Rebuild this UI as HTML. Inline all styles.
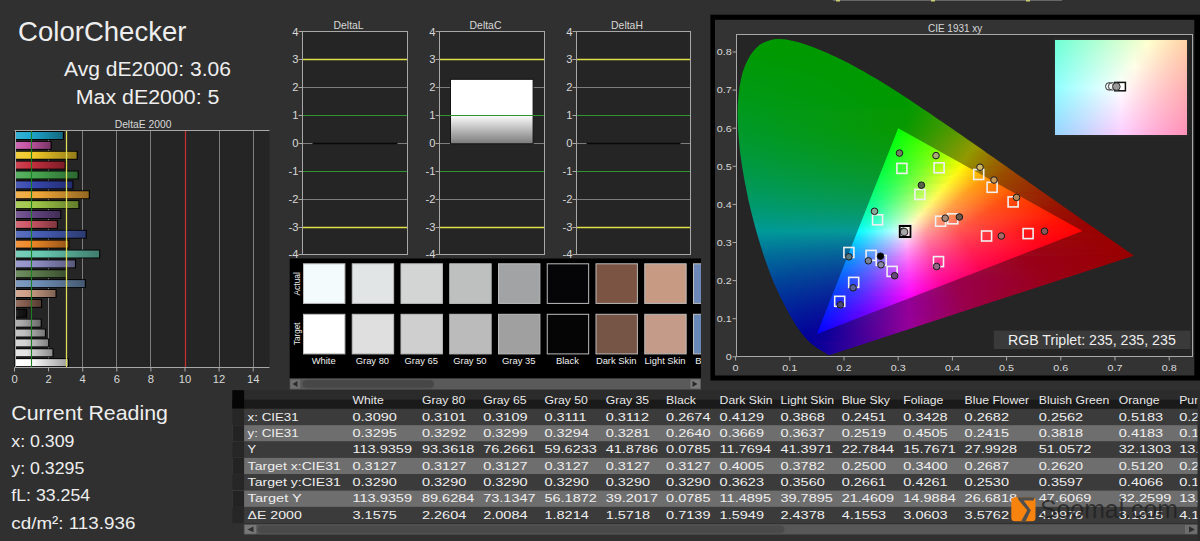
<!DOCTYPE html>
<html><head><meta charset="utf-8"><style>
html,body{margin:0;padding:0;background:#303030;overflow:hidden;width:1200px;height:541px}
svg{display:block;font-family:"Liberation Sans",sans-serif}
</style></head><body>
<svg width="1200" height="541" viewBox="0 0 1200 541">
<defs><linearGradient id="bg0" x1="0" y1="0" x2="1" y2="0"><stop offset="0" stop-color="#3ab2d5"/><stop offset=".3" stop-color="#20a8d0"/><stop offset="1" stop-color="#136880"/></linearGradient>
<linearGradient id="bg1" x1="0" y1="0" x2="1" y2="0"><stop offset="0" stop-color="#ce6cb2"/><stop offset=".3" stop-color="#c858a8"/><stop offset="1" stop-color="#7c3668"/></linearGradient>
<linearGradient id="bg2" x1="0" y1="0" x2="1" y2="0"><stop offset="0" stop-color="#f1ce41"/><stop offset=".3" stop-color="#f0c828"/><stop offset="1" stop-color="#947c18"/></linearGradient>
<linearGradient id="bg3" x1="0" y1="0" x2="1" y2="0"><stop offset="0" stop-color="#ce4856"/><stop offset=".3" stop-color="#c83040"/><stop offset="1" stop-color="#7c1d27"/></linearGradient>
<linearGradient id="bg4" x1="0" y1="0" x2="1" y2="0"><stop offset="0" stop-color="#5db265"/><stop offset=".3" stop-color="#48a850"/><stop offset="1" stop-color="#2c6831"/></linearGradient>
<linearGradient id="bg5" x1="0" y1="0" x2="1" y2="0"><stop offset="0" stop-color="#4f5db9"/><stop offset=".3" stop-color="#3848b0"/><stop offset="1" stop-color="#222c6d"/></linearGradient>
<linearGradient id="bg6" x1="0" y1="0" x2="1" y2="0"><stop offset="0" stop-color="#f1b24f"/><stop offset=".3" stop-color="#f0a838"/><stop offset="1" stop-color="#946822"/></linearGradient>
<linearGradient id="bg7" x1="0" y1="0" x2="1" y2="0"><stop offset="0" stop-color="#abce5d"/><stop offset=".3" stop-color="#a0c848"/><stop offset="1" stop-color="#637c2c"/></linearGradient>
<linearGradient id="bg8" x1="0" y1="0" x2="1" y2="0"><stop offset="0" stop-color="#7a5d96"/><stop offset=".3" stop-color="#684888"/><stop offset="1" stop-color="#402c54"/></linearGradient>
<linearGradient id="bg9" x1="0" y1="0" x2="1" y2="0"><stop offset="0" stop-color="#d56c7a"/><stop offset=".3" stop-color="#d05868"/><stop offset="1" stop-color="#803640"/></linearGradient>
<linearGradient id="bg10" x1="0" y1="0" x2="1" y2="0"><stop offset="0" stop-color="#5d73c0"/><stop offset=".3" stop-color="#4860b8"/><stop offset="1" stop-color="#2c3b72"/></linearGradient>
<linearGradient id="bg11" x1="0" y1="0" x2="1" y2="0"><stop offset="0" stop-color="#f19641"/><stop offset=".3" stop-color="#f08828"/><stop offset="1" stop-color="#945418"/></linearGradient>
<linearGradient id="bg12" x1="0" y1="0" x2="1" y2="0"><stop offset="0" stop-color="#7aceb9"/><stop offset=".3" stop-color="#68c8b0"/><stop offset="1" stop-color="#407c6d"/></linearGradient>
<linearGradient id="bg13" x1="0" y1="0" x2="1" y2="0"><stop offset="0" stop-color="#9d9dce"/><stop offset=".3" stop-color="#9090c8"/><stop offset="1" stop-color="#59597c"/></linearGradient>
<linearGradient id="bg14" x1="0" y1="0" x2="1" y2="0"><stop offset="0" stop-color="#738f65"/><stop offset=".3" stop-color="#608050"/><stop offset="1" stop-color="#3b4f31"/></linearGradient>
<linearGradient id="bg15" x1="0" y1="0" x2="1" y2="0"><stop offset="0" stop-color="#819dc0"/><stop offset=".3" stop-color="#7090b8"/><stop offset="1" stop-color="#455972"/></linearGradient>
<linearGradient id="bg16" x1="0" y1="0" x2="1" y2="0"><stop offset="0" stop-color="#d5ab96"/><stop offset=".3" stop-color="#d0a088"/><stop offset="1" stop-color="#806354"/></linearGradient>
<linearGradient id="bg17" x1="0" y1="0" x2="1" y2="0"><stop offset="0" stop-color="#967365"/><stop offset=".3" stop-color="#886050"/><stop offset="1" stop-color="#543b31"/></linearGradient>
<linearGradient id="bg18" x1="0" y1="0" x2="1" y2="0"><stop offset="0" stop-color="#333333"/><stop offset=".3" stop-color="#181818"/><stop offset="1" stop-color="#0e0e0e"/></linearGradient>
<linearGradient id="bg19" x1="0" y1="0" x2="1" y2="0"><stop offset="0" stop-color="#b2b2b2"/><stop offset=".3" stop-color="#a8a8a8"/><stop offset="1" stop-color="#686868"/></linearGradient>
<linearGradient id="bg20" x1="0" y1="0" x2="1" y2="0"><stop offset="0" stop-color="#c7c7c7"/><stop offset=".3" stop-color="#c0c0c0"/><stop offset="1" stop-color="#777777"/></linearGradient>
<linearGradient id="bg21" x1="0" y1="0" x2="1" y2="0"><stop offset="0" stop-color="#d9d9d9"/><stop offset=".3" stop-color="#d4d4d4"/><stop offset="1" stop-color="#838383"/></linearGradient>
<linearGradient id="bg22" x1="0" y1="0" x2="1" y2="0"><stop offset="0" stop-color="#e7e7e7"/><stop offset=".3" stop-color="#e4e4e4"/><stop offset="1" stop-color="#8d8d8d"/></linearGradient>
<linearGradient id="bg23" x1="0" y1="0" x2="1" y2="0"><stop offset="0" stop-color="#ffffff"/><stop offset=".3" stop-color="#ffffff"/><stop offset="1" stop-color="#9e9e9e"/></linearGradient>
<linearGradient id="dc" x1="0" y1="0" x2="0" y2="1"><stop offset="0" stop-color="#fff"/><stop offset=".55" stop-color="#fff"/><stop offset="1" stop-color="#7a7a7a"/></linearGradient>
<clipPath id="swc"><rect x="289.7" y="258.5" width="411.3" height="120"/></clipPath><linearGradient id="i0"><stop offset="0.00" stop-color="#6effd6"/><stop offset="0.10" stop-color="#84ffd5"/><stop offset="0.20" stop-color="#99ffd4"/><stop offset="0.30" stop-color="#adffd3"/><stop offset="0.40" stop-color="#c0ffd2"/><stop offset="0.50" stop-color="#d4ffd1"/><stop offset="0.60" stop-color="#e7ffd0"/><stop offset="0.70" stop-color="#fbffce"/><stop offset="0.80" stop-color="#fff0c1"/><stop offset="0.90" stop-color="#ffe0b3"/><stop offset="1.00" stop-color="#ffd1a6"/></linearGradient><linearGradient id="i1"><stop offset="0.00" stop-color="#6fffd7"/><stop offset="0.10" stop-color="#85ffd6"/><stop offset="0.20" stop-color="#99ffd5"/><stop offset="0.30" stop-color="#adffd4"/><stop offset="0.40" stop-color="#c1ffd3"/><stop offset="0.50" stop-color="#d5ffd2"/><stop offset="0.60" stop-color="#e8ffd1"/><stop offset="0.70" stop-color="#fcffcf"/><stop offset="0.80" stop-color="#fff0c2"/><stop offset="0.90" stop-color="#ffdfb3"/><stop offset="1.00" stop-color="#ffd1a6"/></linearGradient><linearGradient id="i2"><stop offset="0.00" stop-color="#70ffd7"/><stop offset="0.10" stop-color="#85ffd7"/><stop offset="0.20" stop-color="#9affd6"/><stop offset="0.30" stop-color="#aeffd5"/><stop offset="0.40" stop-color="#c2ffd4"/><stop offset="0.50" stop-color="#d5ffd3"/><stop offset="0.60" stop-color="#e9ffd1"/><stop offset="0.70" stop-color="#fdffd0"/><stop offset="0.80" stop-color="#ffefc2"/><stop offset="0.90" stop-color="#ffdeb3"/><stop offset="1.00" stop-color="#ffd0a7"/></linearGradient><linearGradient id="i3"><stop offset="0.00" stop-color="#70ffd8"/><stop offset="0.10" stop-color="#86ffd7"/><stop offset="0.20" stop-color="#9bffd6"/><stop offset="0.30" stop-color="#afffd5"/><stop offset="0.40" stop-color="#c3ffd5"/><stop offset="0.50" stop-color="#d6ffd3"/><stop offset="0.60" stop-color="#eaffd2"/><stop offset="0.70" stop-color="#feffd1"/><stop offset="0.80" stop-color="#ffeec2"/><stop offset="0.90" stop-color="#ffdeb4"/><stop offset="1.00" stop-color="#ffcfa7"/></linearGradient><linearGradient id="i4"><stop offset="0.00" stop-color="#71ffd9"/><stop offset="0.10" stop-color="#87ffd8"/><stop offset="0.20" stop-color="#9bffd7"/><stop offset="0.30" stop-color="#b0ffd6"/><stop offset="0.40" stop-color="#c3ffd5"/><stop offset="0.50" stop-color="#d7ffd4"/><stop offset="0.60" stop-color="#ebffd3"/><stop offset="0.70" stop-color="#feffd2"/><stop offset="0.80" stop-color="#ffedc2"/><stop offset="0.90" stop-color="#ffddb4"/><stop offset="1.00" stop-color="#ffcea7"/></linearGradient><linearGradient id="i5"><stop offset="0.00" stop-color="#72ffda"/><stop offset="0.10" stop-color="#87ffd9"/><stop offset="0.20" stop-color="#9cffd8"/><stop offset="0.30" stop-color="#b0ffd7"/><stop offset="0.40" stop-color="#c4ffd6"/><stop offset="0.50" stop-color="#d8ffd5"/><stop offset="0.60" stop-color="#ecffd4"/><stop offset="0.70" stop-color="#ffffd3"/><stop offset="0.80" stop-color="#ffecc2"/><stop offset="0.90" stop-color="#ffdcb4"/><stop offset="1.00" stop-color="#ffcea7"/></linearGradient><linearGradient id="i6"><stop offset="0.00" stop-color="#72ffdb"/><stop offset="0.10" stop-color="#88ffda"/><stop offset="0.20" stop-color="#9dffd9"/><stop offset="0.30" stop-color="#b1ffd8"/><stop offset="0.40" stop-color="#c5ffd7"/><stop offset="0.50" stop-color="#d9ffd6"/><stop offset="0.60" stop-color="#ecffd5"/><stop offset="0.70" stop-color="#fffed3"/><stop offset="0.80" stop-color="#ffebc3"/><stop offset="0.90" stop-color="#ffdbb4"/><stop offset="1.00" stop-color="#ffcda7"/></linearGradient><linearGradient id="i7"><stop offset="0.00" stop-color="#73ffdb"/><stop offset="0.10" stop-color="#89ffdb"/><stop offset="0.20" stop-color="#9dffda"/><stop offset="0.30" stop-color="#b2ffd9"/><stop offset="0.40" stop-color="#c6ffd8"/><stop offset="0.50" stop-color="#daffd7"/><stop offset="0.60" stop-color="#edffd6"/><stop offset="0.70" stop-color="#fffdd3"/><stop offset="0.80" stop-color="#ffeac3"/><stop offset="0.90" stop-color="#ffdab4"/><stop offset="1.00" stop-color="#ffcca8"/></linearGradient><linearGradient id="i8"><stop offset="0.00" stop-color="#74ffdc"/><stop offset="0.10" stop-color="#89ffdb"/><stop offset="0.20" stop-color="#9effdb"/><stop offset="0.30" stop-color="#b2ffda"/><stop offset="0.40" stop-color="#c7ffd9"/><stop offset="0.50" stop-color="#daffd8"/><stop offset="0.60" stop-color="#eeffd7"/><stop offset="0.70" stop-color="#fffcd3"/><stop offset="0.80" stop-color="#ffeac3"/><stop offset="0.90" stop-color="#ffdab5"/><stop offset="1.00" stop-color="#ffcba8"/></linearGradient><linearGradient id="i9"><stop offset="0.00" stop-color="#74ffdd"/><stop offset="0.10" stop-color="#8affdc"/><stop offset="0.20" stop-color="#9fffdb"/><stop offset="0.30" stop-color="#b3ffdb"/><stop offset="0.40" stop-color="#c7ffda"/><stop offset="0.50" stop-color="#dbffd9"/><stop offset="0.60" stop-color="#efffd8"/><stop offset="0.70" stop-color="#fffbd3"/><stop offset="0.80" stop-color="#ffe9c3"/><stop offset="0.90" stop-color="#ffd9b5"/><stop offset="1.00" stop-color="#ffcba8"/></linearGradient><linearGradient id="i10"><stop offset="0.00" stop-color="#75ffde"/><stop offset="0.10" stop-color="#8bffdd"/><stop offset="0.20" stop-color="#a0ffdc"/><stop offset="0.30" stop-color="#b4ffdc"/><stop offset="0.40" stop-color="#c8ffdb"/><stop offset="0.50" stop-color="#dcffda"/><stop offset="0.60" stop-color="#f0ffd9"/><stop offset="0.70" stop-color="#fffad4"/><stop offset="0.80" stop-color="#ffe8c3"/><stop offset="0.90" stop-color="#ffd8b5"/><stop offset="1.00" stop-color="#ffcaa8"/></linearGradient><linearGradient id="i11"><stop offset="0.00" stop-color="#76ffdf"/><stop offset="0.10" stop-color="#8bffde"/><stop offset="0.20" stop-color="#a0ffdd"/><stop offset="0.30" stop-color="#b5ffdc"/><stop offset="0.40" stop-color="#c9ffdc"/><stop offset="0.50" stop-color="#ddffdb"/><stop offset="0.60" stop-color="#f1ffda"/><stop offset="0.70" stop-color="#fff9d4"/><stop offset="0.80" stop-color="#ffe7c4"/><stop offset="0.90" stop-color="#ffd7b5"/><stop offset="1.00" stop-color="#ffc9a9"/></linearGradient><linearGradient id="i12"><stop offset="0.00" stop-color="#76ffe0"/><stop offset="0.10" stop-color="#8cffdf"/><stop offset="0.20" stop-color="#a1ffde"/><stop offset="0.30" stop-color="#b6ffdd"/><stop offset="0.40" stop-color="#caffdc"/><stop offset="0.50" stop-color="#deffdc"/><stop offset="0.60" stop-color="#f2ffdb"/><stop offset="0.70" stop-color="#fff8d4"/><stop offset="0.80" stop-color="#ffe6c4"/><stop offset="0.90" stop-color="#ffd7b5"/><stop offset="1.00" stop-color="#ffc9a9"/></linearGradient><linearGradient id="i13"><stop offset="0.00" stop-color="#77ffe0"/><stop offset="0.10" stop-color="#8dffe0"/><stop offset="0.20" stop-color="#a2ffdf"/><stop offset="0.30" stop-color="#b6ffde"/><stop offset="0.40" stop-color="#cbffdd"/><stop offset="0.50" stop-color="#dfffdd"/><stop offset="0.60" stop-color="#f3ffdc"/><stop offset="0.70" stop-color="#fff7d4"/><stop offset="0.80" stop-color="#ffe5c4"/><stop offset="0.90" stop-color="#ffd6b6"/><stop offset="1.00" stop-color="#ffc8a9"/></linearGradient><linearGradient id="i14"><stop offset="0.00" stop-color="#78ffe1"/><stop offset="0.10" stop-color="#8dffe1"/><stop offset="0.20" stop-color="#a3ffe0"/><stop offset="0.30" stop-color="#b7ffdf"/><stop offset="0.40" stop-color="#cbffde"/><stop offset="0.50" stop-color="#dfffdd"/><stop offset="0.60" stop-color="#f4ffdd"/><stop offset="0.70" stop-color="#fff6d4"/><stop offset="0.80" stop-color="#ffe5c4"/><stop offset="0.90" stop-color="#ffd5b6"/><stop offset="1.00" stop-color="#ffc7a9"/></linearGradient><linearGradient id="i15"><stop offset="0.00" stop-color="#78ffe2"/><stop offset="0.10" stop-color="#8effe1"/><stop offset="0.20" stop-color="#a3ffe1"/><stop offset="0.30" stop-color="#b8ffe0"/><stop offset="0.40" stop-color="#ccffdf"/><stop offset="0.50" stop-color="#e0ffde"/><stop offset="0.60" stop-color="#f5ffde"/><stop offset="0.70" stop-color="#fff5d4"/><stop offset="0.80" stop-color="#ffe4c4"/><stop offset="0.90" stop-color="#ffd4b6"/><stop offset="1.00" stop-color="#ffc6a9"/></linearGradient><linearGradient id="i16"><stop offset="0.00" stop-color="#79ffe3"/><stop offset="0.10" stop-color="#8fffe2"/><stop offset="0.20" stop-color="#a4ffe2"/><stop offset="0.30" stop-color="#b9ffe1"/><stop offset="0.40" stop-color="#cdffe0"/><stop offset="0.50" stop-color="#e1ffdf"/><stop offset="0.60" stop-color="#f5ffdf"/><stop offset="0.70" stop-color="#fff5d5"/><stop offset="0.80" stop-color="#ffe3c4"/><stop offset="0.90" stop-color="#ffd3b6"/><stop offset="1.00" stop-color="#ffc6aa"/></linearGradient><linearGradient id="i17"><stop offset="0.00" stop-color="#7affe4"/><stop offset="0.10" stop-color="#90ffe3"/><stop offset="0.20" stop-color="#a5ffe2"/><stop offset="0.30" stop-color="#b9ffe2"/><stop offset="0.40" stop-color="#ceffe1"/><stop offset="0.50" stop-color="#e2ffe0"/><stop offset="0.60" stop-color="#f6ffe0"/><stop offset="0.70" stop-color="#fff4d5"/><stop offset="0.80" stop-color="#ffe2c5"/><stop offset="0.90" stop-color="#ffd3b6"/><stop offset="1.00" stop-color="#ffc5aa"/></linearGradient><linearGradient id="i18"><stop offset="0.00" stop-color="#7affe5"/><stop offset="0.10" stop-color="#90ffe4"/><stop offset="0.20" stop-color="#a5ffe3"/><stop offset="0.30" stop-color="#baffe3"/><stop offset="0.40" stop-color="#cfffe2"/><stop offset="0.50" stop-color="#e3ffe1"/><stop offset="0.60" stop-color="#f7ffe0"/><stop offset="0.70" stop-color="#fff3d5"/><stop offset="0.80" stop-color="#ffe1c5"/><stop offset="0.90" stop-color="#ffd2b7"/><stop offset="1.00" stop-color="#ffc4aa"/></linearGradient><linearGradient id="i19"><stop offset="0.00" stop-color="#7bffe5"/><stop offset="0.10" stop-color="#91ffe5"/><stop offset="0.20" stop-color="#a6ffe4"/><stop offset="0.30" stop-color="#bbffe4"/><stop offset="0.40" stop-color="#cfffe3"/><stop offset="0.50" stop-color="#e4ffe2"/><stop offset="0.60" stop-color="#f8ffe1"/><stop offset="0.70" stop-color="#fff2d5"/><stop offset="0.80" stop-color="#ffe0c5"/><stop offset="0.90" stop-color="#ffd1b7"/><stop offset="1.00" stop-color="#ffc4aa"/></linearGradient><linearGradient id="i20"><stop offset="0.00" stop-color="#7cffe6"/><stop offset="0.10" stop-color="#92ffe6"/><stop offset="0.20" stop-color="#a7ffe5"/><stop offset="0.30" stop-color="#bcffe4"/><stop offset="0.40" stop-color="#d0ffe4"/><stop offset="0.50" stop-color="#e5ffe3"/><stop offset="0.60" stop-color="#f9ffe2"/><stop offset="0.70" stop-color="#fff1d5"/><stop offset="0.80" stop-color="#ffe0c5"/><stop offset="0.90" stop-color="#ffd0b7"/><stop offset="1.00" stop-color="#ffc3ab"/></linearGradient><linearGradient id="i21"><stop offset="0.00" stop-color="#7cffe7"/><stop offset="0.10" stop-color="#92ffe7"/><stop offset="0.20" stop-color="#a8ffe6"/><stop offset="0.30" stop-color="#bdffe5"/><stop offset="0.40" stop-color="#d1ffe5"/><stop offset="0.50" stop-color="#e6ffe4"/><stop offset="0.60" stop-color="#faffe3"/><stop offset="0.70" stop-color="#fff0d5"/><stop offset="0.80" stop-color="#ffdfc5"/><stop offset="0.90" stop-color="#ffd0b7"/><stop offset="1.00" stop-color="#ffc2ab"/></linearGradient><linearGradient id="i22"><stop offset="0.00" stop-color="#7dffe8"/><stop offset="0.10" stop-color="#93ffe7"/><stop offset="0.20" stop-color="#a8ffe7"/><stop offset="0.30" stop-color="#bdffe6"/><stop offset="0.40" stop-color="#d2ffe6"/><stop offset="0.50" stop-color="#e7ffe5"/><stop offset="0.60" stop-color="#fbffe4"/><stop offset="0.70" stop-color="#ffefd6"/><stop offset="0.80" stop-color="#ffdec6"/><stop offset="0.90" stop-color="#ffcfb7"/><stop offset="1.00" stop-color="#ffc1ab"/></linearGradient><linearGradient id="i23"><stop offset="0.00" stop-color="#7effe9"/><stop offset="0.10" stop-color="#94ffe8"/><stop offset="0.20" stop-color="#a9ffe8"/><stop offset="0.30" stop-color="#beffe7"/><stop offset="0.40" stop-color="#d3ffe7"/><stop offset="0.50" stop-color="#e7ffe6"/><stop offset="0.60" stop-color="#fcffe5"/><stop offset="0.70" stop-color="#ffeed6"/><stop offset="0.80" stop-color="#ffddc6"/><stop offset="0.90" stop-color="#ffceb8"/><stop offset="1.00" stop-color="#ffc1ab"/></linearGradient><linearGradient id="i24"><stop offset="0.00" stop-color="#7fffea"/><stop offset="0.10" stop-color="#95ffe9"/><stop offset="0.20" stop-color="#aaffe9"/><stop offset="0.30" stop-color="#bfffe8"/><stop offset="0.40" stop-color="#d4ffe8"/><stop offset="0.50" stop-color="#e8ffe7"/><stop offset="0.60" stop-color="#fdffe6"/><stop offset="0.70" stop-color="#ffedd6"/><stop offset="0.80" stop-color="#ffdcc6"/><stop offset="0.90" stop-color="#ffcdb8"/><stop offset="1.00" stop-color="#ffc0ab"/></linearGradient><linearGradient id="i25"><stop offset="0.00" stop-color="#7fffeb"/><stop offset="0.10" stop-color="#95ffea"/><stop offset="0.20" stop-color="#abffea"/><stop offset="0.30" stop-color="#c0ffe9"/><stop offset="0.40" stop-color="#d5ffe9"/><stop offset="0.50" stop-color="#e9ffe8"/><stop offset="0.60" stop-color="#feffe7"/><stop offset="0.70" stop-color="#ffecd6"/><stop offset="0.80" stop-color="#ffdcc6"/><stop offset="0.90" stop-color="#ffcdb8"/><stop offset="1.00" stop-color="#ffbfac"/></linearGradient><linearGradient id="i26"><stop offset="0.00" stop-color="#80ffeb"/><stop offset="0.10" stop-color="#96ffeb"/><stop offset="0.20" stop-color="#acffeb"/><stop offset="0.30" stop-color="#c1ffea"/><stop offset="0.40" stop-color="#d5ffea"/><stop offset="0.50" stop-color="#eaffe9"/><stop offset="0.60" stop-color="#ffffe8"/><stop offset="0.70" stop-color="#ffecd6"/><stop offset="0.80" stop-color="#ffdbc6"/><stop offset="0.90" stop-color="#ffccb8"/><stop offset="1.00" stop-color="#ffbfac"/></linearGradient><linearGradient id="i27"><stop offset="0.00" stop-color="#81ffec"/><stop offset="0.10" stop-color="#97ffec"/><stop offset="0.20" stop-color="#acffeb"/><stop offset="0.30" stop-color="#c1ffeb"/><stop offset="0.40" stop-color="#d6ffeb"/><stop offset="0.50" stop-color="#ebffea"/><stop offset="0.60" stop-color="#fffee9"/><stop offset="0.70" stop-color="#ffebd6"/><stop offset="0.80" stop-color="#ffdac6"/><stop offset="0.90" stop-color="#ffcbb8"/><stop offset="1.00" stop-color="#ffbeac"/></linearGradient><linearGradient id="i28"><stop offset="0.00" stop-color="#81ffed"/><stop offset="0.10" stop-color="#98ffed"/><stop offset="0.20" stop-color="#adffec"/><stop offset="0.30" stop-color="#c2ffec"/><stop offset="0.40" stop-color="#d7ffeb"/><stop offset="0.50" stop-color="#ecffeb"/><stop offset="0.60" stop-color="#fffde9"/><stop offset="0.70" stop-color="#ffead7"/><stop offset="0.80" stop-color="#ffd9c7"/><stop offset="0.90" stop-color="#ffcab9"/><stop offset="1.00" stop-color="#ffbdac"/></linearGradient><linearGradient id="i29"><stop offset="0.00" stop-color="#82ffee"/><stop offset="0.10" stop-color="#98ffee"/><stop offset="0.20" stop-color="#aeffed"/><stop offset="0.30" stop-color="#c3ffed"/><stop offset="0.40" stop-color="#d8ffec"/><stop offset="0.50" stop-color="#edffec"/><stop offset="0.60" stop-color="#fffce9"/><stop offset="0.70" stop-color="#ffe9d7"/><stop offset="0.80" stop-color="#ffd8c7"/><stop offset="0.90" stop-color="#ffcab9"/><stop offset="1.00" stop-color="#ffbcac"/></linearGradient><linearGradient id="i30"><stop offset="0.00" stop-color="#83ffef"/><stop offset="0.10" stop-color="#99ffef"/><stop offset="0.20" stop-color="#afffee"/><stop offset="0.30" stop-color="#c4ffee"/><stop offset="0.40" stop-color="#d9ffed"/><stop offset="0.50" stop-color="#eeffed"/><stop offset="0.60" stop-color="#fffbe9"/><stop offset="0.70" stop-color="#ffe8d7"/><stop offset="0.80" stop-color="#ffd7c7"/><stop offset="0.90" stop-color="#ffc9b9"/><stop offset="1.00" stop-color="#ffbcad"/></linearGradient><linearGradient id="i31"><stop offset="0.00" stop-color="#84fff0"/><stop offset="0.10" stop-color="#9afff0"/><stop offset="0.20" stop-color="#afffef"/><stop offset="0.30" stop-color="#c5ffef"/><stop offset="0.40" stop-color="#daffee"/><stop offset="0.50" stop-color="#efffee"/><stop offset="0.60" stop-color="#fffae9"/><stop offset="0.70" stop-color="#ffe7d7"/><stop offset="0.80" stop-color="#ffd7c7"/><stop offset="0.90" stop-color="#ffc8b9"/><stop offset="1.00" stop-color="#ffbbad"/></linearGradient><linearGradient id="i32"><stop offset="0.00" stop-color="#84fff1"/><stop offset="0.10" stop-color="#9bfff0"/><stop offset="0.20" stop-color="#b0fff0"/><stop offset="0.30" stop-color="#c6fff0"/><stop offset="0.40" stop-color="#dbffef"/><stop offset="0.50" stop-color="#f0ffef"/><stop offset="0.60" stop-color="#fff9e9"/><stop offset="0.70" stop-color="#ffe6d7"/><stop offset="0.80" stop-color="#ffd6c7"/><stop offset="0.90" stop-color="#ffc7b9"/><stop offset="1.00" stop-color="#ffbaad"/></linearGradient><linearGradient id="i33"><stop offset="0.00" stop-color="#85fff2"/><stop offset="0.10" stop-color="#9bfff1"/><stop offset="0.20" stop-color="#b1fff1"/><stop offset="0.30" stop-color="#c6fff1"/><stop offset="0.40" stop-color="#dcfff0"/><stop offset="0.50" stop-color="#f1fff0"/><stop offset="0.60" stop-color="#fff8e9"/><stop offset="0.70" stop-color="#ffe5d7"/><stop offset="0.80" stop-color="#ffd5c8"/><stop offset="0.90" stop-color="#ffc7ba"/><stop offset="1.00" stop-color="#ffbaad"/></linearGradient><linearGradient id="i34"><stop offset="0.00" stop-color="#86fff3"/><stop offset="0.10" stop-color="#9cfff2"/><stop offset="0.20" stop-color="#b2fff2"/><stop offset="0.30" stop-color="#c7fff2"/><stop offset="0.40" stop-color="#dcfff1"/><stop offset="0.50" stop-color="#f2fff1"/><stop offset="0.60" stop-color="#fff7e9"/><stop offset="0.70" stop-color="#ffe5d7"/><stop offset="0.80" stop-color="#ffd4c8"/><stop offset="0.90" stop-color="#ffc6ba"/><stop offset="1.00" stop-color="#ffb9ad"/></linearGradient><linearGradient id="i35"><stop offset="0.00" stop-color="#86fff4"/><stop offset="0.10" stop-color="#9dfff3"/><stop offset="0.20" stop-color="#b3fff3"/><stop offset="0.30" stop-color="#c8fff3"/><stop offset="0.40" stop-color="#ddfff2"/><stop offset="0.50" stop-color="#f3fff2"/><stop offset="0.60" stop-color="#fff6ea"/><stop offset="0.70" stop-color="#ffe4d8"/><stop offset="0.80" stop-color="#ffd3c8"/><stop offset="0.90" stop-color="#ffc5ba"/><stop offset="1.00" stop-color="#ffb8ae"/></linearGradient><linearGradient id="i36"><stop offset="0.00" stop-color="#87fff4"/><stop offset="0.10" stop-color="#9efff4"/><stop offset="0.20" stop-color="#b3fff4"/><stop offset="0.30" stop-color="#c9fff4"/><stop offset="0.40" stop-color="#defff3"/><stop offset="0.50" stop-color="#f4fff3"/><stop offset="0.60" stop-color="#fff5ea"/><stop offset="0.70" stop-color="#ffe3d8"/><stop offset="0.80" stop-color="#ffd3c8"/><stop offset="0.90" stop-color="#ffc4ba"/><stop offset="1.00" stop-color="#ffb8ae"/></linearGradient><linearGradient id="i37"><stop offset="0.00" stop-color="#88fff5"/><stop offset="0.10" stop-color="#9efff5"/><stop offset="0.20" stop-color="#b4fff5"/><stop offset="0.30" stop-color="#cafff5"/><stop offset="0.40" stop-color="#dffff4"/><stop offset="0.50" stop-color="#f5fff4"/><stop offset="0.60" stop-color="#fff4ea"/><stop offset="0.70" stop-color="#ffe2d8"/><stop offset="0.80" stop-color="#ffd2c8"/><stop offset="0.90" stop-color="#ffc4ba"/><stop offset="1.00" stop-color="#ffb7ae"/></linearGradient><linearGradient id="i38"><stop offset="0.00" stop-color="#89fff6"/><stop offset="0.10" stop-color="#9ffff6"/><stop offset="0.20" stop-color="#b5fff6"/><stop offset="0.30" stop-color="#cbfff6"/><stop offset="0.40" stop-color="#e0fff5"/><stop offset="0.50" stop-color="#f5fff5"/><stop offset="0.60" stop-color="#fff3ea"/><stop offset="0.70" stop-color="#ffe1d8"/><stop offset="0.80" stop-color="#ffd1c8"/><stop offset="0.90" stop-color="#ffc3bb"/><stop offset="1.00" stop-color="#ffb6ae"/></linearGradient><linearGradient id="i39"><stop offset="0.00" stop-color="#89fff7"/><stop offset="0.10" stop-color="#a0fff7"/><stop offset="0.20" stop-color="#b6fff7"/><stop offset="0.30" stop-color="#cbfff7"/><stop offset="0.40" stop-color="#e1fff7"/><stop offset="0.50" stop-color="#f6fff6"/><stop offset="0.60" stop-color="#fff3ea"/><stop offset="0.70" stop-color="#ffe0d8"/><stop offset="0.80" stop-color="#ffd0c9"/><stop offset="0.90" stop-color="#ffc2bb"/><stop offset="1.00" stop-color="#ffb5ae"/></linearGradient><linearGradient id="i40"><stop offset="0.00" stop-color="#8afff8"/><stop offset="0.10" stop-color="#a1fff8"/><stop offset="0.20" stop-color="#b7fff8"/><stop offset="0.30" stop-color="#ccfff8"/><stop offset="0.40" stop-color="#e2fff8"/><stop offset="0.50" stop-color="#f7fff7"/><stop offset="0.60" stop-color="#fff2ea"/><stop offset="0.70" stop-color="#ffdfd8"/><stop offset="0.80" stop-color="#ffcfc9"/><stop offset="0.90" stop-color="#ffc1bb"/><stop offset="1.00" stop-color="#ffb5af"/></linearGradient><linearGradient id="i41"><stop offset="0.00" stop-color="#8bfff9"/><stop offset="0.10" stop-color="#a2fff9"/><stop offset="0.20" stop-color="#b8fff9"/><stop offset="0.30" stop-color="#cdfff9"/><stop offset="0.40" stop-color="#e3fff9"/><stop offset="0.50" stop-color="#f8fff8"/><stop offset="0.60" stop-color="#fff1ea"/><stop offset="0.70" stop-color="#ffded9"/><stop offset="0.80" stop-color="#ffcfc9"/><stop offset="0.90" stop-color="#ffc1bb"/><stop offset="1.00" stop-color="#ffb4af"/></linearGradient><linearGradient id="i42"><stop offset="0.00" stop-color="#8cfffa"/><stop offset="0.10" stop-color="#a2fffa"/><stop offset="0.20" stop-color="#b8fffa"/><stop offset="0.30" stop-color="#cefffa"/><stop offset="0.40" stop-color="#e4fffa"/><stop offset="0.50" stop-color="#f9fffa"/><stop offset="0.60" stop-color="#fff0ea"/><stop offset="0.70" stop-color="#ffded9"/><stop offset="0.80" stop-color="#ffcec9"/><stop offset="0.90" stop-color="#ffc0bb"/><stop offset="1.00" stop-color="#ffb3af"/></linearGradient><linearGradient id="i43"><stop offset="0.00" stop-color="#8cfffb"/><stop offset="0.10" stop-color="#a3fffb"/><stop offset="0.20" stop-color="#b9fffb"/><stop offset="0.30" stop-color="#cffffb"/><stop offset="0.40" stop-color="#e5fffb"/><stop offset="0.50" stop-color="#fafffb"/><stop offset="0.60" stop-color="#ffefeb"/><stop offset="0.70" stop-color="#ffddd9"/><stop offset="0.80" stop-color="#ffcdc9"/><stop offset="0.90" stop-color="#ffbfbc"/><stop offset="1.00" stop-color="#ffb3af"/></linearGradient><linearGradient id="i44"><stop offset="0.00" stop-color="#8dfffc"/><stop offset="0.10" stop-color="#a4fffc"/><stop offset="0.20" stop-color="#bafffc"/><stop offset="0.30" stop-color="#d0fffc"/><stop offset="0.40" stop-color="#e6fffc"/><stop offset="0.50" stop-color="#fbfffc"/><stop offset="0.60" stop-color="#ffeeeb"/><stop offset="0.70" stop-color="#ffdcd9"/><stop offset="0.80" stop-color="#ffccc9"/><stop offset="0.90" stop-color="#ffbebc"/><stop offset="1.00" stop-color="#ffb2af"/></linearGradient><linearGradient id="i45"><stop offset="0.00" stop-color="#8efffd"/><stop offset="0.10" stop-color="#a5fffd"/><stop offset="0.20" stop-color="#bbfffd"/><stop offset="0.30" stop-color="#d1fffd"/><stop offset="0.40" stop-color="#e7fffd"/><stop offset="0.50" stop-color="#fcfffd"/><stop offset="0.60" stop-color="#ffedeb"/><stop offset="0.70" stop-color="#ffdbd9"/><stop offset="0.80" stop-color="#ffcbca"/><stop offset="0.90" stop-color="#ffbebc"/><stop offset="1.00" stop-color="#ffb1b0"/></linearGradient><linearGradient id="i46"><stop offset="0.00" stop-color="#8ffffe"/><stop offset="0.10" stop-color="#a5fffe"/><stop offset="0.20" stop-color="#bcfffe"/><stop offset="0.30" stop-color="#d2fffe"/><stop offset="0.40" stop-color="#e8fffe"/><stop offset="0.50" stop-color="#fdfffe"/><stop offset="0.60" stop-color="#ffeceb"/><stop offset="0.70" stop-color="#ffdad9"/><stop offset="0.80" stop-color="#ffcbca"/><stop offset="0.90" stop-color="#ffbdbc"/><stop offset="1.00" stop-color="#ffb1b0"/></linearGradient><linearGradient id="i47"><stop offset="0.00" stop-color="#90ffff"/><stop offset="0.10" stop-color="#a6ffff"/><stop offset="0.20" stop-color="#bdffff"/><stop offset="0.30" stop-color="#d3ffff"/><stop offset="0.40" stop-color="#e8ffff"/><stop offset="0.50" stop-color="#feffff"/><stop offset="0.60" stop-color="#ffebeb"/><stop offset="0.70" stop-color="#ffd9d9"/><stop offset="0.80" stop-color="#ffcaca"/><stop offset="0.90" stop-color="#ffbcbc"/><stop offset="1.00" stop-color="#ffb0b0"/></linearGradient><linearGradient id="i48"><stop offset="0.00" stop-color="#90feff"/><stop offset="0.10" stop-color="#a7feff"/><stop offset="0.20" stop-color="#bdfeff"/><stop offset="0.30" stop-color="#d3feff"/><stop offset="0.40" stop-color="#e9feff"/><stop offset="0.50" stop-color="#fefeff"/><stop offset="0.60" stop-color="#ffeaeb"/><stop offset="0.70" stop-color="#ffd8da"/><stop offset="0.80" stop-color="#ffc9ca"/><stop offset="0.90" stop-color="#ffbbbc"/><stop offset="1.00" stop-color="#ffafb0"/></linearGradient><linearGradient id="i49"><stop offset="0.00" stop-color="#90fdff"/><stop offset="0.10" stop-color="#a7fdff"/><stop offset="0.20" stop-color="#bdfdff"/><stop offset="0.30" stop-color="#d3fdff"/><stop offset="0.40" stop-color="#e8fdff"/><stop offset="0.50" stop-color="#fefdff"/><stop offset="0.60" stop-color="#ffe9eb"/><stop offset="0.70" stop-color="#ffd8da"/><stop offset="0.80" stop-color="#ffc8ca"/><stop offset="0.90" stop-color="#ffbbbd"/><stop offset="1.00" stop-color="#ffaeb0"/></linearGradient><linearGradient id="i50"><stop offset="0.00" stop-color="#90fcff"/><stop offset="0.10" stop-color="#a7fcff"/><stop offset="0.20" stop-color="#bdfcff"/><stop offset="0.30" stop-color="#d3fcff"/><stop offset="0.40" stop-color="#e8fcff"/><stop offset="0.50" stop-color="#fefcff"/><stop offset="0.60" stop-color="#ffe8eb"/><stop offset="0.70" stop-color="#ffd7da"/><stop offset="0.80" stop-color="#ffc7ca"/><stop offset="0.90" stop-color="#ffbabd"/><stop offset="1.00" stop-color="#ffaeb1"/></linearGradient><linearGradient id="i51"><stop offset="0.00" stop-color="#90fbff"/><stop offset="0.10" stop-color="#a7fbff"/><stop offset="0.20" stop-color="#bdfbff"/><stop offset="0.30" stop-color="#d3fbff"/><stop offset="0.40" stop-color="#e8fbff"/><stop offset="0.50" stop-color="#fefbff"/><stop offset="0.60" stop-color="#ffe7ec"/><stop offset="0.70" stop-color="#ffd6da"/><stop offset="0.80" stop-color="#ffc7cb"/><stop offset="0.90" stop-color="#ffb9bd"/><stop offset="1.00" stop-color="#ffadb1"/></linearGradient><linearGradient id="i52"><stop offset="0.00" stop-color="#91faff"/><stop offset="0.10" stop-color="#a7faff"/><stop offset="0.20" stop-color="#bdfaff"/><stop offset="0.30" stop-color="#d3faff"/><stop offset="0.40" stop-color="#e8faff"/><stop offset="0.50" stop-color="#fefaff"/><stop offset="0.60" stop-color="#ffe6ec"/><stop offset="0.70" stop-color="#ffd5da"/><stop offset="0.80" stop-color="#ffc6cb"/><stop offset="0.90" stop-color="#ffb8bd"/><stop offset="1.00" stop-color="#ffacb1"/></linearGradient><linearGradient id="i53"><stop offset="0.00" stop-color="#91f9ff"/><stop offset="0.10" stop-color="#a7f9ff"/><stop offset="0.20" stop-color="#bdf9ff"/><stop offset="0.30" stop-color="#d3f9ff"/><stop offset="0.40" stop-color="#e8f9ff"/><stop offset="0.50" stop-color="#fef8ff"/><stop offset="0.60" stop-color="#ffe5ec"/><stop offset="0.70" stop-color="#ffd4da"/><stop offset="0.80" stop-color="#ffc5cb"/><stop offset="0.90" stop-color="#ffb8bd"/><stop offset="1.00" stop-color="#ffacb1"/></linearGradient><linearGradient id="i54"><stop offset="0.00" stop-color="#91f8ff"/><stop offset="0.10" stop-color="#a7f8ff"/><stop offset="0.20" stop-color="#bdf8ff"/><stop offset="0.30" stop-color="#d3f8ff"/><stop offset="0.40" stop-color="#e8f8ff"/><stop offset="0.50" stop-color="#fef7ff"/><stop offset="0.60" stop-color="#ffe5ec"/><stop offset="0.70" stop-color="#ffd3da"/><stop offset="0.80" stop-color="#ffc4cb"/><stop offset="0.90" stop-color="#ffb7be"/><stop offset="1.00" stop-color="#ffabb1"/></linearGradient><linearGradient id="i55"><stop offset="0.00" stop-color="#91f8ff"/><stop offset="0.10" stop-color="#a8f7ff"/><stop offset="0.20" stop-color="#bdf7ff"/><stop offset="0.30" stop-color="#d3f7ff"/><stop offset="0.40" stop-color="#e8f7ff"/><stop offset="0.50" stop-color="#fef6ff"/><stop offset="0.60" stop-color="#ffe4ec"/><stop offset="0.70" stop-color="#ffd3db"/><stop offset="0.80" stop-color="#ffc4cb"/><stop offset="0.90" stop-color="#ffb6be"/><stop offset="1.00" stop-color="#ffaab2"/></linearGradient><linearGradient id="i56"><stop offset="0.00" stop-color="#92f7ff"/><stop offset="0.10" stop-color="#a8f6ff"/><stop offset="0.20" stop-color="#bef6ff"/><stop offset="0.30" stop-color="#d3f6ff"/><stop offset="0.40" stop-color="#e8f5ff"/><stop offset="0.50" stop-color="#fef5ff"/><stop offset="0.60" stop-color="#ffe3ec"/><stop offset="0.70" stop-color="#ffd2db"/><stop offset="0.80" stop-color="#ffc3cb"/><stop offset="0.90" stop-color="#ffb6be"/><stop offset="1.00" stop-color="#ffaab2"/></linearGradient><linearGradient id="i57"><stop offset="0.00" stop-color="#92f6ff"/><stop offset="0.10" stop-color="#a8f5ff"/><stop offset="0.20" stop-color="#bef5ff"/><stop offset="0.30" stop-color="#d3f5ff"/><stop offset="0.40" stop-color="#e8f4ff"/><stop offset="0.50" stop-color="#fef4ff"/><stop offset="0.60" stop-color="#ffe2ec"/><stop offset="0.70" stop-color="#ffd1db"/><stop offset="0.80" stop-color="#ffc2cc"/><stop offset="0.90" stop-color="#ffb5be"/><stop offset="1.00" stop-color="#ffa9b2"/></linearGradient><linearGradient id="i58"><stop offset="0.00" stop-color="#92f5ff"/><stop offset="0.10" stop-color="#a8f4ff"/><stop offset="0.20" stop-color="#bef4ff"/><stop offset="0.30" stop-color="#d3f4ff"/><stop offset="0.40" stop-color="#e8f3ff"/><stop offset="0.50" stop-color="#fef3ff"/><stop offset="0.60" stop-color="#ffe1ec"/><stop offset="0.70" stop-color="#ffd0db"/><stop offset="0.80" stop-color="#ffc1cc"/><stop offset="0.90" stop-color="#ffb4be"/><stop offset="1.00" stop-color="#ffa8b2"/></linearGradient><linearGradient id="i59"><stop offset="0.00" stop-color="#92f4ff"/><stop offset="0.10" stop-color="#a8f3ff"/><stop offset="0.20" stop-color="#bef3ff"/><stop offset="0.30" stop-color="#d3f3ff"/><stop offset="0.40" stop-color="#e8f2ff"/><stop offset="0.50" stop-color="#fef2ff"/><stop offset="0.60" stop-color="#ffe0ec"/><stop offset="0.70" stop-color="#ffcfdb"/><stop offset="0.80" stop-color="#ffc0cc"/><stop offset="0.90" stop-color="#ffb3be"/><stop offset="1.00" stop-color="#ffa8b2"/></linearGradient><linearGradient id="i60"><stop offset="0.00" stop-color="#92f3ff"/><stop offset="0.10" stop-color="#a8f2ff"/><stop offset="0.20" stop-color="#bef2ff"/><stop offset="0.30" stop-color="#d3f2ff"/><stop offset="0.40" stop-color="#e8f1ff"/><stop offset="0.50" stop-color="#fef1ff"/><stop offset="0.60" stop-color="#ffdfed"/><stop offset="0.70" stop-color="#ffcedb"/><stop offset="0.80" stop-color="#ffc0cc"/><stop offset="0.90" stop-color="#ffb3bf"/><stop offset="1.00" stop-color="#ffa7b2"/></linearGradient><linearGradient id="i61"><stop offset="0.00" stop-color="#93f2ff"/><stop offset="0.10" stop-color="#a9f1ff"/><stop offset="0.20" stop-color="#bef1ff"/><stop offset="0.30" stop-color="#d3f1ff"/><stop offset="0.40" stop-color="#e8f0ff"/><stop offset="0.50" stop-color="#fdf0ff"/><stop offset="0.60" stop-color="#ffdeed"/><stop offset="0.70" stop-color="#ffcddb"/><stop offset="0.80" stop-color="#ffbfcc"/><stop offset="0.90" stop-color="#ffb2bf"/><stop offset="1.00" stop-color="#ffa6b3"/></linearGradient><linearGradient id="i62"><stop offset="0.00" stop-color="#93f1ff"/><stop offset="0.10" stop-color="#a9f1ff"/><stop offset="0.20" stop-color="#bef0ff"/><stop offset="0.30" stop-color="#d3f0ff"/><stop offset="0.40" stop-color="#e8efff"/><stop offset="0.50" stop-color="#fdefff"/><stop offset="0.60" stop-color="#ffdded"/><stop offset="0.70" stop-color="#ffcddc"/><stop offset="0.80" stop-color="#ffbecc"/><stop offset="0.90" stop-color="#ffb1bf"/><stop offset="1.00" stop-color="#ffa5b3"/></linearGradient><linearGradient id="i63"><stop offset="0.00" stop-color="#93f0ff"/><stop offset="0.10" stop-color="#a9f0ff"/><stop offset="0.20" stop-color="#beefff"/><stop offset="0.30" stop-color="#d3efff"/><stop offset="0.40" stop-color="#e8eeff"/><stop offset="0.50" stop-color="#fdeeff"/><stop offset="0.60" stop-color="#ffdced"/><stop offset="0.70" stop-color="#ffccdc"/><stop offset="0.80" stop-color="#ffbdcd"/><stop offset="0.90" stop-color="#ffb0bf"/><stop offset="1.00" stop-color="#ffa5b3"/></linearGradient><linearGradient id="i64"><stop offset="0.00" stop-color="#93efff"/><stop offset="0.10" stop-color="#a9efff"/><stop offset="0.20" stop-color="#beeeff"/><stop offset="0.30" stop-color="#d3eeff"/><stop offset="0.40" stop-color="#e8edff"/><stop offset="0.50" stop-color="#fdedff"/><stop offset="0.60" stop-color="#ffdbed"/><stop offset="0.70" stop-color="#ffcbdc"/><stop offset="0.80" stop-color="#ffbdcd"/><stop offset="0.90" stop-color="#ffb0bf"/><stop offset="1.00" stop-color="#ffa4b3"/></linearGradient><linearGradient id="i65"><stop offset="0.00" stop-color="#93eeff"/><stop offset="0.10" stop-color="#a9eeff"/><stop offset="0.20" stop-color="#beedff"/><stop offset="0.30" stop-color="#d3edff"/><stop offset="0.40" stop-color="#e8ecff"/><stop offset="0.50" stop-color="#fdecff"/><stop offset="0.60" stop-color="#ffdaed"/><stop offset="0.70" stop-color="#ffcadc"/><stop offset="0.80" stop-color="#ffbccd"/><stop offset="0.90" stop-color="#ffafbf"/><stop offset="1.00" stop-color="#ffa3b3"/></linearGradient><linearGradient id="i66"><stop offset="0.00" stop-color="#94edff"/><stop offset="0.10" stop-color="#a9edff"/><stop offset="0.20" stop-color="#beecff"/><stop offset="0.30" stop-color="#d3ecff"/><stop offset="0.40" stop-color="#e8ebff"/><stop offset="0.50" stop-color="#fdebff"/><stop offset="0.60" stop-color="#ffdaed"/><stop offset="0.70" stop-color="#ffc9dc"/><stop offset="0.80" stop-color="#ffbbcd"/><stop offset="0.90" stop-color="#ffaec0"/><stop offset="1.00" stop-color="#ffa3b4"/></linearGradient><linearGradient id="i67"><stop offset="0.00" stop-color="#94ecff"/><stop offset="0.10" stop-color="#a9ecff"/><stop offset="0.20" stop-color="#beebff"/><stop offset="0.30" stop-color="#d3ebff"/><stop offset="0.40" stop-color="#e8eaff"/><stop offset="0.50" stop-color="#fdeaff"/><stop offset="0.60" stop-color="#ffd9ed"/><stop offset="0.70" stop-color="#ffc8dc"/><stop offset="0.80" stop-color="#ffbacd"/><stop offset="0.90" stop-color="#ffadc0"/><stop offset="1.00" stop-color="#ffa2b4"/></linearGradient><linearGradient id="i68"><stop offset="0.00" stop-color="#94ebff"/><stop offset="0.10" stop-color="#aaebff"/><stop offset="0.20" stop-color="#bfeaff"/><stop offset="0.30" stop-color="#d3eaff"/><stop offset="0.40" stop-color="#e8e9ff"/><stop offset="0.50" stop-color="#fde8ff"/><stop offset="0.60" stop-color="#ffd8ed"/><stop offset="0.70" stop-color="#ffc8dc"/><stop offset="0.80" stop-color="#ffb9cd"/><stop offset="0.90" stop-color="#ffadc0"/><stop offset="1.00" stop-color="#ffa1b4"/></linearGradient><linearGradient id="i69"><stop offset="0.00" stop-color="#94eaff"/><stop offset="0.10" stop-color="#aaeaff"/><stop offset="0.20" stop-color="#bfe9ff"/><stop offset="0.30" stop-color="#d3e9ff"/><stop offset="0.40" stop-color="#e8e8ff"/><stop offset="0.50" stop-color="#fde7ff"/><stop offset="0.60" stop-color="#ffd7ee"/><stop offset="0.70" stop-color="#ffc7dc"/><stop offset="0.80" stop-color="#ffb9cd"/><stop offset="0.90" stop-color="#ffacc0"/><stop offset="1.00" stop-color="#ffa1b4"/></linearGradient><linearGradient id="i70"><stop offset="0.00" stop-color="#94eaff"/><stop offset="0.10" stop-color="#aae9ff"/><stop offset="0.20" stop-color="#bfe8ff"/><stop offset="0.30" stop-color="#d3e8ff"/><stop offset="0.40" stop-color="#e8e7ff"/><stop offset="0.50" stop-color="#fde6ff"/><stop offset="0.60" stop-color="#ffd6ee"/><stop offset="0.70" stop-color="#ffc6dd"/><stop offset="0.80" stop-color="#ffb8ce"/><stop offset="0.90" stop-color="#ffabc0"/><stop offset="1.00" stop-color="#ffa0b4"/></linearGradient><linearGradient id="i71"><stop offset="0.00" stop-color="#95e9ff"/><stop offset="0.10" stop-color="#aae8ff"/><stop offset="0.20" stop-color="#bfe7ff"/><stop offset="0.30" stop-color="#d3e7ff"/><stop offset="0.40" stop-color="#e8e6ff"/><stop offset="0.50" stop-color="#fde5ff"/><stop offset="0.60" stop-color="#ffd5ee"/><stop offset="0.70" stop-color="#ffc5dd"/><stop offset="0.80" stop-color="#ffb7ce"/><stop offset="0.90" stop-color="#ffabc0"/><stop offset="1.00" stop-color="#ff9fb5"/></linearGradient><linearGradient id="i72"><stop offset="0.00" stop-color="#95e8ff"/><stop offset="0.10" stop-color="#aae7ff"/><stop offset="0.20" stop-color="#bfe6ff"/><stop offset="0.30" stop-color="#d4e6ff"/><stop offset="0.40" stop-color="#e8e5ff"/><stop offset="0.50" stop-color="#fde4ff"/><stop offset="0.60" stop-color="#ffd4ee"/><stop offset="0.70" stop-color="#ffc4dd"/><stop offset="0.80" stop-color="#ffb6ce"/><stop offset="0.90" stop-color="#ffaac1"/><stop offset="1.00" stop-color="#ff9fb5"/></linearGradient><linearGradient id="i73"><stop offset="0.00" stop-color="#95e7ff"/><stop offset="0.10" stop-color="#aae6ff"/><stop offset="0.20" stop-color="#bfe6ff"/><stop offset="0.30" stop-color="#d4e5ff"/><stop offset="0.40" stop-color="#e8e4ff"/><stop offset="0.50" stop-color="#fde3ff"/><stop offset="0.60" stop-color="#ffd3ee"/><stop offset="0.70" stop-color="#ffc4dd"/><stop offset="0.80" stop-color="#ffb6ce"/><stop offset="0.90" stop-color="#ffa9c1"/><stop offset="1.00" stop-color="#ff9eb5"/></linearGradient><linearGradient id="i74"><stop offset="0.00" stop-color="#95e6ff"/><stop offset="0.10" stop-color="#aae5ff"/><stop offset="0.20" stop-color="#bfe5ff"/><stop offset="0.30" stop-color="#d4e4ff"/><stop offset="0.40" stop-color="#e8e3ff"/><stop offset="0.50" stop-color="#fde2ff"/><stop offset="0.60" stop-color="#ffd2ee"/><stop offset="0.70" stop-color="#ffc3dd"/><stop offset="0.80" stop-color="#ffb5ce"/><stop offset="0.90" stop-color="#ffa8c1"/><stop offset="1.00" stop-color="#ff9db5"/></linearGradient><linearGradient id="i75"><stop offset="0.00" stop-color="#95e5ff"/><stop offset="0.10" stop-color="#abe4ff"/><stop offset="0.20" stop-color="#bfe4ff"/><stop offset="0.30" stop-color="#d4e3ff"/><stop offset="0.40" stop-color="#e8e2ff"/><stop offset="0.50" stop-color="#fce1ff"/><stop offset="0.60" stop-color="#ffd2ee"/><stop offset="0.70" stop-color="#ffc2dd"/><stop offset="0.80" stop-color="#ffb4ce"/><stop offset="0.90" stop-color="#ffa8c1"/><stop offset="1.00" stop-color="#ff9db5"/></linearGradient><linearGradient id="i76"><stop offset="0.00" stop-color="#96e4ff"/><stop offset="0.10" stop-color="#abe3ff"/><stop offset="0.20" stop-color="#bfe3ff"/><stop offset="0.30" stop-color="#d4e2ff"/><stop offset="0.40" stop-color="#e8e1ff"/><stop offset="0.50" stop-color="#fce0ff"/><stop offset="0.60" stop-color="#ffd1ee"/><stop offset="0.70" stop-color="#ffc1dd"/><stop offset="0.80" stop-color="#ffb3cf"/><stop offset="0.90" stop-color="#ffa7c1"/><stop offset="1.00" stop-color="#ff9cb5"/></linearGradient><linearGradient id="i77"><stop offset="0.00" stop-color="#96e3ff"/><stop offset="0.10" stop-color="#abe2ff"/><stop offset="0.20" stop-color="#bfe2ff"/><stop offset="0.30" stop-color="#d4e1ff"/><stop offset="0.40" stop-color="#e8e0ff"/><stop offset="0.50" stop-color="#fcdfff"/><stop offset="0.60" stop-color="#ffd0ee"/><stop offset="0.70" stop-color="#ffc0de"/><stop offset="0.80" stop-color="#ffb2cf"/><stop offset="0.90" stop-color="#ffa6c1"/><stop offset="1.00" stop-color="#ff9bb6"/></linearGradient><linearGradient id="i78"><stop offset="0.00" stop-color="#96e2ff"/><stop offset="0.10" stop-color="#abe2ff"/><stop offset="0.20" stop-color="#bfe1ff"/><stop offset="0.30" stop-color="#d4e0ff"/><stop offset="0.40" stop-color="#e8dfff"/><stop offset="0.50" stop-color="#fcdeff"/><stop offset="0.60" stop-color="#ffcfee"/><stop offset="0.70" stop-color="#ffbfde"/><stop offset="0.80" stop-color="#ffb2cf"/><stop offset="0.90" stop-color="#ffa6c2"/><stop offset="1.00" stop-color="#ff9bb6"/></linearGradient><linearGradient id="i79"><stop offset="0.00" stop-color="#96e1ff"/><stop offset="0.10" stop-color="#abe1ff"/><stop offset="0.20" stop-color="#c0e0ff"/><stop offset="0.30" stop-color="#d4dfff"/><stop offset="0.40" stop-color="#e8deff"/><stop offset="0.50" stop-color="#fcddff"/><stop offset="0.60" stop-color="#ffceef"/><stop offset="0.70" stop-color="#ffbfde"/><stop offset="0.80" stop-color="#ffb1cf"/><stop offset="0.90" stop-color="#ffa5c2"/><stop offset="1.00" stop-color="#ff9ab6"/></linearGradient><linearGradient id="i80"><stop offset="0.00" stop-color="#96e0ff"/><stop offset="0.10" stop-color="#abe0ff"/><stop offset="0.20" stop-color="#c0dfff"/><stop offset="0.30" stop-color="#d4deff"/><stop offset="0.40" stop-color="#e8ddff"/><stop offset="0.50" stop-color="#fcdcff"/><stop offset="0.60" stop-color="#ffcdef"/><stop offset="0.70" stop-color="#ffbede"/><stop offset="0.80" stop-color="#ffb0cf"/><stop offset="0.90" stop-color="#ffa4c2"/><stop offset="1.00" stop-color="#ff99b6"/></linearGradient><linearGradient id="i81"><stop offset="0.00" stop-color="#97e0ff"/><stop offset="0.10" stop-color="#abdfff"/><stop offset="0.20" stop-color="#c0deff"/><stop offset="0.30" stop-color="#d4ddff"/><stop offset="0.40" stop-color="#e8dcff"/><stop offset="0.50" stop-color="#fcdbff"/><stop offset="0.60" stop-color="#ffccef"/><stop offset="0.70" stop-color="#ffbdde"/><stop offset="0.80" stop-color="#ffafcf"/><stop offset="0.90" stop-color="#ffa3c2"/><stop offset="1.00" stop-color="#ff98b6"/></linearGradient><linearGradient id="i82"><stop offset="0.00" stop-color="#97dfff"/><stop offset="0.10" stop-color="#abdeff"/><stop offset="0.20" stop-color="#c0ddff"/><stop offset="0.30" stop-color="#d4dcff"/><stop offset="0.40" stop-color="#e8dbff"/><stop offset="0.50" stop-color="#fcdaff"/><stop offset="0.60" stop-color="#ffcbef"/><stop offset="0.70" stop-color="#ffbcde"/><stop offset="0.80" stop-color="#ffafcf"/><stop offset="0.90" stop-color="#ffa3c2"/><stop offset="1.00" stop-color="#ff98b6"/></linearGradient><linearGradient id="i83"><stop offset="0.00" stop-color="#97deff"/><stop offset="0.10" stop-color="#acddff"/><stop offset="0.20" stop-color="#c0dcff"/><stop offset="0.30" stop-color="#d4dbff"/><stop offset="0.40" stop-color="#e8daff"/><stop offset="0.50" stop-color="#fcd9ff"/><stop offset="0.60" stop-color="#ffcaef"/><stop offset="0.70" stop-color="#ffbbde"/><stop offset="0.80" stop-color="#ffaed0"/><stop offset="0.90" stop-color="#ffa2c2"/><stop offset="1.00" stop-color="#ff97b7"/></linearGradient><linearGradient id="i84"><stop offset="0.00" stop-color="#97ddff"/><stop offset="0.10" stop-color="#acdcff"/><stop offset="0.20" stop-color="#c0dbff"/><stop offset="0.30" stop-color="#d4daff"/><stop offset="0.40" stop-color="#e8d9ff"/><stop offset="0.50" stop-color="#fcd8ff"/><stop offset="0.60" stop-color="#ffcaef"/><stop offset="0.70" stop-color="#ffbbde"/><stop offset="0.80" stop-color="#ffadd0"/><stop offset="0.90" stop-color="#ffa1c3"/><stop offset="1.00" stop-color="#ff96b7"/></linearGradient><linearGradient id="i85"><stop offset="0.00" stop-color="#97dcff"/><stop offset="0.10" stop-color="#acdbff"/><stop offset="0.20" stop-color="#c0daff"/><stop offset="0.30" stop-color="#d4d9ff"/><stop offset="0.40" stop-color="#e8d8ff"/><stop offset="0.50" stop-color="#fcd7ff"/><stop offset="0.60" stop-color="#ffc9ef"/><stop offset="0.70" stop-color="#ffbadf"/><stop offset="0.80" stop-color="#ffacd0"/><stop offset="0.90" stop-color="#ffa0c3"/><stop offset="1.00" stop-color="#ff96b7"/></linearGradient><linearGradient id="i86"><stop offset="0.00" stop-color="#97dbff"/><stop offset="0.10" stop-color="#acdaff"/><stop offset="0.20" stop-color="#c0d9ff"/><stop offset="0.30" stop-color="#d4d8ff"/><stop offset="0.40" stop-color="#e8d7ff"/><stop offset="0.50" stop-color="#fcd6ff"/><stop offset="0.60" stop-color="#ffc8ef"/><stop offset="0.70" stop-color="#ffb9df"/><stop offset="0.80" stop-color="#ffacd0"/><stop offset="0.90" stop-color="#ffa0c3"/><stop offset="1.00" stop-color="#ff95b7"/></linearGradient><linearGradient id="i87"><stop offset="0.00" stop-color="#98daff"/><stop offset="0.10" stop-color="#acd9ff"/><stop offset="0.20" stop-color="#c0d8ff"/><stop offset="0.30" stop-color="#d4d7ff"/><stop offset="0.40" stop-color="#e8d6ff"/><stop offset="0.50" stop-color="#fcd5ff"/><stop offset="0.60" stop-color="#ffc7ef"/><stop offset="0.70" stop-color="#ffb8df"/><stop offset="0.80" stop-color="#ffabd0"/><stop offset="0.90" stop-color="#ff9fc3"/><stop offset="1.00" stop-color="#ff94b7"/></linearGradient><linearGradient id="i88"><stop offset="0.00" stop-color="#98d9ff"/><stop offset="0.10" stop-color="#acd8ff"/><stop offset="0.20" stop-color="#c0d7ff"/><stop offset="0.30" stop-color="#d4d6ff"/><stop offset="0.40" stop-color="#e8d5ff"/><stop offset="0.50" stop-color="#fcd4ff"/><stop offset="0.60" stop-color="#ffc6ef"/><stop offset="0.70" stop-color="#ffb7df"/><stop offset="0.80" stop-color="#ffaad0"/><stop offset="0.90" stop-color="#ff9ec3"/><stop offset="1.00" stop-color="#ff94b7"/></linearGradient><linearGradient id="i89"><stop offset="0.00" stop-color="#98d9ff"/><stop offset="0.10" stop-color="#acd8ff"/><stop offset="0.20" stop-color="#c0d7ff"/><stop offset="0.30" stop-color="#d4d5ff"/><stop offset="0.40" stop-color="#e8d4ff"/><stop offset="0.50" stop-color="#fcd3ff"/><stop offset="0.60" stop-color="#ffc5f0"/><stop offset="0.70" stop-color="#ffb6df"/><stop offset="0.80" stop-color="#ffa9d0"/><stop offset="0.90" stop-color="#ff9ec3"/><stop offset="1.00" stop-color="#ff93b8"/></linearGradient><linearGradient id="i90"><stop offset="0.00" stop-color="#98d8ff"/><stop offset="0.10" stop-color="#acd7ff"/><stop offset="0.20" stop-color="#c0d6ff"/><stop offset="0.30" stop-color="#d4d5ff"/><stop offset="0.40" stop-color="#e8d3ff"/><stop offset="0.50" stop-color="#fbd2ff"/><stop offset="0.60" stop-color="#ffc4f0"/><stop offset="0.70" stop-color="#ffb6df"/><stop offset="0.80" stop-color="#ffa9d1"/><stop offset="0.90" stop-color="#ff9dc4"/><stop offset="1.00" stop-color="#ff92b8"/></linearGradient><linearGradient id="i91"><stop offset="0.00" stop-color="#98d7ff"/><stop offset="0.10" stop-color="#add6ff"/><stop offset="0.20" stop-color="#c0d5ff"/><stop offset="0.30" stop-color="#d4d4ff"/><stop offset="0.40" stop-color="#e8d2ff"/><stop offset="0.50" stop-color="#fbd1ff"/><stop offset="0.60" stop-color="#ffc3f0"/><stop offset="0.70" stop-color="#ffb5df"/><stop offset="0.80" stop-color="#ffa8d1"/><stop offset="0.90" stop-color="#ff9cc4"/><stop offset="1.00" stop-color="#ff92b8"/></linearGradient><linearGradient id="i92"><stop offset="0.00" stop-color="#99d6ff"/><stop offset="0.10" stop-color="#add5ff"/><stop offset="0.20" stop-color="#c1d4ff"/><stop offset="0.30" stop-color="#d4d3ff"/><stop offset="0.40" stop-color="#e8d1ff"/><stop offset="0.50" stop-color="#fbd0ff"/><stop offset="0.60" stop-color="#ffc3f0"/><stop offset="0.70" stop-color="#ffb4df"/><stop offset="0.80" stop-color="#ffa7d1"/><stop offset="0.90" stop-color="#ff9bc4"/><stop offset="1.00" stop-color="#ff91b8"/></linearGradient><linearGradient id="i93"><stop offset="0.00" stop-color="#99d5ff"/><stop offset="0.10" stop-color="#add4ff"/><stop offset="0.20" stop-color="#c1d3ff"/><stop offset="0.30" stop-color="#d4d2ff"/><stop offset="0.40" stop-color="#e8d1ff"/><stop offset="0.50" stop-color="#fbcfff"/><stop offset="0.60" stop-color="#ffc2f0"/><stop offset="0.70" stop-color="#ffb3e0"/><stop offset="0.80" stop-color="#ffa6d1"/><stop offset="0.90" stop-color="#ff9bc4"/><stop offset="1.00" stop-color="#ff90b8"/></linearGradient><linearGradient id="i94"><stop offset="0.00" stop-color="#99d4ff"/><stop offset="0.10" stop-color="#add3ff"/><stop offset="0.20" stop-color="#c1d2ff"/><stop offset="0.30" stop-color="#d4d1ff"/><stop offset="0.40" stop-color="#e8d0ff"/><stop offset="0.50" stop-color="#fbceff"/><stop offset="0.60" stop-color="#ffc1f0"/><stop offset="0.70" stop-color="#ffb2e0"/><stop offset="0.80" stop-color="#ffa6d1"/><stop offset="0.90" stop-color="#ff9ac4"/><stop offset="1.00" stop-color="#ff90b8"/></linearGradient><linearGradient id="a0" gradientUnits="userSpaceOnUse" x1="770" y1="0" x2="790" y2="0"><stop offset="0.000" stop-color="#009900"/><stop offset="1.000" stop-color="#009900"/></linearGradient><linearGradient id="a1" gradientUnits="userSpaceOnUse" x1="763" y1="0" x2="799" y2="0"><stop offset="0.000" stop-color="#009900"/><stop offset="1.000" stop-color="#009900"/></linearGradient><linearGradient id="a2" gradientUnits="userSpaceOnUse" x1="759" y1="0" x2="806" y2="0"><stop offset="0.000" stop-color="#009900"/><stop offset="1.000" stop-color="#009900"/></linearGradient><linearGradient id="a3" gradientUnits="userSpaceOnUse" x1="756" y1="0" x2="812" y2="0"><stop offset="0.000" stop-color="#009900"/><stop offset="1.000" stop-color="#009900"/></linearGradient><linearGradient id="a4" gradientUnits="userSpaceOnUse" x1="754" y1="0" x2="817" y2="0"><stop offset="0.000" stop-color="#009900"/><stop offset="1.000" stop-color="#009900"/></linearGradient><linearGradient id="a5" gradientUnits="userSpaceOnUse" x1="752" y1="0" x2="822" y2="0"><stop offset="0.000" stop-color="#009901"/><stop offset="1.000" stop-color="#009900"/></linearGradient><linearGradient id="a6" gradientUnits="userSpaceOnUse" x1="750" y1="0" x2="827" y2="0"><stop offset="0.000" stop-color="#009902"/><stop offset="1.000" stop-color="#009900"/></linearGradient><linearGradient id="a7" gradientUnits="userSpaceOnUse" x1="749" y1="0" x2="831" y2="0"><stop offset="0.000" stop-color="#009903"/><stop offset="1.000" stop-color="#009900"/></linearGradient><linearGradient id="a8" gradientUnits="userSpaceOnUse" x1="748" y1="0" x2="836" y2="0"><stop offset="0.000" stop-color="#009904"/><stop offset="1.000" stop-color="#009900"/></linearGradient><linearGradient id="a9" gradientUnits="userSpaceOnUse" x1="746" y1="0" x2="840" y2="0"><stop offset="0.000" stop-color="#009905"/><stop offset="1.000" stop-color="#009900"/></linearGradient><linearGradient id="a10" gradientUnits="userSpaceOnUse" x1="745" y1="0" x2="844" y2="0"><stop offset="0.000" stop-color="#009906"/><stop offset="1.000" stop-color="#009900"/></linearGradient><linearGradient id="a11" gradientUnits="userSpaceOnUse" x1="744" y1="0" x2="848" y2="0"><stop offset="0.000" stop-color="#009907"/><stop offset="1.000" stop-color="#009900"/></linearGradient><linearGradient id="a12" gradientUnits="userSpaceOnUse" x1="743" y1="0" x2="852" y2="0"><stop offset="0.000" stop-color="#009908"/><stop offset="1.000" stop-color="#009900"/></linearGradient><linearGradient id="a13" gradientUnits="userSpaceOnUse" x1="743" y1="0" x2="856" y2="0"><stop offset="0.000" stop-color="#009908"/><stop offset="1.000" stop-color="#009900"/></linearGradient><linearGradient id="a14" gradientUnits="userSpaceOnUse" x1="742" y1="0" x2="860" y2="0"><stop offset="0.000" stop-color="#009909"/><stop offset="1.000" stop-color="#009900"/></linearGradient><linearGradient id="a15" gradientUnits="userSpaceOnUse" x1="741" y1="0" x2="863" y2="0"><stop offset="0.000" stop-color="#00990a"/><stop offset="1.000" stop-color="#009900"/></linearGradient><linearGradient id="a16" gradientUnits="userSpaceOnUse" x1="740" y1="0" x2="867" y2="0"><stop offset="0.000" stop-color="#00990b"/><stop offset="1.000" stop-color="#009900"/></linearGradient><linearGradient id="a17" gradientUnits="userSpaceOnUse" x1="740" y1="0" x2="870" y2="0"><stop offset="0.000" stop-color="#00990c"/><stop offset="1.000" stop-color="#009900"/></linearGradient><linearGradient id="a18" gradientUnits="userSpaceOnUse" x1="739" y1="0" x2="874" y2="0"><stop offset="0.000" stop-color="#00990d"/><stop offset="1.000" stop-color="#009900"/></linearGradient><linearGradient id="a19" gradientUnits="userSpaceOnUse" x1="739" y1="0" x2="877" y2="0"><stop offset="0.000" stop-color="#00990e"/><stop offset="1.000" stop-color="#009900"/></linearGradient><linearGradient id="a20" gradientUnits="userSpaceOnUse" x1="738" y1="0" x2="880" y2="0"><stop offset="0.000" stop-color="#00990f"/><stop offset="1.000" stop-color="#009900"/></linearGradient><linearGradient id="a21" gradientUnits="userSpaceOnUse" x1="738" y1="0" x2="884" y2="0"><stop offset="0.000" stop-color="#009910"/><stop offset="1.000" stop-color="#009900"/></linearGradient><linearGradient id="a22" gradientUnits="userSpaceOnUse" x1="738" y1="0" x2="887" y2="0"><stop offset="0.000" stop-color="#009911"/><stop offset="0.987" stop-color="#009900"/><stop offset="1.000" stop-color="#009900"/></linearGradient><linearGradient id="a23" gradientUnits="userSpaceOnUse" x1="737" y1="0" x2="890" y2="0"><stop offset="0.000" stop-color="#009912"/><stop offset="0.967" stop-color="#009900"/><stop offset="1.000" stop-color="#009900"/></linearGradient><linearGradient id="a24" gradientUnits="userSpaceOnUse" x1="737" y1="0" x2="893" y2="0"><stop offset="0.000" stop-color="#009912"/><stop offset="0.955" stop-color="#009900"/><stop offset="1.000" stop-color="#009900"/></linearGradient><linearGradient id="a25" gradientUnits="userSpaceOnUse" x1="737" y1="0" x2="896" y2="0"><stop offset="0.000" stop-color="#009913"/><stop offset="0.943" stop-color="#009900"/><stop offset="1.000" stop-color="#009900"/></linearGradient><linearGradient id="a26" gradientUnits="userSpaceOnUse" x1="736" y1="0" x2="900" y2="0"><stop offset="0.000" stop-color="#009914"/><stop offset="0.933" stop-color="#009900"/><stop offset="1.000" stop-color="#009900"/></linearGradient><linearGradient id="a27" gradientUnits="userSpaceOnUse" x1="736" y1="0" x2="903" y2="0"><stop offset="0.000" stop-color="#009915"/><stop offset="0.922" stop-color="#009900"/><stop offset="1.000" stop-color="#009900"/></linearGradient><linearGradient id="a28" gradientUnits="userSpaceOnUse" x1="736" y1="0" x2="906" y2="0"><stop offset="0.000" stop-color="#009916"/><stop offset="0.918" stop-color="#009900"/><stop offset="1.000" stop-color="#009900"/></linearGradient><linearGradient id="a29" gradientUnits="userSpaceOnUse" x1="736" y1="0" x2="909" y2="0"><stop offset="0.000" stop-color="#009917"/><stop offset="0.913" stop-color="#009900"/><stop offset="1.000" stop-color="#009900"/></linearGradient><linearGradient id="a30" gradientUnits="userSpaceOnUse" x1="736" y1="0" x2="912" y2="0"><stop offset="0.000" stop-color="#009918"/><stop offset="0.909" stop-color="#009900"/><stop offset="1.000" stop-color="#039900"/></linearGradient><linearGradient id="a31" gradientUnits="userSpaceOnUse" x1="736" y1="0" x2="915" y2="0"><stop offset="0.000" stop-color="#009919"/><stop offset="0.911" stop-color="#009900"/><stop offset="1.000" stop-color="#079900"/></linearGradient><linearGradient id="a32" gradientUnits="userSpaceOnUse" x1="735" y1="0" x2="918" y2="0"><stop offset="0.000" stop-color="#00991a"/><stop offset="0.907" stop-color="#009900"/><stop offset="1.000" stop-color="#0b9900"/></linearGradient><linearGradient id="a33" gradientUnits="userSpaceOnUse" x1="735" y1="0" x2="921" y2="0"><stop offset="0.000" stop-color="#00991b"/><stop offset="0.909" stop-color="#009900"/><stop offset="1.000" stop-color="#109900"/></linearGradient><linearGradient id="a34" gradientUnits="userSpaceOnUse" x1="735" y1="0" x2="924" y2="0"><stop offset="0.000" stop-color="#00991c"/><stop offset="0.905" stop-color="#009900"/><stop offset="1.000" stop-color="#159900"/></linearGradient><linearGradient id="a35" gradientUnits="userSpaceOnUse" x1="735" y1="0" x2="927" y2="0"><stop offset="0.000" stop-color="#00991d"/><stop offset="0.906" stop-color="#049900"/><stop offset="1.000" stop-color="#1a9900"/></linearGradient><linearGradient id="a36" gradientUnits="userSpaceOnUse" x1="735" y1="0" x2="930" y2="0"><stop offset="0.000" stop-color="#00991f"/><stop offset="0.903" stop-color="#079900"/><stop offset="1.000" stop-color="#1f9900"/></linearGradient><linearGradient id="a37" gradientUnits="userSpaceOnUse" x1="735" y1="0" x2="933" y2="0"><stop offset="0.000" stop-color="#009920"/><stop offset="0.884" stop-color="#079900"/><stop offset="1.000" stop-color="#249900"/></linearGradient><linearGradient id="a38" gradientUnits="userSpaceOnUse" x1="735" y1="0" x2="936" y2="0"><stop offset="0.000" stop-color="#009921"/><stop offset="0.871" stop-color="#089900"/><stop offset="1.000" stop-color="#299900"/></linearGradient><linearGradient id="a39" gradientUnits="userSpaceOnUse" x1="735" y1="0" x2="939" y2="0"><stop offset="0.000" stop-color="#009922"/><stop offset="0.853" stop-color="#089900"/><stop offset="1.000" stop-color="#2f9900"/></linearGradient><linearGradient id="a40" gradientUnits="userSpaceOnUse" x1="735" y1="0" x2="942" y2="0"><stop offset="0.000" stop-color="#009923"/><stop offset="0.836" stop-color="#089900"/><stop offset="1.000" stop-color="#359900"/></linearGradient><linearGradient id="a41" gradientUnits="userSpaceOnUse" x1="735" y1="0" x2="945" y2="0"><stop offset="0.000" stop-color="#009924"/><stop offset="0.819" stop-color="#079900"/><stop offset="1.000" stop-color="#3b9900"/></linearGradient><linearGradient id="a42" gradientUnits="userSpaceOnUse" x1="735" y1="0" x2="947" y2="0"><stop offset="0.000" stop-color="#009925"/><stop offset="0.807" stop-color="#079900"/><stop offset="1.000" stop-color="#409900"/></linearGradient><linearGradient id="a43" gradientUnits="userSpaceOnUse" x1="735" y1="0" x2="950" y2="0"><stop offset="0.000" stop-color="#009926"/><stop offset="0.791" stop-color="#079900"/><stop offset="1.000" stop-color="#469900"/></linearGradient><linearGradient id="a44" gradientUnits="userSpaceOnUse" x1="735" y1="0" x2="953" y2="0"><stop offset="0.000" stop-color="#009928"/><stop offset="0.775" stop-color="#079900"/><stop offset="1.000" stop-color="#4d9900"/></linearGradient><linearGradient id="a45" gradientUnits="userSpaceOnUse" x1="736" y1="0" x2="956" y2="0"><stop offset="0.000" stop-color="#009929"/><stop offset="0.764" stop-color="#089900"/><stop offset="1.000" stop-color="#549900"/></linearGradient><linearGradient id="a46" gradientUnits="userSpaceOnUse" x1="736" y1="0" x2="959" y2="0"><stop offset="0.000" stop-color="#00992a"/><stop offset="0.749" stop-color="#089900"/><stop offset="1.000" stop-color="#5c9900"/></linearGradient><linearGradient id="a47" gradientUnits="userSpaceOnUse" x1="736" y1="0" x2="962" y2="0"><stop offset="0.000" stop-color="#00992b"/><stop offset="0.735" stop-color="#079902"/><stop offset="1.000" stop-color="#649900"/></linearGradient><linearGradient id="a48" gradientUnits="userSpaceOnUse" x1="736" y1="0" x2="965" y2="0"><stop offset="0.000" stop-color="#00992c"/><stop offset="0.721" stop-color="#079903"/><stop offset="1.000" stop-color="#6c9900"/></linearGradient><linearGradient id="a49" gradientUnits="userSpaceOnUse" x1="736" y1="0" x2="968" y2="0"><stop offset="0.000" stop-color="#00992e"/><stop offset="0.707" stop-color="#079905"/><stop offset="1.000" stop-color="#749900"/></linearGradient><linearGradient id="a50" gradientUnits="userSpaceOnUse" x1="736" y1="0" x2="971" y2="0"><stop offset="0.000" stop-color="#00992f"/><stop offset="0.694" stop-color="#079907"/><stop offset="1.000" stop-color="#7d9900"/></linearGradient><linearGradient id="a51" gradientUnits="userSpaceOnUse" x1="736" y1="0" x2="973" y2="0"><stop offset="0.000" stop-color="#009930"/><stop offset="0.684" stop-color="#079908"/><stop offset="1.000" stop-color="#849900"/></linearGradient><linearGradient id="a52" gradientUnits="userSpaceOnUse" x1="737" y1="0" x2="976" y2="0"><stop offset="0.000" stop-color="#009932"/><stop offset="0.674" stop-color="#08990a"/><stop offset="1.000" stop-color="#8e9900"/></linearGradient><linearGradient id="a53" gradientUnits="userSpaceOnUse" x1="737" y1="0" x2="979" y2="0"><stop offset="0.000" stop-color="#009933"/><stop offset="0.661" stop-color="#08990c"/><stop offset="0.992" stop-color="#949900"/><stop offset="1.000" stop-color="#989900"/></linearGradient><linearGradient id="a54" gradientUnits="userSpaceOnUse" x1="737" y1="0" x2="982" y2="0"><stop offset="0.000" stop-color="#009935"/><stop offset="0.649" stop-color="#07990d"/><stop offset="0.971" stop-color="#939900"/><stop offset="1.000" stop-color="#999000"/></linearGradient><linearGradient id="a55" gradientUnits="userSpaceOnUse" x1="737" y1="0" x2="985" y2="0"><stop offset="0.000" stop-color="#009936"/><stop offset="0.637" stop-color="#07990f"/><stop offset="0.952" stop-color="#929900"/><stop offset="1.000" stop-color="#998700"/></linearGradient><linearGradient id="a56" gradientUnits="userSpaceOnUse" x1="737" y1="0" x2="988" y2="0"><stop offset="0.000" stop-color="#009937"/><stop offset="0.625" stop-color="#079911"/><stop offset="0.932" stop-color="#929900"/><stop offset="1.000" stop-color="#997e00"/></linearGradient><linearGradient id="a57" gradientUnits="userSpaceOnUse" x1="738" y1="0" x2="991" y2="0"><stop offset="0.000" stop-color="#009939"/><stop offset="0.613" stop-color="#079913"/><stop offset="0.913" stop-color="#919900"/><stop offset="1.000" stop-color="#997600"/></linearGradient><linearGradient id="a58" gradientUnits="userSpaceOnUse" x1="738" y1="0" x2="994" y2="0"><stop offset="0.000" stop-color="#00993a"/><stop offset="0.605" stop-color="#089915"/><stop offset="0.898" stop-color="#929900"/><stop offset="1.000" stop-color="#996f00"/></linearGradient><linearGradient id="a59" gradientUnits="userSpaceOnUse" x1="738" y1="0" x2="996" y2="0"><stop offset="0.000" stop-color="#00993c"/><stop offset="0.597" stop-color="#089917"/><stop offset="0.884" stop-color="#929900"/><stop offset="1.000" stop-color="#996900"/></linearGradient><linearGradient id="a60" gradientUnits="userSpaceOnUse" x1="738" y1="0" x2="999" y2="0"><stop offset="0.000" stop-color="#00993e"/><stop offset="0.586" stop-color="#079919"/><stop offset="0.870" stop-color="#939900"/><stop offset="1.000" stop-color="#996300"/></linearGradient><linearGradient id="a61" gradientUnits="userSpaceOnUse" x1="739" y1="0" x2="1002" y2="0"><stop offset="0.000" stop-color="#00993f"/><stop offset="0.574" stop-color="#07991b"/><stop offset="0.852" stop-color="#939900"/><stop offset="1.000" stop-color="#995d00"/></linearGradient><linearGradient id="a62" gradientUnits="userSpaceOnUse" x1="739" y1="0" x2="1005" y2="0"><stop offset="0.000" stop-color="#009941"/><stop offset="0.564" stop-color="#07991d"/><stop offset="0.835" stop-color="#929900"/><stop offset="1.000" stop-color="#995700"/></linearGradient><linearGradient id="a63" gradientUnits="userSpaceOnUse" x1="739" y1="0" x2="1008" y2="0"><stop offset="0.000" stop-color="#009942"/><stop offset="0.554" stop-color="#079920"/><stop offset="0.818" stop-color="#919903"/><stop offset="1.000" stop-color="#995200"/></linearGradient><linearGradient id="a64" gradientUnits="userSpaceOnUse" x1="740" y1="0" x2="1011" y2="0"><stop offset="0.000" stop-color="#009944"/><stop offset="0.542" stop-color="#069922"/><stop offset="0.801" stop-color="#909906"/><stop offset="0.915" stop-color="#996600"/><stop offset="1.000" stop-color="#994c00"/></linearGradient><linearGradient id="a65" gradientUnits="userSpaceOnUse" x1="740" y1="0" x2="1014" y2="0"><stop offset="0.000" stop-color="#009946"/><stop offset="0.536" stop-color="#089924"/><stop offset="0.788" stop-color="#929908"/><stop offset="0.982" stop-color="#994c00"/><stop offset="1.000" stop-color="#994800"/></linearGradient><linearGradient id="a66" gradientUnits="userSpaceOnUse" x1="740" y1="0" x2="1016" y2="0"><stop offset="0.000" stop-color="#009948"/><stop offset="0.529" stop-color="#089926"/><stop offset="0.779" stop-color="#94990b"/><stop offset="0.960" stop-color="#994e00"/><stop offset="1.000" stop-color="#994400"/></linearGradient><linearGradient id="a67" gradientUnits="userSpaceOnUse" x1="741" y1="0" x2="1019" y2="0"><stop offset="0.000" stop-color="#009949"/><stop offset="0.518" stop-color="#079929"/><stop offset="0.763" stop-color="#93990e"/><stop offset="0.946" stop-color="#994d00"/><stop offset="1.000" stop-color="#994000"/></linearGradient><linearGradient id="a68" gradientUnits="userSpaceOnUse" x1="741" y1="0" x2="1022" y2="0"><stop offset="0.000" stop-color="#00994b"/><stop offset="0.509" stop-color="#07992b"/><stop offset="0.747" stop-color="#929911"/><stop offset="0.929" stop-color="#994c00"/><stop offset="1.000" stop-color="#993c00"/></linearGradient><linearGradient id="a69" gradientUnits="userSpaceOnUse" x1="741" y1="0" x2="1025" y2="0"><stop offset="0.000" stop-color="#00994d"/><stop offset="0.500" stop-color="#07992e"/><stop offset="0.732" stop-color="#919914"/><stop offset="0.915" stop-color="#994b00"/><stop offset="1.000" stop-color="#993800"/></linearGradient><linearGradient id="a70" gradientUnits="userSpaceOnUse" x1="742" y1="0" x2="1028" y2="0"><stop offset="0.000" stop-color="#00994f"/><stop offset="0.490" stop-color="#079931"/><stop offset="0.717" stop-color="#909918"/><stop offset="0.843" stop-color="#995c02"/><stop offset="1.000" stop-color="#993400"/></linearGradient><linearGradient id="a71" gradientUnits="userSpaceOnUse" x1="742" y1="0" x2="1031" y2="0"><stop offset="0.000" stop-color="#009951"/><stop offset="0.481" stop-color="#069933"/><stop offset="0.706" stop-color="#92991b"/><stop offset="0.875" stop-color="#994c00"/><stop offset="1.000" stop-color="#993100"/></linearGradient><linearGradient id="a72" gradientUnits="userSpaceOnUse" x1="742" y1="0" x2="1033" y2="0"><stop offset="0.000" stop-color="#009953"/><stop offset="0.478" stop-color="#089936"/><stop offset="0.694" stop-color="#91991e"/><stop offset="0.863" stop-color="#994c01"/><stop offset="1.000" stop-color="#992e00"/></linearGradient><linearGradient id="a73" gradientUnits="userSpaceOnUse" x1="743" y1="0" x2="1036" y2="0"><stop offset="0.000" stop-color="#009955"/><stop offset="0.468" stop-color="#079939"/><stop offset="0.683" stop-color="#939921"/><stop offset="0.840" stop-color="#994e04"/><stop offset="1.000" stop-color="#992b00"/></linearGradient><linearGradient id="a74" gradientUnits="userSpaceOnUse" x1="743" y1="0" x2="1039" y2="0"><stop offset="0.000" stop-color="#009957"/><stop offset="0.459" stop-color="#07993b"/><stop offset="0.669" stop-color="#929925"/><stop offset="0.828" stop-color="#994c06"/><stop offset="1.000" stop-color="#992800"/></linearGradient><linearGradient id="a75" gradientUnits="userSpaceOnUse" x1="743" y1="0" x2="1042" y2="0"><stop offset="0.000" stop-color="#009959"/><stop offset="0.452" stop-color="#07993f"/><stop offset="0.656" stop-color="#929929"/><stop offset="0.813" stop-color="#994c08"/><stop offset="1.000" stop-color="#992500"/></linearGradient><linearGradient id="a76" gradientUnits="userSpaceOnUse" x1="744" y1="0" x2="1045" y2="0"><stop offset="0.000" stop-color="#00995b"/><stop offset="0.442" stop-color="#079942"/><stop offset="0.641" stop-color="#91992d"/><stop offset="0.754" stop-color="#995b11"/><stop offset="0.990" stop-color="#992300"/><stop offset="1.000" stop-color="#992200"/></linearGradient><linearGradient id="a77" gradientUnits="userSpaceOnUse" x1="744" y1="0" x2="1048" y2="0"><stop offset="0.000" stop-color="#00995e"/><stop offset="0.434" stop-color="#069945"/><stop offset="0.628" stop-color="#909931"/><stop offset="0.701" stop-color="#996e1c"/><stop offset="0.885" stop-color="#993100"/><stop offset="1.000" stop-color="#991f00"/></linearGradient><linearGradient id="a78" gradientUnits="userSpaceOnUse" x1="745" y1="0" x2="1051" y2="0"><stop offset="0.000" stop-color="#009960"/><stop offset="0.428" stop-color="#089948"/><stop offset="0.618" stop-color="#929935"/><stop offset="0.765" stop-color="#994c0f"/><stop offset="1.000" stop-color="#991d00"/></linearGradient><linearGradient id="a79" gradientUnits="userSpaceOnUse" x1="745" y1="0" x2="1054" y2="0"><stop offset="0.000" stop-color="#009963"/><stop offset="0.421" stop-color="#08994b"/><stop offset="0.608" stop-color="#949938"/><stop offset="0.744" stop-color="#994e12"/><stop offset="1.000" stop-color="#991a00"/></linearGradient><linearGradient id="a80" gradientUnits="userSpaceOnUse" x1="746" y1="0" x2="1056" y2="0"><stop offset="0.000" stop-color="#009965"/><stop offset="0.413" stop-color="#07994f"/><stop offset="0.597" stop-color="#93993d"/><stop offset="0.732" stop-color="#994d15"/><stop offset="0.994" stop-color="#991900"/><stop offset="1.000" stop-color="#991800"/></linearGradient><linearGradient id="a81" gradientUnits="userSpaceOnUse" x1="746" y1="0" x2="1059" y2="0"><stop offset="0.000" stop-color="#009967"/><stop offset="0.406" stop-color="#079952"/><stop offset="0.585" stop-color="#929941"/><stop offset="0.722" stop-color="#994c17"/><stop offset="0.984" stop-color="#991800"/><stop offset="1.000" stop-color="#991600"/></linearGradient><linearGradient id="a82" gradientUnits="userSpaceOnUse" x1="746" y1="0" x2="1062" y2="0"><stop offset="0.000" stop-color="#00996a"/><stop offset="0.399" stop-color="#079956"/><stop offset="0.573" stop-color="#919946"/><stop offset="0.709" stop-color="#994b19"/><stop offset="0.965" stop-color="#991800"/><stop offset="1.000" stop-color="#991400"/></linearGradient><linearGradient id="a83" gradientUnits="userSpaceOnUse" x1="747" y1="0" x2="1065" y2="0"><stop offset="0.000" stop-color="#00996d"/><stop offset="0.390" stop-color="#06995a"/><stop offset="0.560" stop-color="#90994b"/><stop offset="0.616" stop-color="#997233"/><stop offset="0.770" stop-color="#99350e"/><stop offset="1.000" stop-color="#991200"/></linearGradient><linearGradient id="a84" gradientUnits="userSpaceOnUse" x1="747" y1="0" x2="1068" y2="0"><stop offset="0.000" stop-color="#00996f"/><stop offset="0.383" stop-color="#06995d"/><stop offset="0.551" stop-color="#92994f"/><stop offset="0.679" stop-color="#994c1f"/><stop offset="0.922" stop-color="#991800"/><stop offset="1.000" stop-color="#991000"/></linearGradient><linearGradient id="a85" gradientUnits="userSpaceOnUse" x1="748" y1="0" x2="1071" y2="0"><stop offset="0.000" stop-color="#009972"/><stop offset="0.378" stop-color="#089961"/><stop offset="0.539" stop-color="#919954"/><stop offset="0.666" stop-color="#994b22"/><stop offset="0.904" stop-color="#991801"/><stop offset="1.000" stop-color="#990e00"/></linearGradient><linearGradient id="a86" gradientUnits="userSpaceOnUse" x1="748" y1="0" x2="1073" y2="0"><stop offset="0.000" stop-color="#009975"/><stop offset="0.372" stop-color="#089965"/><stop offset="0.532" stop-color="#939959"/><stop offset="0.649" stop-color="#994e26"/><stop offset="0.877" stop-color="#991903"/><stop offset="1.000" stop-color="#990c00"/></linearGradient><linearGradient id="a87" gradientUnits="userSpaceOnUse" x1="749" y1="0" x2="1076" y2="0"><stop offset="0.000" stop-color="#009978"/><stop offset="0.364" stop-color="#07996a"/><stop offset="0.520" stop-color="#92995f"/><stop offset="0.639" stop-color="#994c28"/><stop offset="0.869" stop-color="#991804"/><stop offset="1.000" stop-color="#990a00"/></linearGradient><linearGradient id="a88" gradientUnits="userSpaceOnUse" x1="749" y1="0" x2="1079" y2="0"><stop offset="0.000" stop-color="#00997b"/><stop offset="0.358" stop-color="#07996e"/><stop offset="0.509" stop-color="#919964"/><stop offset="0.627" stop-color="#994b2b"/><stop offset="0.852" stop-color="#991706"/><stop offset="1.000" stop-color="#990900"/></linearGradient><linearGradient id="a89" gradientUnits="userSpaceOnUse" x1="750" y1="0" x2="1082" y2="0"><stop offset="0.000" stop-color="#00997e"/><stop offset="0.349" stop-color="#069973"/><stop offset="0.497" stop-color="#90996a"/><stop offset="0.560" stop-color="#996844"/><stop offset="0.708" stop-color="#992d18"/><stop offset="1.000" stop-color="#990700"/></linearGradient><linearGradient id="a90" gradientUnits="userSpaceOnUse" x1="750" y1="0" x2="1085" y2="0"><stop offset="0.000" stop-color="#009982"/><stop offset="0.343" stop-color="#069977"/><stop offset="0.487" stop-color="#8f9970"/><stop offset="0.522" stop-color="#997c59"/><stop offset="0.636" stop-color="#993e28"/><stop offset="0.901" stop-color="#990d02"/><stop offset="1.000" stop-color="#990500"/></linearGradient><linearGradient id="a91" gradientUnits="userSpaceOnUse" x1="751" y1="0" x2="1088" y2="0"><stop offset="0.000" stop-color="#009985"/><stop offset="0.335" stop-color="#06997c"/><stop offset="0.478" stop-color="#919976"/><stop offset="0.588" stop-color="#994b36"/><stop offset="0.795" stop-color="#99180c"/><stop offset="1.000" stop-color="#990400"/></linearGradient><linearGradient id="a92" gradientUnits="userSpaceOnUse" x1="751" y1="0" x2="1091" y2="0"><stop offset="0.000" stop-color="#009988"/><stop offset="0.332" stop-color="#089981"/><stop offset="0.468" stop-color="#90997c"/><stop offset="0.535" stop-color="#99624d"/><stop offset="0.685" stop-color="#99281c"/><stop offset="1.000" stop-color="#990200"/></linearGradient><linearGradient id="a93" gradientUnits="userSpaceOnUse" x1="752" y1="0" x2="1094" y2="0"><stop offset="0.000" stop-color="#00998c"/><stop offset="0.325" stop-color="#079986"/><stop offset="0.459" stop-color="#939982"/><stop offset="0.558" stop-color="#994d3f"/><stop offset="0.751" stop-color="#991911"/><stop offset="1.000" stop-color="#990100"/></linearGradient><linearGradient id="a94" gradientUnits="userSpaceOnUse" x1="752" y1="0" x2="1096" y2="0"><stop offset="0.000" stop-color="#009990"/><stop offset="0.320" stop-color="#07998c"/><stop offset="0.451" stop-color="#929989"/><stop offset="0.552" stop-color="#994b42"/><stop offset="0.744" stop-color="#991813"/><stop offset="1.000" stop-color="#990000"/></linearGradient><linearGradient id="a95" gradientUnits="userSpaceOnUse" x1="753" y1="0" x2="1099" y2="0"><stop offset="0.000" stop-color="#009993"/><stop offset="0.312" stop-color="#079992"/><stop offset="0.439" stop-color="#909990"/><stop offset="0.512" stop-color="#995b55"/><stop offset="0.662" stop-color="#992320"/><stop offset="1.000" stop-color="#990000"/></linearGradient><linearGradient id="a96" gradientUnits="userSpaceOnUse" x1="754" y1="0" x2="1102" y2="0"><stop offset="0.000" stop-color="#009997"/><stop offset="0.305" stop-color="#069997"/><stop offset="0.428" stop-color="#8f9997"/><stop offset="0.466" stop-color="#997675"/><stop offset="0.572" stop-color="#993838"/><stop offset="0.825" stop-color="#990909"/><stop offset="1.000" stop-color="#990000"/></linearGradient><linearGradient id="a97" gradientUnits="userSpaceOnUse" x1="754" y1="0" x2="1105" y2="0"><stop offset="0.000" stop-color="#009699"/><stop offset="0.299" stop-color="#069599"/><stop offset="0.425" stop-color="#909399"/><stop offset="0.496" stop-color="#99575b"/><stop offset="0.644" stop-color="#992123"/><stop offset="0.980" stop-color="#990000"/><stop offset="1.000" stop-color="#990000"/></linearGradient><linearGradient id="a98" gradientUnits="userSpaceOnUse" x1="755" y1="0" x2="1108" y2="0"><stop offset="0.000" stop-color="#009299"/><stop offset="0.295" stop-color="#078f99"/><stop offset="0.422" stop-color="#948c99"/><stop offset="0.513" stop-color="#99464f"/><stop offset="0.691" stop-color="#99151a"/><stop offset="1.000" stop-color="#990000"/></linearGradient><linearGradient id="a99" gradientUnits="userSpaceOnUse" x1="755" y1="0" x2="1111" y2="0"><stop offset="0.000" stop-color="#008f99"/><stop offset="0.289" stop-color="#078999"/><stop offset="0.419" stop-color="#938599"/><stop offset="0.511" stop-color="#99424e"/><stop offset="0.691" stop-color="#99131a"/><stop offset="1.000" stop-color="#990000"/></linearGradient><linearGradient id="a100" gradientUnits="userSpaceOnUse" x1="756" y1="0" x2="1113" y2="0"><stop offset="0.000" stop-color="#008b99"/><stop offset="0.283" stop-color="#068499"/><stop offset="0.412" stop-color="#8f7f99"/><stop offset="0.451" stop-color="#996076"/><stop offset="0.563" stop-color="#992a38"/><stop offset="0.829" stop-color="#990209"/><stop offset="1.000" stop-color="#990000"/></linearGradient><linearGradient id="a101" gradientUnits="userSpaceOnUse" x1="756" y1="0" x2="1116" y2="0"><stop offset="0.000" stop-color="#008799"/><stop offset="0.281" stop-color="#087f99"/><stop offset="0.411" stop-color="#937899"/><stop offset="0.508" stop-color="#99394d"/><stop offset="0.697" stop-color="#990d19"/><stop offset="1.000" stop-color="#990000"/></linearGradient><linearGradient id="a102" gradientUnits="userSpaceOnUse" x1="757" y1="0" x2="1119" y2="0"><stop offset="0.000" stop-color="#008399"/><stop offset="0.273" stop-color="#077a99"/><stop offset="0.406" stop-color="#927299"/><stop offset="0.506" stop-color="#99354d"/><stop offset="0.696" stop-color="#990b19"/><stop offset="1.000" stop-color="#990000"/></linearGradient><linearGradient id="a103" gradientUnits="userSpaceOnUse" x1="758" y1="0" x2="1122" y2="0"><stop offset="0.000" stop-color="#008099"/><stop offset="0.266" stop-color="#077599"/><stop offset="0.401" stop-color="#926c99"/><stop offset="0.503" stop-color="#99314d"/><stop offset="0.698" stop-color="#990918"/><stop offset="1.000" stop-color="#990000"/></linearGradient><linearGradient id="a104" gradientUnits="userSpaceOnUse" x1="758" y1="0" x2="1125" y2="0"><stop offset="0.000" stop-color="#007c99"/><stop offset="0.262" stop-color="#067199"/><stop offset="0.398" stop-color="#926699"/><stop offset="0.501" stop-color="#992d4c"/><stop offset="0.698" stop-color="#990718"/><stop offset="1.000" stop-color="#990000"/></linearGradient><linearGradient id="a105" gradientUnits="userSpaceOnUse" x1="759" y1="0" x2="1128" y2="0"><stop offset="0.000" stop-color="#007899"/><stop offset="0.257" stop-color="#086c99"/><stop offset="0.393" stop-color="#916199"/><stop offset="0.499" stop-color="#992a4c"/><stop offset="0.699" stop-color="#990518"/><stop offset="1.000" stop-color="#990000"/></linearGradient><linearGradient id="a106" gradientUnits="userSpaceOnUse" x1="760" y1="0" x2="1131" y2="0"><stop offset="0.000" stop-color="#007599"/><stop offset="0.251" stop-color="#076899"/><stop offset="0.388" stop-color="#915c99"/><stop offset="0.496" stop-color="#99264c"/><stop offset="0.701" stop-color="#990318"/><stop offset="1.000" stop-color="#990000"/></linearGradient><linearGradient id="a107" gradientUnits="userSpaceOnUse" x1="760" y1="0" x2="1134" y2="0"><stop offset="0.000" stop-color="#007199"/><stop offset="0.246" stop-color="#076499"/><stop offset="0.385" stop-color="#915699"/><stop offset="0.471" stop-color="#992b57"/><stop offset="0.644" stop-color="#990721"/><stop offset="1.000" stop-color="#990000"/></linearGradient><linearGradient id="a108" gradientUnits="userSpaceOnUse" x1="761" y1="0" x2="1136" y2="0"><stop offset="0.000" stop-color="#006e99"/><stop offset="0.240" stop-color="#066099"/><stop offset="0.381" stop-color="#905199"/><stop offset="0.445" stop-color="#993065"/><stop offset="0.592" stop-color="#990c2b"/><stop offset="0.891" stop-color="#990005"/><stop offset="1.000" stop-color="#990000"/></linearGradient><linearGradient id="a109" gradientUnits="userSpaceOnUse" x1="762" y1="0" x2="1135" y2="0"><stop offset="0.000" stop-color="#006b99"/><stop offset="0.239" stop-color="#085b99"/><stop offset="0.383" stop-color="#934c99"/><stop offset="0.491" stop-color="#991e4d"/><stop offset="0.700" stop-color="#990019"/><stop offset="1.000" stop-color="#990000"/></linearGradient><linearGradient id="a110" gradientUnits="userSpaceOnUse" x1="762" y1="0" x2="1129" y2="0"><stop offset="0.000" stop-color="#006899"/><stop offset="0.240" stop-color="#075899"/><stop offset="0.390" stop-color="#934899"/><stop offset="0.501" stop-color="#991b4d"/><stop offset="0.717" stop-color="#990019"/><stop offset="1.000" stop-color="#990001"/></linearGradient><linearGradient id="a111" gradientUnits="userSpaceOnUse" x1="763" y1="0" x2="1122" y2="0"><stop offset="0.000" stop-color="#006499"/><stop offset="0.240" stop-color="#075499"/><stop offset="0.396" stop-color="#934399"/><stop offset="0.513" stop-color="#99184d"/><stop offset="0.738" stop-color="#990018"/><stop offset="1.000" stop-color="#990002"/></linearGradient><linearGradient id="a112" gradientUnits="userSpaceOnUse" x1="764" y1="0" x2="1116" y2="0"><stop offset="0.000" stop-color="#006199"/><stop offset="0.241" stop-color="#085099"/><stop offset="0.401" stop-color="#923f99"/><stop offset="0.523" stop-color="#99154c"/><stop offset="0.756" stop-color="#990018"/><stop offset="1.000" stop-color="#990004"/></linearGradient><linearGradient id="a113" gradientUnits="userSpaceOnUse" x1="764" y1="0" x2="1110" y2="0"><stop offset="0.000" stop-color="#005e99"/><stop offset="0.243" stop-color="#074d99"/><stop offset="0.408" stop-color="#923a99"/><stop offset="0.535" stop-color="#99124c"/><stop offset="0.763" stop-color="#99001a"/><stop offset="1.000" stop-color="#990005"/></linearGradient><linearGradient id="a114" gradientUnits="userSpaceOnUse" x1="765" y1="0" x2="1104" y2="0"><stop offset="0.000" stop-color="#005b99"/><stop offset="0.242" stop-color="#074a99"/><stop offset="0.413" stop-color="#923699"/><stop offset="0.546" stop-color="#990f4c"/><stop offset="0.779" stop-color="#99001a"/><stop offset="1.000" stop-color="#990007"/></linearGradient><linearGradient id="a115" gradientUnits="userSpaceOnUse" x1="766" y1="0" x2="1098" y2="0"><stop offset="0.000" stop-color="#005899"/><stop offset="0.241" stop-color="#064699"/><stop offset="0.419" stop-color="#913299"/><stop offset="0.557" stop-color="#990d4b"/><stop offset="0.810" stop-color="#990019"/><stop offset="1.000" stop-color="#990008"/></linearGradient><linearGradient id="a116" gradientUnits="userSpaceOnUse" x1="766" y1="0" x2="1092" y2="0"><stop offset="0.000" stop-color="#005599"/><stop offset="0.245" stop-color="#084399"/><stop offset="0.429" stop-color="#942e99"/><stop offset="0.561" stop-color="#990c4e"/><stop offset="0.822" stop-color="#99001a"/><stop offset="1.000" stop-color="#99000a"/></linearGradient><linearGradient id="a117" gradientUnits="userSpaceOnUse" x1="767" y1="0" x2="1086" y2="0"><stop offset="0.000" stop-color="#005299"/><stop offset="0.245" stop-color="#074099"/><stop offset="0.436" stop-color="#942a99"/><stop offset="0.574" stop-color="#99094e"/><stop offset="0.843" stop-color="#99001a"/><stop offset="1.000" stop-color="#99000c"/></linearGradient><linearGradient id="a118" gradientUnits="userSpaceOnUse" x1="768" y1="0" x2="1080" y2="0"><stop offset="0.000" stop-color="#004f99"/><stop offset="0.244" stop-color="#073d99"/><stop offset="0.442" stop-color="#932699"/><stop offset="0.587" stop-color="#99074e"/><stop offset="0.869" stop-color="#990019"/><stop offset="1.000" stop-color="#99000e"/></linearGradient><linearGradient id="a119" gradientUnits="userSpaceOnUse" x1="769" y1="0" x2="1073" y2="0"><stop offset="0.000" stop-color="#004c99"/><stop offset="0.247" stop-color="#083a99"/><stop offset="0.451" stop-color="#932399"/><stop offset="0.602" stop-color="#99044d"/><stop offset="0.895" stop-color="#990019"/><stop offset="1.000" stop-color="#990010"/></linearGradient><linearGradient id="a120" gradientUnits="userSpaceOnUse" x1="770" y1="0" x2="1067" y2="0"><stop offset="0.000" stop-color="#004999"/><stop offset="0.246" stop-color="#083799"/><stop offset="0.458" stop-color="#931f99"/><stop offset="0.616" stop-color="#99024d"/><stop offset="0.923" stop-color="#990019"/><stop offset="1.000" stop-color="#990012"/></linearGradient><linearGradient id="a121" gradientUnits="userSpaceOnUse" x1="770" y1="0" x2="1061" y2="0"><stop offset="0.000" stop-color="#004799"/><stop offset="0.247" stop-color="#073499"/><stop offset="0.467" stop-color="#921c99"/><stop offset="0.632" stop-color="#99004d"/><stop offset="0.952" stop-color="#990018"/><stop offset="1.000" stop-color="#990014"/></linearGradient><linearGradient id="a122" gradientUnits="userSpaceOnUse" x1="771" y1="0" x2="1055" y2="0"><stop offset="0.000" stop-color="#004499"/><stop offset="0.246" stop-color="#073299"/><stop offset="0.475" stop-color="#921899"/><stop offset="0.648" stop-color="#99004d"/><stop offset="0.979" stop-color="#990018"/><stop offset="1.000" stop-color="#990017"/></linearGradient><linearGradient id="a123" gradientUnits="userSpaceOnUse" x1="772" y1="0" x2="1049" y2="0"><stop offset="0.000" stop-color="#004199"/><stop offset="0.249" stop-color="#082f99"/><stop offset="0.487" stop-color="#951599"/><stop offset="0.657" stop-color="#99004e"/><stop offset="0.993" stop-color="#99001a"/><stop offset="1.000" stop-color="#990019"/></linearGradient><linearGradient id="a124" gradientUnits="userSpaceOnUse" x1="773" y1="0" x2="1043" y2="0"><stop offset="0.000" stop-color="#003e99"/><stop offset="0.248" stop-color="#082c99"/><stop offset="0.496" stop-color="#941199"/><stop offset="0.674" stop-color="#99004e"/><stop offset="1.000" stop-color="#99001c"/></linearGradient><linearGradient id="a125" gradientUnits="userSpaceOnUse" x1="774" y1="0" x2="1037" y2="0"><stop offset="0.000" stop-color="#003c99"/><stop offset="0.247" stop-color="#072a99"/><stop offset="0.502" stop-color="#910f99"/><stop offset="0.700" stop-color="#99004c"/><stop offset="1.000" stop-color="#99001e"/></linearGradient><linearGradient id="a126" gradientUnits="userSpaceOnUse" x1="775" y1="0" x2="1031" y2="0"><stop offset="0.000" stop-color="#003999"/><stop offset="0.250" stop-color="#082799"/><stop offset="0.516" stop-color="#940b99"/><stop offset="0.711" stop-color="#99004d"/><stop offset="1.000" stop-color="#990021"/></linearGradient><linearGradient id="a127" gradientUnits="userSpaceOnUse" x1="776" y1="0" x2="1024" y2="0"><stop offset="0.000" stop-color="#003699"/><stop offset="0.250" stop-color="#082599"/><stop offset="0.528" stop-color="#930899"/><stop offset="0.734" stop-color="#99004d"/><stop offset="1.000" stop-color="#990024"/></linearGradient><linearGradient id="a128" gradientUnits="userSpaceOnUse" x1="777" y1="0" x2="1018" y2="0"><stop offset="0.000" stop-color="#003499"/><stop offset="0.249" stop-color="#072399"/><stop offset="0.539" stop-color="#930699"/><stop offset="0.755" stop-color="#99004d"/><stop offset="1.000" stop-color="#990027"/></linearGradient><linearGradient id="a129" gradientUnits="userSpaceOnUse" x1="778" y1="0" x2="1012" y2="0"><stop offset="0.000" stop-color="#003199"/><stop offset="0.248" stop-color="#072099"/><stop offset="0.551" stop-color="#930399"/><stop offset="0.778" stop-color="#99004d"/><stop offset="1.000" stop-color="#99002b"/></linearGradient><linearGradient id="a130" gradientUnits="userSpaceOnUse" x1="779" y1="0" x2="1006" y2="0"><stop offset="0.000" stop-color="#002f99"/><stop offset="0.251" stop-color="#081e99"/><stop offset="0.564" stop-color="#930099"/><stop offset="0.802" stop-color="#99004c"/><stop offset="1.000" stop-color="#99002e"/></linearGradient><linearGradient id="a131" gradientUnits="userSpaceOnUse" x1="780" y1="0" x2="1000" y2="0"><stop offset="0.000" stop-color="#002c99"/><stop offset="0.250" stop-color="#081c99"/><stop offset="0.577" stop-color="#920099"/><stop offset="0.827" stop-color="#99004c"/><stop offset="1.000" stop-color="#990032"/></linearGradient><linearGradient id="a132" gradientUnits="userSpaceOnUse" x1="781" y1="0" x2="994" y2="0"><stop offset="0.000" stop-color="#002a99"/><stop offset="0.249" stop-color="#071a99"/><stop offset="0.592" stop-color="#920099"/><stop offset="0.854" stop-color="#99004c"/><stop offset="1.000" stop-color="#990036"/></linearGradient><linearGradient id="a133" gradientUnits="userSpaceOnUse" x1="782" y1="0" x2="988" y2="0"><stop offset="0.000" stop-color="#002799"/><stop offset="0.252" stop-color="#081799"/><stop offset="0.612" stop-color="#940099"/><stop offset="0.869" stop-color="#99004e"/><stop offset="1.000" stop-color="#99003a"/></linearGradient><linearGradient id="a134" gradientUnits="userSpaceOnUse" x1="783" y1="0" x2="981" y2="0"><stop offset="0.000" stop-color="#002599"/><stop offset="0.253" stop-color="#081599"/><stop offset="0.631" stop-color="#940099"/><stop offset="0.904" stop-color="#99004e"/><stop offset="1.000" stop-color="#99003f"/></linearGradient><linearGradient id="a135" gradientUnits="userSpaceOnUse" x1="784" y1="0" x2="975" y2="0"><stop offset="0.000" stop-color="#002299"/><stop offset="0.251" stop-color="#081499"/><stop offset="0.649" stop-color="#940099"/><stop offset="0.937" stop-color="#99004e"/><stop offset="1.000" stop-color="#990044"/></linearGradient><linearGradient id="a136" gradientUnits="userSpaceOnUse" x1="785" y1="0" x2="969" y2="0"><stop offset="0.000" stop-color="#002099"/><stop offset="0.255" stop-color="#091199"/><stop offset="0.668" stop-color="#940099"/><stop offset="0.973" stop-color="#99004e"/><stop offset="1.000" stop-color="#99004a"/></linearGradient><linearGradient id="a137" gradientUnits="userSpaceOnUse" x1="786" y1="0" x2="963" y2="0"><stop offset="0.000" stop-color="#001e99"/><stop offset="0.254" stop-color="#080f99"/><stop offset="0.689" stop-color="#930099"/><stop offset="1.000" stop-color="#99004f"/></linearGradient><linearGradient id="a138" gradientUnits="userSpaceOnUse" x1="787" y1="0" x2="957" y2="0"><stop offset="0.000" stop-color="#001b99"/><stop offset="0.253" stop-color="#080e99"/><stop offset="0.712" stop-color="#930099"/><stop offset="1.000" stop-color="#990055"/></linearGradient><linearGradient id="a139" gradientUnits="userSpaceOnUse" x1="788" y1="0" x2="951" y2="0"><stop offset="0.000" stop-color="#001999"/><stop offset="0.258" stop-color="#090c99"/><stop offset="0.742" stop-color="#950099"/><stop offset="1.000" stop-color="#99005c"/></linearGradient><linearGradient id="a140" gradientUnits="userSpaceOnUse" x1="789" y1="0" x2="945" y2="0"><stop offset="0.000" stop-color="#001799"/><stop offset="0.256" stop-color="#090a99"/><stop offset="0.769" stop-color="#950099"/><stop offset="1.000" stop-color="#990063"/></linearGradient><linearGradient id="a141" gradientUnits="userSpaceOnUse" x1="790" y1="0" x2="939" y2="0"><stop offset="0.000" stop-color="#001599"/><stop offset="0.255" stop-color="#080899"/><stop offset="0.799" stop-color="#950099"/><stop offset="1.000" stop-color="#99006b"/></linearGradient><linearGradient id="a142" gradientUnits="userSpaceOnUse" x1="792" y1="0" x2="932" y2="0"><stop offset="0.000" stop-color="#001299"/><stop offset="0.257" stop-color="#090699"/><stop offset="0.836" stop-color="#940099"/><stop offset="1.000" stop-color="#990075"/></linearGradient><linearGradient id="a143" gradientUnits="userSpaceOnUse" x1="793" y1="0" x2="926" y2="0"><stop offset="0.000" stop-color="#001099"/><stop offset="0.256" stop-color="#090599"/><stop offset="0.872" stop-color="#940099"/><stop offset="1.000" stop-color="#99007e"/></linearGradient><linearGradient id="a144" gradientUnits="userSpaceOnUse" x1="794" y1="0" x2="920" y2="0"><stop offset="0.000" stop-color="#000e99"/><stop offset="0.262" stop-color="#0a0399"/><stop offset="0.921" stop-color="#960099"/><stop offset="1.000" stop-color="#990089"/></linearGradient><linearGradient id="a145" gradientUnits="userSpaceOnUse" x1="795" y1="0" x2="914" y2="0"><stop offset="0.000" stop-color="#000c99"/><stop offset="0.261" stop-color="#090199"/><stop offset="0.966" stop-color="#960099"/><stop offset="1.000" stop-color="#990094"/></linearGradient><linearGradient id="a146" gradientUnits="userSpaceOnUse" x1="797" y1="0" x2="908" y2="0"><stop offset="0.000" stop-color="#000999"/><stop offset="0.261" stop-color="#0a0099"/><stop offset="1.000" stop-color="#910099"/></linearGradient><linearGradient id="a147" gradientUnits="userSpaceOnUse" x1="798" y1="0" x2="902" y2="0"><stop offset="0.000" stop-color="#000799"/><stop offset="0.260" stop-color="#0a0099"/><stop offset="1.000" stop-color="#850099"/></linearGradient><linearGradient id="a148" gradientUnits="userSpaceOnUse" x1="800" y1="0" x2="896" y2="0"><stop offset="0.000" stop-color="#000599"/><stop offset="0.271" stop-color="#0c0099"/><stop offset="1.000" stop-color="#7a0099"/></linearGradient><linearGradient id="a149" gradientUnits="userSpaceOnUse" x1="802" y1="0" x2="890" y2="0"><stop offset="0.000" stop-color="#000299"/><stop offset="0.273" stop-color="#0d0099"/><stop offset="1.000" stop-color="#6f0099"/></linearGradient><linearGradient id="a150" gradientUnits="userSpaceOnUse" x1="803" y1="0" x2="883" y2="0"><stop offset="0.000" stop-color="#000099"/><stop offset="0.300" stop-color="#0f0099"/><stop offset="1.000" stop-color="#630099"/></linearGradient><linearGradient id="a151" gradientUnits="userSpaceOnUse" x1="805" y1="0" x2="877" y2="0"><stop offset="0.000" stop-color="#000099"/><stop offset="0.375" stop-color="#170099"/><stop offset="1.000" stop-color="#590099"/></linearGradient><linearGradient id="a152" gradientUnits="userSpaceOnUse" x1="807" y1="0" x2="871" y2="0"><stop offset="0.000" stop-color="#000099"/><stop offset="0.875" stop-color="#440099"/><stop offset="1.000" stop-color="#500099"/></linearGradient><linearGradient id="a153" gradientUnits="userSpaceOnUse" x1="810" y1="0" x2="865" y2="0"><stop offset="0.000" stop-color="#000099"/><stop offset="1.000" stop-color="#470099"/></linearGradient><linearGradient id="a154" gradientUnits="userSpaceOnUse" x1="812" y1="0" x2="859" y2="0"><stop offset="0.000" stop-color="#000099"/><stop offset="1.000" stop-color="#3f0099"/></linearGradient><linearGradient id="a155" gradientUnits="userSpaceOnUse" x1="815" y1="0" x2="853" y2="0"><stop offset="0.000" stop-color="#050099"/><stop offset="1.000" stop-color="#370099"/></linearGradient><linearGradient id="a156" gradientUnits="userSpaceOnUse" x1="818" y1="0" x2="847" y2="0"><stop offset="0.000" stop-color="#090099"/><stop offset="1.000" stop-color="#2f0099"/></linearGradient><linearGradient id="a157" gradientUnits="userSpaceOnUse" x1="822" y1="0" x2="841" y2="0"><stop offset="0.000" stop-color="#0f0099"/><stop offset="1.000" stop-color="#270099"/></linearGradient><linearGradient id="a158" gradientUnits="userSpaceOnUse" x1="825" y1="0" x2="834" y2="0"><stop offset="0.000" stop-color="#140099"/><stop offset="1.000" stop-color="#1f0099"/></linearGradient><linearGradient id="b159" gradientUnits="userSpaceOnUse" x1="895" y1="0" x2="903" y2="0"><stop offset="0.000" stop-color="#00ff03"/><stop offset="1.000" stop-color="#0bff00"/></linearGradient><linearGradient id="b160" gradientUnits="userSpaceOnUse" x1="894" y1="0" x2="907" y2="0"><stop offset="0.000" stop-color="#00ff05"/><stop offset="1.000" stop-color="#16ff00"/></linearGradient><linearGradient id="b161" gradientUnits="userSpaceOnUse" x1="894" y1="0" x2="911" y2="0"><stop offset="0.000" stop-color="#00ff07"/><stop offset="1.000" stop-color="#21ff00"/></linearGradient><linearGradient id="b162" gradientUnits="userSpaceOnUse" x1="893" y1="0" x2="914" y2="0"><stop offset="0.000" stop-color="#00ff0a"/><stop offset="1.000" stop-color="#2aff00"/></linearGradient><linearGradient id="b163" gradientUnits="userSpaceOnUse" x1="892" y1="0" x2="918" y2="0"><stop offset="0.000" stop-color="#00ff0d"/><stop offset="1.000" stop-color="#36ff00"/></linearGradient><linearGradient id="b164" gradientUnits="userSpaceOnUse" x1="891" y1="0" x2="921" y2="0"><stop offset="0.000" stop-color="#00ff10"/><stop offset="1.000" stop-color="#40ff00"/></linearGradient><linearGradient id="b165" gradientUnits="userSpaceOnUse" x1="890" y1="0" x2="925" y2="0"><stop offset="0.000" stop-color="#00ff13"/><stop offset="1.000" stop-color="#4dff00"/></linearGradient><linearGradient id="b166" gradientUnits="userSpaceOnUse" x1="890" y1="0" x2="929" y2="0"><stop offset="0.000" stop-color="#00ff15"/><stop offset="1.000" stop-color="#5bff00"/></linearGradient><linearGradient id="b167" gradientUnits="userSpaceOnUse" x1="889" y1="0" x2="932" y2="0"><stop offset="0.000" stop-color="#00ff18"/><stop offset="1.000" stop-color="#66ff00"/></linearGradient><linearGradient id="b168" gradientUnits="userSpaceOnUse" x1="888" y1="0" x2="936" y2="0"><stop offset="0.000" stop-color="#00ff1b"/><stop offset="1.000" stop-color="#75ff00"/></linearGradient><linearGradient id="b169" gradientUnits="userSpaceOnUse" x1="887" y1="0" x2="939" y2="0"><stop offset="0.000" stop-color="#00ff1e"/><stop offset="0.846" stop-color="#6aff03"/><stop offset="1.000" stop-color="#82ff00"/></linearGradient><linearGradient id="b170" gradientUnits="userSpaceOnUse" x1="886" y1="0" x2="943" y2="0"><stop offset="0.000" stop-color="#00ff21"/><stop offset="0.684" stop-color="#5dff0a"/><stop offset="1.000" stop-color="#93ff00"/></linearGradient><linearGradient id="b171" gradientUnits="userSpaceOnUse" x1="886" y1="0" x2="946" y2="0"><stop offset="0.000" stop-color="#00ff24"/><stop offset="0.817" stop-color="#7eff06"/><stop offset="1.000" stop-color="#a1ff00"/></linearGradient><linearGradient id="b172" gradientUnits="userSpaceOnUse" x1="885" y1="0" x2="950" y2="0"><stop offset="0.000" stop-color="#00ff27"/><stop offset="0.708" stop-color="#76ff0b"/><stop offset="1.000" stop-color="#b3ff00"/></linearGradient><linearGradient id="b173" gradientUnits="userSpaceOnUse" x1="884" y1="0" x2="954" y2="0"><stop offset="0.000" stop-color="#00ff2b"/><stop offset="0.614" stop-color="#6dff11"/><stop offset="1.000" stop-color="#c6ff00"/></linearGradient><linearGradient id="b174" gradientUnits="userSpaceOnUse" x1="883" y1="0" x2="957" y2="0"><stop offset="0.000" stop-color="#00ff2e"/><stop offset="0.514" stop-color="#5fff18"/><stop offset="1.000" stop-color="#d7ff00"/></linearGradient><linearGradient id="b175" gradientUnits="userSpaceOnUse" x1="882" y1="0" x2="961" y2="0"><stop offset="0.000" stop-color="#00ff32"/><stop offset="0.367" stop-color="#45ff21"/><stop offset="1.000" stop-color="#ecff00"/></linearGradient><linearGradient id="b176" gradientUnits="userSpaceOnUse" x1="882" y1="0" x2="964" y2="0"><stop offset="0.000" stop-color="#00ff35"/><stop offset="0.549" stop-color="#79ff1a"/><stop offset="1.000" stop-color="#ffff00"/></linearGradient><linearGradient id="b177" gradientUnits="userSpaceOnUse" x1="881" y1="0" x2="968" y2="0"><stop offset="0.000" stop-color="#00ff38"/><stop offset="0.471" stop-color="#6dff20"/><stop offset="0.954" stop-color="#fff800"/><stop offset="1.000" stop-color="#ffe900"/></linearGradient><linearGradient id="b178" gradientUnits="userSpaceOnUse" x1="880" y1="0" x2="972" y2="0"><stop offset="0.000" stop-color="#00ff3c"/><stop offset="0.402" stop-color="#61ff27"/><stop offset="0.891" stop-color="#fff905"/><stop offset="1.000" stop-color="#ffd500"/></linearGradient><linearGradient id="b179" gradientUnits="userSpaceOnUse" x1="879" y1="0" x2="975" y2="0"><stop offset="0.000" stop-color="#00ff40"/><stop offset="0.292" stop-color="#46ff30"/><stop offset="0.844" stop-color="#fffa0a"/><stop offset="1.000" stop-color="#ffc700"/></linearGradient><linearGradient id="b180" gradientUnits="userSpaceOnUse" x1="878" y1="0" x2="979" y2="0"><stop offset="0.000" stop-color="#00ff44"/><stop offset="0.218" stop-color="#34ff38"/><stop offset="0.733" stop-color="#eaff14"/><stop offset="0.812" stop-color="#fff30d"/><stop offset="1.000" stop-color="#ffb600"/></linearGradient><linearGradient id="b181" gradientUnits="userSpaceOnUse" x1="878" y1="0" x2="982" y2="0"><stop offset="0.000" stop-color="#00ff48"/><stop offset="0.385" stop-color="#71ff31"/><stop offset="0.760" stop-color="#fff813"/><stop offset="1.000" stop-color="#ffaa00"/></linearGradient><linearGradient id="b182" gradientUnits="userSpaceOnUse" x1="877" y1="0" x2="986" y2="0"><stop offset="0.000" stop-color="#00ff4c"/><stop offset="0.330" stop-color="#64ff38"/><stop offset="0.716" stop-color="#fff919"/><stop offset="0.991" stop-color="#ff9f00"/><stop offset="1.000" stop-color="#ff9c00"/></linearGradient><linearGradient id="b183" gradientUnits="userSpaceOnUse" x1="876" y1="0" x2="989" y2="0"><stop offset="0.000" stop-color="#00ff50"/><stop offset="0.230" stop-color="#44ff42"/><stop offset="0.664" stop-color="#fbff20"/><stop offset="0.956" stop-color="#ff9c01"/><stop offset="1.000" stop-color="#ff9200"/></linearGradient><linearGradient id="b184" gradientUnits="userSpaceOnUse" x1="875" y1="0" x2="993" y2="0"><stop offset="0.000" stop-color="#00ff54"/><stop offset="0.178" stop-color="#35ff49"/><stop offset="0.593" stop-color="#e8ff29"/><stop offset="0.661" stop-color="#fff321"/><stop offset="0.915" stop-color="#ff9a04"/><stop offset="1.000" stop-color="#ff8600"/></linearGradient><linearGradient id="b185" gradientUnits="userSpaceOnUse" x1="875" y1="0" x2="997" y2="0"><stop offset="0.000" stop-color="#00ff58"/><stop offset="0.311" stop-color="#71ff43"/><stop offset="0.615" stop-color="#fff828"/><stop offset="0.852" stop-color="#ff9e09"/><stop offset="1.000" stop-color="#ff7c00"/></linearGradient><linearGradient id="b186" gradientUnits="userSpaceOnUse" x1="874" y1="0" x2="1000" y2="0"><stop offset="0.000" stop-color="#00ff5d"/><stop offset="0.270" stop-color="#63ff4b"/><stop offset="0.587" stop-color="#fff92e"/><stop offset="0.810" stop-color="#ffa00e"/><stop offset="1.000" stop-color="#ff7300"/></linearGradient><linearGradient id="b187" gradientUnits="userSpaceOnUse" x1="873" y1="0" x2="1004" y2="0"><stop offset="0.000" stop-color="#00ff62"/><stop offset="0.191" stop-color="#45ff55"/><stop offset="0.542" stop-color="#faff37"/><stop offset="0.786" stop-color="#ff9b10"/><stop offset="1.000" stop-color="#ff6a00"/></linearGradient><linearGradient id="b188" gradientUnits="userSpaceOnUse" x1="872" y1="0" x2="1007" y2="0"><stop offset="0.000" stop-color="#00ff66"/><stop offset="0.133" stop-color="#2eff5e"/><stop offset="0.481" stop-color="#e2ff41"/><stop offset="0.541" stop-color="#fff739"/><stop offset="0.748" stop-color="#ff9d15"/><stop offset="1.000" stop-color="#ff6300"/></linearGradient><linearGradient id="b189" gradientUnits="userSpaceOnUse" x1="871" y1="0" x2="1011" y2="0"><stop offset="0.000" stop-color="#00ff6b"/><stop offset="0.114" stop-color="#28ff64"/><stop offset="0.450" stop-color="#dbff48"/><stop offset="0.514" stop-color="#fff940"/><stop offset="0.707" stop-color="#ff9f1a"/><stop offset="1.000" stop-color="#ff5b00"/></linearGradient><linearGradient id="b190" gradientUnits="userSpaceOnUse" x1="871" y1="0" x2="1015" y2="0"><stop offset="0.000" stop-color="#00ff70"/><stop offset="0.229" stop-color="#66ff60"/><stop offset="0.486" stop-color="#fffa46"/><stop offset="0.674" stop-color="#ff9f1f"/><stop offset="1.000" stop-color="#ff5300"/></linearGradient><linearGradient id="b191" gradientUnits="userSpaceOnUse" x1="870" y1="0" x2="1018" y2="0"><stop offset="0.000" stop-color="#00ff75"/><stop offset="0.169" stop-color="#4aff69"/><stop offset="0.466" stop-color="#fffb4d"/><stop offset="0.642" stop-color="#ffa124"/><stop offset="0.946" stop-color="#ff5602"/><stop offset="1.000" stop-color="#ff4d00"/></linearGradient><linearGradient id="b192" gradientUnits="userSpaceOnUse" x1="869" y1="0" x2="1022" y2="0"><stop offset="0.000" stop-color="#00ff7b"/><stop offset="0.111" stop-color="#2eff73"/><stop offset="0.399" stop-color="#dfff5a"/><stop offset="0.451" stop-color="#fff752"/><stop offset="0.621" stop-color="#ff9e28"/><stop offset="0.922" stop-color="#ff5304"/><stop offset="1.000" stop-color="#ff4700"/></linearGradient><linearGradient id="b193" gradientUnits="userSpaceOnUse" x1="868" y1="0" x2="1025" y2="0"><stop offset="0.000" stop-color="#00ff80"/><stop offset="0.083" stop-color="#21ff7b"/><stop offset="0.369" stop-color="#d4ff63"/><stop offset="0.433" stop-color="#fff95a"/><stop offset="0.599" stop-color="#ff9e2d"/><stop offset="0.885" stop-color="#ff5307"/><stop offset="1.000" stop-color="#ff4100"/></linearGradient><linearGradient id="b194" gradientUnits="userSpaceOnUse" x1="867" y1="0" x2="1029" y2="0"><stop offset="0.000" stop-color="#00ff86"/><stop offset="0.080" stop-color="#20ff80"/><stop offset="0.352" stop-color="#d2ff6a"/><stop offset="0.414" stop-color="#fffa61"/><stop offset="0.568" stop-color="#ffa033"/><stop offset="0.840" stop-color="#ff540b"/><stop offset="1.000" stop-color="#ff3b00"/></linearGradient><linearGradient id="b195" gradientUnits="userSpaceOnUse" x1="867" y1="0" x2="1032" y2="0"><stop offset="0.000" stop-color="#00ff8b"/><stop offset="0.145" stop-color="#4cff81"/><stop offset="0.394" stop-color="#fffb69"/><stop offset="0.539" stop-color="#ffa339"/><stop offset="0.794" stop-color="#ff5710"/><stop offset="1.000" stop-color="#ff3600"/></linearGradient><linearGradient id="b196" gradientUnits="userSpaceOnUse" x1="866" y1="0" x2="1036" y2="0"><stop offset="0.000" stop-color="#00ff91"/><stop offset="0.100" stop-color="#32ff8b"/><stop offset="0.347" stop-color="#e7ff76"/><stop offset="0.388" stop-color="#fff36c"/><stop offset="0.535" stop-color="#ff9a3a"/><stop offset="0.794" stop-color="#ff5010"/><stop offset="1.000" stop-color="#ff3100"/></linearGradient><linearGradient id="b197" gradientUnits="userSpaceOnUse" x1="865" y1="0" x2="1040" y2="0"><stop offset="0.000" stop-color="#00ff97"/><stop offset="0.074" stop-color="#23ff93"/><stop offset="0.314" stop-color="#d6ff7f"/><stop offset="0.366" stop-color="#fff977"/><stop offset="0.503" stop-color="#ff9f42"/><stop offset="0.743" stop-color="#ff5416"/><stop offset="1.000" stop-color="#ff2c00"/></linearGradient><linearGradient id="b198" gradientUnits="userSpaceOnUse" x1="864" y1="0" x2="1043" y2="0"><stop offset="0.000" stop-color="#00ff9e"/><stop offset="0.061" stop-color="#1cff9a"/><stop offset="0.296" stop-color="#cfff88"/><stop offset="0.352" stop-color="#fffa80"/><stop offset="0.480" stop-color="#ffa24a"/><stop offset="0.709" stop-color="#ff551b"/><stop offset="1.000" stop-color="#ff2800"/></linearGradient><linearGradient id="b199" gradientUnits="userSpaceOnUse" x1="863" y1="0" x2="1047" y2="0"><stop offset="0.000" stop-color="#00ffa4"/><stop offset="0.060" stop-color="#1bffa1"/><stop offset="0.283" stop-color="#cdff90"/><stop offset="0.342" stop-color="#fff686"/><stop offset="0.473" stop-color="#ff9c4c"/><stop offset="0.701" stop-color="#ff511c"/><stop offset="1.000" stop-color="#ff2300"/></linearGradient><linearGradient id="b200" gradientUnits="userSpaceOnUse" x1="863" y1="0" x2="1050" y2="0"><stop offset="0.000" stop-color="#00ffab"/><stop offset="0.086" stop-color="#32ffa6"/><stop offset="0.294" stop-color="#e5ff96"/><stop offset="0.332" stop-color="#fff28b"/><stop offset="0.460" stop-color="#ff9950"/><stop offset="0.684" stop-color="#ff4f1e"/><stop offset="1.000" stop-color="#ff2000"/></linearGradient><linearGradient id="b201" gradientUnits="userSpaceOnUse" x1="862" y1="0" x2="1054" y2="0"><stop offset="0.000" stop-color="#00ffb2"/><stop offset="0.062" stop-color="#22ffae"/><stop offset="0.266" stop-color="#d3ffa0"/><stop offset="0.312" stop-color="#fff999"/><stop offset="0.427" stop-color="#ffa15b"/><stop offset="0.630" stop-color="#ff5527"/><stop offset="1.000" stop-color="#ff1b00"/></linearGradient><linearGradient id="b202" gradientUnits="userSpaceOnUse" x1="861" y1="0" x2="1058" y2="0"><stop offset="0.000" stop-color="#00ffb9"/><stop offset="0.051" stop-color="#1affb6"/><stop offset="0.249" stop-color="#cbffaa"/><stop offset="0.299" stop-color="#fffba3"/><stop offset="0.411" stop-color="#ffa162"/><stop offset="0.604" stop-color="#ff562b"/><stop offset="0.985" stop-color="#ff1900"/><stop offset="1.000" stop-color="#ff1700"/></linearGradient><linearGradient id="b203" gradientUnits="userSpaceOnUse" x1="860" y1="0" x2="1061" y2="0"><stop offset="0.000" stop-color="#00ffc1"/><stop offset="0.045" stop-color="#16ffbe"/><stop offset="0.239" stop-color="#c9ffb3"/><stop offset="0.294" stop-color="#fff6a9"/><stop offset="0.403" stop-color="#ff9d66"/><stop offset="0.597" stop-color="#ff522d"/><stop offset="0.980" stop-color="#ff1600"/><stop offset="1.000" stop-color="#ff1400"/></linearGradient><linearGradient id="b204" gradientUnits="userSpaceOnUse" x1="860" y1="0" x2="1065" y2="0"><stop offset="0.000" stop-color="#00ffc8"/><stop offset="0.078" stop-color="#36ffc5"/><stop offset="0.254" stop-color="#e8ffba"/><stop offset="0.283" stop-color="#fff2af"/><stop offset="0.390" stop-color="#ff9a6a"/><stop offset="0.580" stop-color="#ff5030"/><stop offset="0.961" stop-color="#ff1401"/><stop offset="1.000" stop-color="#ff1100"/></linearGradient><linearGradient id="b205" gradientUnits="userSpaceOnUse" x1="859" y1="0" x2="1068" y2="0"><stop offset="0.000" stop-color="#00ffd0"/><stop offset="0.057" stop-color="#26ffce"/><stop offset="0.230" stop-color="#d5ffc5"/><stop offset="0.268" stop-color="#fff9bf"/><stop offset="0.368" stop-color="#ffa076"/><stop offset="0.545" stop-color="#ff5438"/><stop offset="0.895" stop-color="#ff1707"/><stop offset="1.000" stop-color="#ff0e00"/></linearGradient><linearGradient id="b206" gradientUnits="userSpaceOnUse" x1="858" y1="0" x2="1072" y2="0"><stop offset="0.000" stop-color="#00ffd8"/><stop offset="0.042" stop-color="#19ffd7"/><stop offset="0.215" stop-color="#cdffd0"/><stop offset="0.257" stop-color="#fffbcb"/><stop offset="0.350" stop-color="#ffa380"/><stop offset="0.514" stop-color="#ff5740"/><stop offset="0.836" stop-color="#ff1a0c"/><stop offset="1.000" stop-color="#ff0a00"/></linearGradient><linearGradient id="b207" gradientUnits="userSpaceOnUse" x1="857" y1="0" x2="1075" y2="0"><stop offset="0.000" stop-color="#00ffe1"/><stop offset="0.037" stop-color="#14ffe0"/><stop offset="0.202" stop-color="#c4ffdb"/><stop offset="0.252" stop-color="#fff7d1"/><stop offset="0.344" stop-color="#ff9f84"/><stop offset="0.505" stop-color="#ff5443"/><stop offset="0.826" stop-color="#ff180d"/><stop offset="1.000" stop-color="#ff0700"/></linearGradient><linearGradient id="b208" gradientUnits="userSpaceOnUse" x1="856" y1="0" x2="1079" y2="0"><stop offset="0.000" stop-color="#00ffea"/><stop offset="0.036" stop-color="#14ffe9"/><stop offset="0.193" stop-color="#c2ffe5"/><stop offset="0.242" stop-color="#fff8de"/><stop offset="0.332" stop-color="#ff9f8c"/><stop offset="0.489" stop-color="#ff5347"/><stop offset="0.798" stop-color="#ff1710"/><stop offset="1.000" stop-color="#ff0400"/></linearGradient><linearGradient id="b209" gradientUnits="userSpaceOnUse" x1="856" y1="0" x2="1083" y2="0"><stop offset="0.000" stop-color="#00fff3"/><stop offset="0.048" stop-color="#25fff2"/><stop offset="0.198" stop-color="#d7fff0"/><stop offset="0.229" stop-color="#fffaeb"/><stop offset="0.313" stop-color="#ffa297"/><stop offset="0.458" stop-color="#ff5750"/><stop offset="0.749" stop-color="#ff1916"/><stop offset="1.000" stop-color="#ff0200"/></linearGradient><linearGradient id="b210" gradientUnits="userSpaceOnUse" x1="855" y1="0" x2="1085" y2="0"><stop offset="0.000" stop-color="#00fffc"/><stop offset="0.039" stop-color="#1cfffc"/><stop offset="0.187" stop-color="#cefffc"/><stop offset="0.222" stop-color="#fffcf9"/><stop offset="0.304" stop-color="#ffa19f"/><stop offset="0.448" stop-color="#ff5655"/><stop offset="0.730" stop-color="#ff1919"/><stop offset="1.000" stop-color="#ff0000"/></linearGradient><linearGradient id="b211" gradientUnits="userSpaceOnUse" x1="854" y1="0" x2="1082" y2="0"><stop offset="0.000" stop-color="#00f8ff"/><stop offset="0.035" stop-color="#16f8ff"/><stop offset="0.184" stop-color="#c5f6ff"/><stop offset="0.228" stop-color="#fff0fa"/><stop offset="0.311" stop-color="#ff9aa1"/><stop offset="0.456" stop-color="#ff5156"/><stop offset="0.746" stop-color="#ff1619"/><stop offset="1.000" stop-color="#ff0001"/></linearGradient><linearGradient id="b212" gradientUnits="userSpaceOnUse" x1="853" y1="0" x2="1077" y2="0"><stop offset="0.000" stop-color="#00efff"/><stop offset="0.031" stop-color="#11eeff"/><stop offset="0.188" stop-color="#bfebff"/><stop offset="0.237" stop-color="#ffe5fb"/><stop offset="0.326" stop-color="#ff90a0"/><stop offset="0.478" stop-color="#ff4a55"/><stop offset="0.781" stop-color="#ff1218"/><stop offset="1.000" stop-color="#ff0004"/></linearGradient><linearGradient id="b213" gradientUnits="userSpaceOnUse" x1="852" y1="0" x2="1072" y2="0"><stop offset="0.000" stop-color="#00e6ff"/><stop offset="0.036" stop-color="#14e5ff"/><stop offset="0.200" stop-color="#c5e0ff"/><stop offset="0.245" stop-color="#ffdbfc"/><stop offset="0.336" stop-color="#ff89a1"/><stop offset="0.495" stop-color="#ff4555"/><stop offset="0.809" stop-color="#ff0f19"/><stop offset="1.000" stop-color="#ff0007"/></linearGradient><linearGradient id="b214" gradientUnits="userSpaceOnUse" x1="852" y1="0" x2="1066" y2="0"><stop offset="0.000" stop-color="#00ddff"/><stop offset="0.056" stop-color="#27dbff"/><stop offset="0.224" stop-color="#ddd4ff"/><stop offset="0.257" stop-color="#ffcbf6"/><stop offset="0.355" stop-color="#ff7e9d"/><stop offset="0.528" stop-color="#ff3c51"/><stop offset="0.874" stop-color="#ff0915"/><stop offset="1.000" stop-color="#ff000a"/></linearGradient><linearGradient id="b215" gradientUnits="userSpaceOnUse" x1="851" y1="0" x2="1061" y2="0"><stop offset="0.000" stop-color="#00d5ff"/><stop offset="0.048" stop-color="#1dd3ff"/><stop offset="0.224" stop-color="#d1caff"/><stop offset="0.267" stop-color="#ffc2f7"/><stop offset="0.367" stop-color="#ff779e"/><stop offset="0.543" stop-color="#ff3953"/><stop offset="0.895" stop-color="#ff0717"/><stop offset="1.000" stop-color="#ff000d"/></linearGradient><linearGradient id="b216" gradientUnits="userSpaceOnUse" x1="850" y1="0" x2="1056" y2="0"><stop offset="0.000" stop-color="#00ccff"/><stop offset="0.044" stop-color="#18cbff"/><stop offset="0.228" stop-color="#cbc0ff"/><stop offset="0.277" stop-color="#ffb8f8"/><stop offset="0.379" stop-color="#ff71a0"/><stop offset="0.558" stop-color="#ff3555"/><stop offset="0.913" stop-color="#ff0518"/><stop offset="1.000" stop-color="#ff0010"/></linearGradient><linearGradient id="b217" gradientUnits="userSpaceOnUse" x1="849" y1="0" x2="1051" y2="0"><stop offset="0.000" stop-color="#00c5ff"/><stop offset="0.045" stop-color="#17c3ff"/><stop offset="0.233" stop-color="#c6b7ff"/><stop offset="0.287" stop-color="#ffaff9"/><stop offset="0.396" stop-color="#ff699e"/><stop offset="0.584" stop-color="#ff3053"/><stop offset="0.960" stop-color="#ff0117"/><stop offset="1.000" stop-color="#ff0013"/></linearGradient><linearGradient id="b218" gradientUnits="userSpaceOnUse" x1="848" y1="0" x2="1046" y2="0"><stop offset="0.000" stop-color="#00bdff"/><stop offset="0.051" stop-color="#19bbff"/><stop offset="0.247" stop-color="#ccaeff"/><stop offset="0.298" stop-color="#ffa6fa"/><stop offset="0.409" stop-color="#ff64a0"/><stop offset="0.601" stop-color="#ff2c55"/><stop offset="0.985" stop-color="#ff0018"/><stop offset="1.000" stop-color="#ff0017"/></linearGradient><linearGradient id="b219" gradientUnits="userSpaceOnUse" x1="848" y1="0" x2="1041" y2="0"><stop offset="0.000" stop-color="#00b6ff"/><stop offset="0.078" stop-color="#2fb1ff"/><stop offset="0.275" stop-color="#e1a3ff"/><stop offset="0.311" stop-color="#ff9af5"/><stop offset="0.430" stop-color="#ff5a9c"/><stop offset="0.637" stop-color="#ff2551"/><stop offset="1.000" stop-color="#ff001a"/></linearGradient><linearGradient id="b220" gradientUnits="userSpaceOnUse" x1="847" y1="0" x2="1035" y2="0"><stop offset="0.000" stop-color="#00afff"/><stop offset="0.069" stop-color="#26abff"/><stop offset="0.282" stop-color="#dc9bff"/><stop offset="0.324" stop-color="#ff91f6"/><stop offset="0.447" stop-color="#ff559d"/><stop offset="0.660" stop-color="#ff2253"/><stop offset="1.000" stop-color="#ff001f"/></linearGradient><linearGradient id="b221" gradientUnits="userSpaceOnUse" x1="846" y1="0" x2="1030" y2="0"><stop offset="0.000" stop-color="#00a8ff"/><stop offset="0.060" stop-color="#1da4ff"/><stop offset="0.283" stop-color="#d193ff"/><stop offset="0.337" stop-color="#ff89f7"/><stop offset="0.462" stop-color="#ff509f"/><stop offset="0.685" stop-color="#ff1e53"/><stop offset="1.000" stop-color="#ff0023"/></linearGradient><linearGradient id="b222" gradientUnits="userSpaceOnUse" x1="845" y1="0" x2="1025" y2="0"><stop offset="0.000" stop-color="#00a1ff"/><stop offset="0.061" stop-color="#1c9dff"/><stop offset="0.289" stop-color="#cc8bff"/><stop offset="0.350" stop-color="#ff82f8"/><stop offset="0.483" stop-color="#ff499d"/><stop offset="0.717" stop-color="#ff1a52"/><stop offset="1.000" stop-color="#ff0027"/></linearGradient><linearGradient id="b223" gradientUnits="userSpaceOnUse" x1="845" y1="0" x2="1020" y2="0"><stop offset="0.000" stop-color="#009bff"/><stop offset="0.137" stop-color="#4f91ff"/><stop offset="0.360" stop-color="#ff7af9"/><stop offset="0.497" stop-color="#ff449f"/><stop offset="0.737" stop-color="#ff1754"/><stop offset="1.000" stop-color="#ff002b"/></linearGradient><linearGradient id="b224" gradientUnits="userSpaceOnUse" x1="844" y1="0" x2="1015" y2="0"><stop offset="0.000" stop-color="#0094ff"/><stop offset="0.111" stop-color="#3a8dff"/><stop offset="0.351" stop-color="#f078ff"/><stop offset="0.380" stop-color="#ff70f4"/><stop offset="0.526" stop-color="#ff3c9b"/><stop offset="0.784" stop-color="#ff1150"/><stop offset="1.000" stop-color="#ff0030"/></linearGradient><linearGradient id="b225" gradientUnits="userSpaceOnUse" x1="843" y1="0" x2="1010" y2="0"><stop offset="0.000" stop-color="#008eff"/><stop offset="0.090" stop-color="#2a88ff"/><stop offset="0.347" stop-color="#e072ff"/><stop offset="0.395" stop-color="#ff69f5"/><stop offset="0.545" stop-color="#ff389c"/><stop offset="0.808" stop-color="#ff0e52"/><stop offset="1.000" stop-color="#ff0034"/></linearGradient><linearGradient id="b226" gradientUnits="userSpaceOnUse" x1="842" y1="0" x2="1004" y2="0"><stop offset="0.000" stop-color="#0089ff"/><stop offset="0.080" stop-color="#2283ff"/><stop offset="0.352" stop-color="#d66cff"/><stop offset="0.414" stop-color="#ff62f6"/><stop offset="0.568" stop-color="#ff339e"/><stop offset="0.840" stop-color="#ff0b53"/><stop offset="1.000" stop-color="#ff003a"/></linearGradient><linearGradient id="b227" gradientUnits="userSpaceOnUse" x1="841" y1="0" x2="999" y2="0"><stop offset="0.000" stop-color="#0083ff"/><stop offset="0.082" stop-color="#207dff"/><stop offset="0.361" stop-color="#d166ff"/><stop offset="0.430" stop-color="#ff5bf7"/><stop offset="0.595" stop-color="#ff2d9d"/><stop offset="0.880" stop-color="#ff0852"/><stop offset="1.000" stop-color="#ff0040"/></linearGradient><linearGradient id="b228" gradientUnits="userSpaceOnUse" x1="841" y1="0" x2="994" y2="0"><stop offset="0.000" stop-color="#007dff"/><stop offset="0.203" stop-color="#636eff"/><stop offset="0.444" stop-color="#ff55f7"/><stop offset="0.614" stop-color="#ff299e"/><stop offset="0.908" stop-color="#ff0553"/><stop offset="1.000" stop-color="#ff0045"/></linearGradient><linearGradient id="b229" gradientUnits="userSpaceOnUse" x1="840" y1="0" x2="989" y2="0"><stop offset="0.000" stop-color="#0078ff"/><stop offset="0.168" stop-color="#4b6cff"/><stop offset="0.463" stop-color="#ff4ef8"/><stop offset="0.638" stop-color="#ff259f"/><stop offset="0.946" stop-color="#ff0254"/><stop offset="1.000" stop-color="#ff004b"/></linearGradient><linearGradient id="b230" gradientUnits="userSpaceOnUse" x1="839" y1="0" x2="984" y2="0"><stop offset="0.000" stop-color="#0073ff"/><stop offset="0.131" stop-color="#346aff"/><stop offset="0.441" stop-color="#e84eff"/><stop offset="0.490" stop-color="#ff46f4"/><stop offset="0.676" stop-color="#ff1f9c"/><stop offset="1.000" stop-color="#ff0052"/></linearGradient><linearGradient id="b231" gradientUnits="userSpaceOnUse" x1="838" y1="0" x2="979" y2="0"><stop offset="0.000" stop-color="#006eff"/><stop offset="0.113" stop-color="#2966ff"/><stop offset="0.447" stop-color="#df49ff"/><stop offset="0.511" stop-color="#ff40f5"/><stop offset="0.702" stop-color="#ff1b9d"/><stop offset="1.000" stop-color="#ff0058"/></linearGradient><linearGradient id="b232" gradientUnits="userSpaceOnUse" x1="837" y1="0" x2="974" y2="0"><stop offset="0.000" stop-color="#0069ff"/><stop offset="0.117" stop-color="#2861ff"/><stop offset="0.460" stop-color="#da44ff"/><stop offset="0.533" stop-color="#ff3af6"/><stop offset="0.737" stop-color="#ff169c"/><stop offset="1.000" stop-color="#ff0060"/></linearGradient><linearGradient id="b233" gradientUnits="userSpaceOnUse" x1="837" y1="0" x2="968" y2="0"><stop offset="0.000" stop-color="#0064ff"/><stop offset="0.267" stop-color="#6a51ff"/><stop offset="0.550" stop-color="#ff36fb"/><stop offset="0.756" stop-color="#ff14a2"/><stop offset="1.000" stop-color="#ff0068"/></linearGradient><linearGradient id="b234" gradientUnits="userSpaceOnUse" x1="836" y1="0" x2="963" y2="0"><stop offset="0.000" stop-color="#005fff"/><stop offset="0.252" stop-color="#5d4eff"/><stop offset="0.583" stop-color="#ff2ff7"/><stop offset="0.803" stop-color="#ff0e9e"/><stop offset="1.000" stop-color="#ff0071"/></linearGradient><linearGradient id="b235" gradientUnits="userSpaceOnUse" x1="835" y1="0" x2="958" y2="0"><stop offset="0.000" stop-color="#005bff"/><stop offset="0.203" stop-color="#444dff"/><stop offset="0.585" stop-color="#f92dff"/><stop offset="0.862" stop-color="#ff0899"/><stop offset="1.000" stop-color="#ff007a"/></linearGradient><linearGradient id="b236" gradientUnits="userSpaceOnUse" x1="834" y1="0" x2="953" y2="0"><stop offset="0.000" stop-color="#0056ff"/><stop offset="0.176" stop-color="#354bff"/><stop offset="0.588" stop-color="#eb2aff"/><stop offset="0.647" stop-color="#ff23f4"/><stop offset="0.891" stop-color="#ff069c"/><stop offset="1.000" stop-color="#ff0083"/></linearGradient><linearGradient id="b237" gradientUnits="userSpaceOnUse" x1="833" y1="0" x2="948" y2="0"><stop offset="0.000" stop-color="#0052ff"/><stop offset="0.165" stop-color="#2e48ff"/><stop offset="0.600" stop-color="#e226ff"/><stop offset="0.678" stop-color="#ff1ef5"/><stop offset="0.939" stop-color="#ff029b"/><stop offset="1.000" stop-color="#ff008d"/></linearGradient><linearGradient id="b238" gradientUnits="userSpaceOnUse" x1="833" y1="0" x2="943" y2="0"><stop offset="0.000" stop-color="#004dff"/><stop offset="0.355" stop-color="#7037ff"/><stop offset="0.700" stop-color="#ff1afa"/><stop offset="0.964" stop-color="#ff00a1"/><stop offset="1.000" stop-color="#ff0098"/></linearGradient><linearGradient id="b239" gradientUnits="userSpaceOnUse" x1="832" y1="0" x2="937" y2="0"><stop offset="0.000" stop-color="#0049ff"/><stop offset="0.352" stop-color="#6734ff"/><stop offset="0.743" stop-color="#ff15fa"/><stop offset="1.000" stop-color="#ff00a6"/></linearGradient><linearGradient id="b240" gradientUnits="userSpaceOnUse" x1="831" y1="0" x2="932" y2="0"><stop offset="0.000" stop-color="#0045ff"/><stop offset="0.317" stop-color="#5533ff"/><stop offset="0.782" stop-color="#ff10fb"/><stop offset="1.000" stop-color="#ff00b3"/></linearGradient><linearGradient id="b241" gradientUnits="userSpaceOnUse" x1="830" y1="0" x2="927" y2="0"><stop offset="0.000" stop-color="#0042ff"/><stop offset="0.278" stop-color="#4432ff"/><stop offset="0.804" stop-color="#fa0dff"/><stop offset="1.000" stop-color="#ff00c2"/></linearGradient><linearGradient id="b242" gradientUnits="userSpaceOnUse" x1="829" y1="0" x2="922" y2="0"><stop offset="0.000" stop-color="#003eff"/><stop offset="0.247" stop-color="#3631ff"/><stop offset="0.817" stop-color="#ed0bff"/><stop offset="0.903" stop-color="#ff04f0"/><stop offset="1.000" stop-color="#ff00d1"/></linearGradient><linearGradient id="b243" gradientUnits="userSpaceOnUse" x1="829" y1="0" x2="917" y2="0"><stop offset="0.000" stop-color="#003aff"/><stop offset="0.489" stop-color="#7520ff"/><stop offset="0.932" stop-color="#ff01f9"/><stop offset="1.000" stop-color="#ff00e3"/></linearGradient><linearGradient id="b244" gradientUnits="userSpaceOnUse" x1="828" y1="0" x2="912" y2="0"><stop offset="0.000" stop-color="#0036ff"/><stop offset="0.488" stop-color="#6d1dff"/><stop offset="0.988" stop-color="#ff00f9"/><stop offset="1.000" stop-color="#ff00f5"/></linearGradient><linearGradient id="b245" gradientUnits="userSpaceOnUse" x1="827" y1="0" x2="906" y2="0"><stop offset="0.000" stop-color="#0033ff"/><stop offset="0.481" stop-color="#611cff"/><stop offset="1.000" stop-color="#f000ff"/></linearGradient><linearGradient id="b246" gradientUnits="userSpaceOnUse" x1="826" y1="0" x2="901" y2="0"><stop offset="0.000" stop-color="#002fff"/><stop offset="0.440" stop-color="#511cff"/><stop offset="1.000" stop-color="#dd00ff"/></linearGradient><linearGradient id="b247" gradientUnits="userSpaceOnUse" x1="826" y1="0" x2="896" y2="0"><stop offset="0.000" stop-color="#002bff"/><stop offset="0.686" stop-color="#800dff"/><stop offset="1.000" stop-color="#ca00ff"/></linearGradient><linearGradient id="b248" gradientUnits="userSpaceOnUse" x1="825" y1="0" x2="891" y2="0"><stop offset="0.000" stop-color="#0028ff"/><stop offset="0.697" stop-color="#770bff"/><stop offset="1.000" stop-color="#b800ff"/></linearGradient><linearGradient id="b249" gradientUnits="userSpaceOnUse" x1="824" y1="0" x2="886" y2="0"><stop offset="0.000" stop-color="#0025ff"/><stop offset="0.726" stop-color="#7209ff"/><stop offset="1.000" stop-color="#a800ff"/></linearGradient><linearGradient id="b250" gradientUnits="userSpaceOnUse" x1="823" y1="0" x2="881" y2="0"><stop offset="0.000" stop-color="#0022ff"/><stop offset="0.741" stop-color="#6a07ff"/><stop offset="1.000" stop-color="#9800ff"/></linearGradient><linearGradient id="b251" gradientUnits="userSpaceOnUse" x1="822" y1="0" x2="875" y2="0"><stop offset="0.000" stop-color="#001fff"/><stop offset="0.755" stop-color="#5f06ff"/><stop offset="1.000" stop-color="#8600ff"/></linearGradient><linearGradient id="b252" gradientUnits="userSpaceOnUse" x1="822" y1="0" x2="870" y2="0"><stop offset="0.000" stop-color="#001bff"/><stop offset="1.000" stop-color="#7800ff"/></linearGradient><linearGradient id="b253" gradientUnits="userSpaceOnUse" x1="821" y1="0" x2="865" y2="0"><stop offset="0.000" stop-color="#0019ff"/><stop offset="1.000" stop-color="#6a00ff"/></linearGradient><linearGradient id="b254" gradientUnits="userSpaceOnUse" x1="820" y1="0" x2="860" y2="0"><stop offset="0.000" stop-color="#0016ff"/><stop offset="1.000" stop-color="#5d00ff"/></linearGradient><linearGradient id="b255" gradientUnits="userSpaceOnUse" x1="819" y1="0" x2="855" y2="0"><stop offset="0.000" stop-color="#0013ff"/><stop offset="1.000" stop-color="#5100ff"/></linearGradient><linearGradient id="b256" gradientUnits="userSpaceOnUse" x1="818" y1="0" x2="850" y2="0"><stop offset="0.000" stop-color="#0010ff"/><stop offset="1.000" stop-color="#4500ff"/></linearGradient><linearGradient id="b257" gradientUnits="userSpaceOnUse" x1="818" y1="0" x2="844" y2="0"><stop offset="0.000" stop-color="#000dff"/><stop offset="1.000" stop-color="#3700ff"/></linearGradient><linearGradient id="b258" gradientUnits="userSpaceOnUse" x1="817" y1="0" x2="839" y2="0"><stop offset="0.000" stop-color="#000aff"/><stop offset="1.000" stop-color="#2c00ff"/></linearGradient><linearGradient id="b259" gradientUnits="userSpaceOnUse" x1="816" y1="0" x2="834" y2="0"><stop offset="0.000" stop-color="#0008ff"/><stop offset="1.000" stop-color="#2200ff"/></linearGradient><linearGradient id="b260" gradientUnits="userSpaceOnUse" x1="815" y1="0" x2="829" y2="0"><stop offset="0.000" stop-color="#0005ff"/><stop offset="1.000" stop-color="#1800ff"/></linearGradient><linearGradient id="b261" gradientUnits="userSpaceOnUse" x1="814" y1="0" x2="824" y2="0"><stop offset="0.000" stop-color="#0003ff"/><stop offset="1.000" stop-color="#0f00ff"/></linearGradient><clipPath id="hs"><path d="M830.0 354.9 L829.9 354.9 L829.8 354.9 L829.7 354.9 L829.6 355.0 L829.5 355.0 L829.5 355.0 L829.4 355.0 L829.3 355.0 L829.2 355.0 L829.1 355.0 L829.0 355.0 L828.9 354.9 L828.8 354.9 L828.6 354.9 L828.5 354.9 L828.4 354.8 L828.3 354.8 L828.2 354.7 L828.0 354.7 L827.9 354.6 L827.8 354.5 L827.6 354.4 L827.5 354.4 L827.3 354.3 L827.1 354.2 L827.0 354.1 L826.7 353.9 L826.5 353.8 L826.3 353.7 L826.1 353.5 L825.8 353.4 L825.6 353.2 L825.3 353.0 L825.0 352.8 L824.7 352.6 L824.4 352.4 L824.1 352.2 L823.7 352.0 L823.3 351.8 L822.9 351.5 L822.5 351.3 L822.0 351.0 L821.5 350.7 L821.0 350.4 L820.5 350.1 L819.9 349.7 L819.3 349.4 L818.7 349.0 L818.1 348.6 L817.4 348.2 L816.7 347.7 L816.0 347.2 L815.3 346.7 L814.5 346.1 L813.6 345.5 L812.8 344.8 L811.9 344.2 L811.0 343.4 L810.1 342.6 L809.0 341.6 L807.9 340.5 L806.8 339.3 L805.5 338.0 L804.2 336.5 L802.9 334.8 L801.4 332.9 L799.9 331.0 L798.4 328.8 L796.7 326.4 L795.0 323.7 L793.2 320.8 L791.3 317.6 L789.3 314.2 L787.3 310.4 L785.1 306.2 L782.8 301.8 L780.4 297.0 L777.9 291.8 L775.3 286.3 L772.8 280.3 L770.3 273.9 L767.8 267.1 L765.2 259.9 L762.7 252.3 L760.2 244.4 L757.7 236.1 L755.2 227.3 L752.8 218.1 L750.5 208.9 L748.3 199.6 L746.4 190.1 L744.5 180.5 L742.8 170.7 L741.3 161.1 L740.0 151.7 L739.1 142.4 L738.3 133.3 L737.8 124.3 L737.6 115.6 L737.7 107.3 L738.2 99.3 L738.9 91.6 L740.0 84.2 L741.4 77.3 L743.1 71.0 L745.2 65.2 L747.7 59.9 L750.5 55.1 L753.5 51.0 L756.7 47.4 L760.1 44.6 L763.8 42.5 L767.7 40.9 L771.8 39.8 L775.9 39.1 L780.0 38.9 L784.3 39.2 L788.7 40.0 L793.1 40.9 L797.5 42.0 L801.9 43.2 L806.3 44.7 L810.7 46.3 L815.1 48.0 L819.4 49.8 L823.7 51.5 L827.9 53.3 L832.0 55.2 L836.1 57.1 L840.2 59.0 L844.2 61.0 L848.2 63.0 L852.1 65.1 L856.1 67.2 L860.0 69.4 L864.0 71.6 L867.9 73.9 L871.8 76.2 L875.8 78.5 L879.7 80.8 L883.6 83.2 L887.4 85.6 L891.3 88.1 L895.2 90.5 L899.1 93.0 L902.9 95.5 L906.8 98.1 L910.7 100.6 L914.5 103.2 L918.4 105.8 L922.3 108.4 L926.2 111.0 L930.1 113.6 L933.9 116.2 L937.8 118.9 L941.7 121.5 L945.6 124.2 L949.4 126.8 L953.3 129.5 L957.1 132.2 L961.0 134.8 L964.8 137.5 L968.7 140.2 L972.5 142.8 L976.3 145.5 L980.1 148.1 L983.9 150.7 L987.6 153.4 L991.4 156.0 L995.1 158.6 L998.8 161.2 L1002.5 163.8 L1006.1 166.3 L1009.8 168.9 L1013.4 171.4 L1016.9 173.9 L1020.5 176.4 L1024.0 178.8 L1027.5 181.3 L1030.9 183.7 L1034.3 186.0 L1037.6 188.4 L1040.9 190.7 L1044.2 193.0 L1047.4 195.2 L1050.5 197.4 L1053.6 199.5 L1056.6 201.7 L1059.5 203.7 L1062.4 205.7 L1065.1 207.7 L1067.8 209.5 L1070.4 211.4 L1073.0 213.1 L1075.4 214.9 L1077.9 216.6 L1080.2 218.2 L1082.5 219.9 L1084.8 221.4 L1086.9 222.9 L1089.0 224.4 L1091.0 225.7 L1092.9 227.0 L1094.7 228.3 L1096.5 229.5 L1098.2 230.7 L1099.8 231.9 L1101.3 233.0 L1102.8 234.0 L1104.2 235.0 L1105.6 235.9 L1106.9 236.9 L1108.1 237.7 L1109.3 238.5 L1110.4 239.3 L1111.5 240.1 L1112.5 240.8 L1113.5 241.5 L1114.4 242.1 L1115.3 242.8 L1116.1 243.3 L1116.9 243.9 L1117.6 244.4 L1118.4 244.9 L1119.3 245.5 L1120.4 246.3 L1121.6 247.2 L1123.0 248.1 L1124.2 249.0 L1125.3 249.8 L1126.2 250.4 L1127.1 251.0 L1127.8 251.5 L1128.5 252.0 L1129.1 252.4 L1129.6 252.8 L1130.1 253.1 L1130.5 253.4 L1130.9 253.7 L1131.3 253.9 L1131.7 254.2 L1132.1 254.5 L1132.5 254.8 L1132.8 255.0 L1133.1 255.2 L1133.3 255.4 L1133.5 255.5 L1133.6 255.6 L1133.7 255.7 L1133.8 255.7 Z"/></clipPath><clipPath id="tri"><path d="M1082.48 231.07 L898.20 128.20 L816.90 333.94 Z"/></clipPath></defs>
<rect width="1200" height="541" fill="#303030"/>
<text x="18.1" y="40.9" font-size="27.5" fill="#eeeeee" textLength="168.3" lengthAdjust="spacingAndGlyphs">ColorChecker</text>
<text x="64.0" y="76.4" font-size="19.6" fill="#eeeeee" textLength="167.0" lengthAdjust="spacingAndGlyphs">Avg dE2000: 3.06</text>
<text x="75.8" y="103.5" font-size="19.6" fill="#eeeeee" textLength="143.7" lengthAdjust="spacingAndGlyphs">Max dE2000: 5</text>
<text x="114.7" y="127.6" font-size="11.4" fill="#d8d8d8" textLength="56.7" lengthAdjust="spacingAndGlyphs">DeltaE 2000</text>
<rect x="14.50" y="130.50" width="255.00" height="237.00" fill="#252525"/>
<line x1="48.50" y1="130.50" x2="48.50" y2="367.50" stroke="#7e7e7e" stroke-width="1"/>
<line x1="82.50" y1="130.50" x2="82.50" y2="367.50" stroke="#7e7e7e" stroke-width="1"/>
<line x1="116.50" y1="130.50" x2="116.50" y2="367.50" stroke="#7e7e7e" stroke-width="1"/>
<line x1="150.50" y1="130.50" x2="150.50" y2="367.50" stroke="#7e7e7e" stroke-width="1"/>
<line x1="219.50" y1="130.50" x2="219.50" y2="367.50" stroke="#7e7e7e" stroke-width="1"/>
<line x1="253.50" y1="130.50" x2="253.50" y2="367.50" stroke="#7e7e7e" stroke-width="1"/>
<line x1="185.50" y1="130.50" x2="185.50" y2="367.50" stroke="#c83030" stroke-width="1.2"/>
<rect x="14.50" y="131.10" width="49.43" height="8.80" fill="#000"/>
<rect x="15.10" y="132.00" width="47.73" height="7.00" fill="url(#bg0)"/>
<rect x="14.50" y="140.97" width="37.16" height="8.80" fill="#000"/>
<rect x="15.10" y="141.88" width="35.46" height="7.00" fill="url(#bg1)"/>
<rect x="14.50" y="150.85" width="63.24" height="8.80" fill="#000"/>
<rect x="15.10" y="151.75" width="61.54" height="7.00" fill="url(#bg2)"/>
<rect x="14.50" y="160.72" width="51.31" height="8.80" fill="#000"/>
<rect x="15.10" y="161.62" width="49.61" height="7.00" fill="url(#bg3)"/>
<rect x="14.50" y="170.60" width="64.27" height="8.80" fill="#000"/>
<rect x="15.10" y="171.50" width="62.57" height="7.00" fill="url(#bg4)"/>
<rect x="14.50" y="180.47" width="58.98" height="8.80" fill="#000"/>
<rect x="15.10" y="181.38" width="57.28" height="7.00" fill="url(#bg5)"/>
<rect x="14.50" y="190.35" width="75.35" height="8.80" fill="#000"/>
<rect x="15.10" y="191.25" width="73.65" height="7.00" fill="url(#bg6)"/>
<rect x="14.50" y="200.22" width="64.95" height="8.80" fill="#000"/>
<rect x="15.10" y="201.12" width="63.25" height="7.00" fill="url(#bg7)"/>
<rect x="14.50" y="210.10" width="46.88" height="8.80" fill="#000"/>
<rect x="15.10" y="211.00" width="45.18" height="7.00" fill="url(#bg8)"/>
<rect x="14.50" y="219.97" width="43.47" height="8.80" fill="#000"/>
<rect x="15.10" y="220.88" width="41.77" height="7.00" fill="url(#bg9)"/>
<rect x="14.50" y="229.85" width="72.28" height="8.80" fill="#000"/>
<rect x="15.10" y="230.75" width="70.58" height="7.00" fill="url(#bg10)"/>
<rect x="14.50" y="239.72" width="54.89" height="8.80" fill="#000"/>
<rect x="15.10" y="240.62" width="53.19" height="7.00" fill="url(#bg11)"/>
<rect x="14.50" y="249.60" width="85.75" height="8.80" fill="#000"/>
<rect x="15.10" y="250.50" width="84.05" height="7.00" fill="url(#bg12)"/>
<rect x="14.50" y="259.48" width="61.54" height="8.80" fill="#000"/>
<rect x="15.10" y="260.38" width="59.84" height="7.00" fill="url(#bg13)"/>
<rect x="14.50" y="269.35" width="52.67" height="8.80" fill="#000"/>
<rect x="15.10" y="270.25" width="50.97" height="7.00" fill="url(#bg14)"/>
<rect x="14.50" y="279.23" width="71.43" height="8.80" fill="#000"/>
<rect x="15.10" y="280.12" width="69.73" height="7.00" fill="url(#bg15)"/>
<rect x="14.50" y="289.10" width="42.10" height="8.80" fill="#000"/>
<rect x="15.10" y="290.00" width="40.40" height="7.00" fill="url(#bg16)"/>
<rect x="14.50" y="298.98" width="27.61" height="8.80" fill="#000"/>
<rect x="15.10" y="299.88" width="25.91" height="7.00" fill="url(#bg17)"/>
<rect x="14.50" y="308.85" width="12.61" height="8.80" fill="#000"/>
<rect x="15.10" y="309.75" width="10.91" height="7.00" fill="url(#bg18)"/>
<rect x="14.50" y="318.73" width="27.27" height="8.80" fill="#000"/>
<rect x="15.10" y="319.62" width="25.57" height="7.00" fill="url(#bg19)"/>
<rect x="14.50" y="328.60" width="31.53" height="8.80" fill="#000"/>
<rect x="15.10" y="329.50" width="29.83" height="7.00" fill="url(#bg20)"/>
<rect x="14.50" y="338.48" width="34.77" height="8.80" fill="#000"/>
<rect x="15.10" y="339.38" width="33.07" height="7.00" fill="url(#bg21)"/>
<rect x="14.50" y="348.35" width="39.03" height="8.80" fill="#000"/>
<rect x="15.10" y="349.25" width="37.33" height="7.00" fill="url(#bg22)"/>
<rect x="14.50" y="358.23" width="54.38" height="8.80" fill="#000"/>
<rect x="15.10" y="359.12" width="52.68" height="7.00" fill="url(#bg23)"/>
<line x1="31.50" y1="130.50" x2="31.50" y2="367.50" stroke="#1d7f24" stroke-width="1.1"/>
<line x1="66.50" y1="130.50" x2="66.50" y2="367.50" stroke="#dcdc58" stroke-width="1.3"/>
<line x1="14.50" y1="130.50" x2="269.50" y2="130.50" stroke="#a8a8a8" stroke-width="1"/>
<line x1="833.00" y1="0.50" x2="1062.00" y2="0.50" stroke="#666666" stroke-width="1"/>
<rect x="836.00" y="0.00" width="4.00" height="1.50" fill="#c8cc70"/>
<rect x="931.00" y="0.00" width="4.00" height="1.50" fill="#c8cc70"/>
<rect x="1026.00" y="0.00" width="4.00" height="1.50" fill="#c8cc70"/>
<line x1="15.50" y1="130.50" x2="15.50" y2="367.50" stroke="#a8a8a8" stroke-width="1"/>
<line x1="14.50" y1="367.50" x2="269.50" y2="367.50" stroke="#a8a8a8" stroke-width="1"/>
<line x1="14.50" y1="367.50" x2="14.50" y2="371.50" stroke="#a8a8a8" stroke-width="1"/>
<text x="14.5" y="383.1" font-size="11.2" fill="#d8d8d8" text-anchor="middle">0</text>
<line x1="48.60" y1="367.50" x2="48.60" y2="371.50" stroke="#a8a8a8" stroke-width="1"/>
<text x="48.6" y="383.1" font-size="11.2" fill="#d8d8d8" text-anchor="middle">2</text>
<line x1="82.70" y1="367.50" x2="82.70" y2="371.50" stroke="#a8a8a8" stroke-width="1"/>
<text x="82.7" y="383.1" font-size="11.2" fill="#d8d8d8" text-anchor="middle">4</text>
<line x1="116.80" y1="367.50" x2="116.80" y2="371.50" stroke="#a8a8a8" stroke-width="1"/>
<text x="116.8" y="383.1" font-size="11.2" fill="#d8d8d8" text-anchor="middle">6</text>
<line x1="150.90" y1="367.50" x2="150.90" y2="371.50" stroke="#a8a8a8" stroke-width="1"/>
<text x="150.9" y="383.1" font-size="11.2" fill="#d8d8d8" text-anchor="middle">8</text>
<line x1="185.00" y1="367.50" x2="185.00" y2="371.50" stroke="#a8a8a8" stroke-width="1"/>
<text x="185.0" y="383.1" font-size="11.2" fill="#d8d8d8" text-anchor="middle">10</text>
<line x1="219.10" y1="367.50" x2="219.10" y2="371.50" stroke="#a8a8a8" stroke-width="1"/>
<text x="219.1" y="383.1" font-size="11.2" fill="#d8d8d8" text-anchor="middle">12</text>
<line x1="253.20" y1="367.50" x2="253.20" y2="371.50" stroke="#a8a8a8" stroke-width="1"/>
<text x="253.2" y="383.1" font-size="11.2" fill="#d8d8d8" text-anchor="middle">14</text>
<text x="11.3" y="419.6" font-size="20.7" fill="#eeeeee" textLength="156.7" lengthAdjust="spacingAndGlyphs">Current Reading</text>
<text x="11.3" y="447.0" font-size="17" fill="#eeeeee" textLength="63.1" lengthAdjust="spacingAndGlyphs">x: 0.309</text>
<text x="11.3" y="473.8" font-size="17" fill="#eeeeee" textLength="73.0" lengthAdjust="spacingAndGlyphs">y: 0.3295</text>
<text x="11.3" y="501.4" font-size="17" fill="#eeeeee" textLength="78.9" lengthAdjust="spacingAndGlyphs">fL: 33.254</text>
<text x="11.3" y="528.8" font-size="17" fill="#eeeeee" textLength="124.1" lengthAdjust="spacingAndGlyphs">cd/m²: 113.936</text>
<rect x="302.50" y="31.50" width="105.00" height="222.80" fill="#252525"/>
<line x1="302.50" y1="87.50" x2="407.50" y2="87.50" stroke="#7e7e7e" stroke-width="1"/>
<line x1="302.50" y1="199.50" x2="407.50" y2="199.50" stroke="#7e7e7e" stroke-width="1"/>
<line x1="302.50" y1="143.50" x2="407.50" y2="143.50" stroke="#7e7e7e" stroke-width="1"/>
<line x1="312.50" y1="143.50" x2="397.50" y2="143.50" stroke="#080808" stroke-width="1.3"/>
<line x1="302.50" y1="115.50" x2="407.50" y2="115.50" stroke="#2e962e" stroke-width="1.2"/>
<line x1="302.50" y1="171.50" x2="407.50" y2="171.50" stroke="#2e962e" stroke-width="1.2"/>
<line x1="302.50" y1="59.50" x2="407.50" y2="59.50" stroke="#e0e048" stroke-width="1.3"/>
<line x1="302.50" y1="227.50" x2="407.50" y2="227.50" stroke="#e0e048" stroke-width="1.3"/>
<rect x="302.50" y="31.5" width="105.00" height="223" fill="none" stroke="#a8a8a8" stroke-width="1"/>
<line x1="298.50" y1="31.50" x2="302.50" y2="31.50" stroke="#a8a8a8" stroke-width="1"/>
<text x="298.5" y="35.5" font-size="11.2" fill="#d8d8d8" text-anchor="end">4</text>
<line x1="298.50" y1="59.50" x2="302.50" y2="59.50" stroke="#a8a8a8" stroke-width="1"/>
<text x="298.5" y="63.3" font-size="11.2" fill="#d8d8d8" text-anchor="end">3</text>
<line x1="298.50" y1="87.50" x2="302.50" y2="87.50" stroke="#a8a8a8" stroke-width="1"/>
<text x="298.5" y="91.2" font-size="11.2" fill="#d8d8d8" text-anchor="end">2</text>
<line x1="298.50" y1="115.50" x2="302.50" y2="115.50" stroke="#a8a8a8" stroke-width="1"/>
<text x="298.5" y="119.1" font-size="11.2" fill="#d8d8d8" text-anchor="end">1</text>
<line x1="298.50" y1="143.50" x2="302.50" y2="143.50" stroke="#a8a8a8" stroke-width="1"/>
<text x="298.5" y="146.9" font-size="11.2" fill="#d8d8d8" text-anchor="end">0</text>
<line x1="298.50" y1="171.50" x2="302.50" y2="171.50" stroke="#a8a8a8" stroke-width="1"/>
<text x="298.5" y="174.8" font-size="11.2" fill="#d8d8d8" text-anchor="end">-1</text>
<line x1="298.50" y1="199.50" x2="302.50" y2="199.50" stroke="#a8a8a8" stroke-width="1"/>
<text x="298.5" y="202.6" font-size="11.2" fill="#d8d8d8" text-anchor="end">-2</text>
<line x1="298.50" y1="227.50" x2="302.50" y2="227.50" stroke="#a8a8a8" stroke-width="1"/>
<text x="298.5" y="230.5" font-size="11.2" fill="#d8d8d8" text-anchor="end">-3</text>
<line x1="298.50" y1="254.50" x2="302.50" y2="254.50" stroke="#a8a8a8" stroke-width="1"/>
<text x="298.5" y="258.3" font-size="11.2" fill="#d8d8d8" text-anchor="end">-4</text>
<text x="348.6" y="28.7" font-size="11.2" fill="#d8d8d8" textLength="30.1" lengthAdjust="spacingAndGlyphs" text-anchor="middle">DeltaL</text>
<rect x="439.50" y="31.50" width="105.00" height="222.80" fill="#252525"/>
<line x1="439.50" y1="87.50" x2="544.50" y2="87.50" stroke="#7e7e7e" stroke-width="1"/>
<line x1="439.50" y1="199.50" x2="544.50" y2="199.50" stroke="#7e7e7e" stroke-width="1"/>
<line x1="439.50" y1="143.50" x2="544.50" y2="143.50" stroke="#7e7e7e" stroke-width="1"/>
<rect x="450.50" y="79.30" width="82.60" height="64.50" fill="url(#dc)" stroke="#111" stroke-width="1"/>
<line x1="439.50" y1="115.50" x2="544.50" y2="115.50" stroke="#2e962e" stroke-width="1.2"/>
<line x1="439.50" y1="171.50" x2="544.50" y2="171.50" stroke="#2e962e" stroke-width="1.2"/>
<line x1="439.50" y1="59.50" x2="544.50" y2="59.50" stroke="#e0e048" stroke-width="1.3"/>
<line x1="439.50" y1="227.50" x2="544.50" y2="227.50" stroke="#e0e048" stroke-width="1.3"/>
<rect x="439.50" y="31.5" width="105.00" height="223" fill="none" stroke="#a8a8a8" stroke-width="1"/>
<line x1="435.50" y1="31.50" x2="439.50" y2="31.50" stroke="#a8a8a8" stroke-width="1"/>
<text x="435.5" y="35.5" font-size="11.2" fill="#d8d8d8" text-anchor="end">4</text>
<line x1="435.50" y1="59.50" x2="439.50" y2="59.50" stroke="#a8a8a8" stroke-width="1"/>
<text x="435.5" y="63.3" font-size="11.2" fill="#d8d8d8" text-anchor="end">3</text>
<line x1="435.50" y1="87.50" x2="439.50" y2="87.50" stroke="#a8a8a8" stroke-width="1"/>
<text x="435.5" y="91.2" font-size="11.2" fill="#d8d8d8" text-anchor="end">2</text>
<line x1="435.50" y1="115.50" x2="439.50" y2="115.50" stroke="#a8a8a8" stroke-width="1"/>
<text x="435.5" y="119.1" font-size="11.2" fill="#d8d8d8" text-anchor="end">1</text>
<line x1="435.50" y1="143.50" x2="439.50" y2="143.50" stroke="#a8a8a8" stroke-width="1"/>
<text x="435.5" y="146.9" font-size="11.2" fill="#d8d8d8" text-anchor="end">0</text>
<line x1="435.50" y1="171.50" x2="439.50" y2="171.50" stroke="#a8a8a8" stroke-width="1"/>
<text x="435.5" y="174.8" font-size="11.2" fill="#d8d8d8" text-anchor="end">-1</text>
<line x1="435.50" y1="199.50" x2="439.50" y2="199.50" stroke="#a8a8a8" stroke-width="1"/>
<text x="435.5" y="202.6" font-size="11.2" fill="#d8d8d8" text-anchor="end">-2</text>
<line x1="435.50" y1="227.50" x2="439.50" y2="227.50" stroke="#a8a8a8" stroke-width="1"/>
<text x="435.5" y="230.5" font-size="11.2" fill="#d8d8d8" text-anchor="end">-3</text>
<line x1="435.50" y1="254.50" x2="439.50" y2="254.50" stroke="#a8a8a8" stroke-width="1"/>
<text x="435.5" y="258.3" font-size="11.2" fill="#d8d8d8" text-anchor="end">-4</text>
<text x="485.5" y="28.7" font-size="11.2" fill="#d8d8d8" textLength="31.8" lengthAdjust="spacingAndGlyphs" text-anchor="middle">DeltaC</text>
<rect x="576.50" y="31.50" width="114.00" height="222.80" fill="#252525"/>
<line x1="576.50" y1="87.50" x2="690.50" y2="87.50" stroke="#7e7e7e" stroke-width="1"/>
<line x1="576.50" y1="199.50" x2="690.50" y2="199.50" stroke="#7e7e7e" stroke-width="1"/>
<line x1="576.50" y1="143.50" x2="690.50" y2="143.50" stroke="#7e7e7e" stroke-width="1"/>
<line x1="586.50" y1="143.50" x2="680.50" y2="143.50" stroke="#080808" stroke-width="1.3"/>
<line x1="576.50" y1="115.50" x2="690.50" y2="115.50" stroke="#2e962e" stroke-width="1.2"/>
<line x1="576.50" y1="171.50" x2="690.50" y2="171.50" stroke="#2e962e" stroke-width="1.2"/>
<line x1="576.50" y1="59.50" x2="690.50" y2="59.50" stroke="#e0e048" stroke-width="1.3"/>
<line x1="576.50" y1="227.50" x2="690.50" y2="227.50" stroke="#e0e048" stroke-width="1.3"/>
<rect x="576.50" y="31.5" width="114.00" height="223" fill="none" stroke="#a8a8a8" stroke-width="1"/>
<line x1="572.50" y1="31.50" x2="576.50" y2="31.50" stroke="#a8a8a8" stroke-width="1"/>
<text x="572.5" y="35.5" font-size="11.2" fill="#d8d8d8" text-anchor="end">4</text>
<line x1="572.50" y1="59.50" x2="576.50" y2="59.50" stroke="#a8a8a8" stroke-width="1"/>
<text x="572.5" y="63.3" font-size="11.2" fill="#d8d8d8" text-anchor="end">3</text>
<line x1="572.50" y1="87.50" x2="576.50" y2="87.50" stroke="#a8a8a8" stroke-width="1"/>
<text x="572.5" y="91.2" font-size="11.2" fill="#d8d8d8" text-anchor="end">2</text>
<line x1="572.50" y1="115.50" x2="576.50" y2="115.50" stroke="#a8a8a8" stroke-width="1"/>
<text x="572.5" y="119.1" font-size="11.2" fill="#d8d8d8" text-anchor="end">1</text>
<line x1="572.50" y1="143.50" x2="576.50" y2="143.50" stroke="#a8a8a8" stroke-width="1"/>
<text x="572.5" y="146.9" font-size="11.2" fill="#d8d8d8" text-anchor="end">0</text>
<line x1="572.50" y1="171.50" x2="576.50" y2="171.50" stroke="#a8a8a8" stroke-width="1"/>
<text x="572.5" y="174.8" font-size="11.2" fill="#d8d8d8" text-anchor="end">-1</text>
<line x1="572.50" y1="199.50" x2="576.50" y2="199.50" stroke="#a8a8a8" stroke-width="1"/>
<text x="572.5" y="202.6" font-size="11.2" fill="#d8d8d8" text-anchor="end">-2</text>
<line x1="572.50" y1="227.50" x2="576.50" y2="227.50" stroke="#a8a8a8" stroke-width="1"/>
<text x="572.5" y="230.5" font-size="11.2" fill="#d8d8d8" text-anchor="end">-3</text>
<line x1="572.50" y1="254.50" x2="576.50" y2="254.50" stroke="#a8a8a8" stroke-width="1"/>
<text x="572.5" y="258.3" font-size="11.2" fill="#d8d8d8" text-anchor="end">-4</text>
<text x="627.0" y="28.7" font-size="11.2" fill="#d8d8d8" textLength="31.8" lengthAdjust="spacingAndGlyphs" text-anchor="middle">DeltaH</text>
<rect x="289.70" y="258.50" width="411.30" height="120.00" fill="#000"/>
<g clip-path="url(#swc)">
<rect x="303.50" y="263.80" width="41.40" height="39.60" fill="#f4fbfd" stroke="#bdbdbd" stroke-width="1"/>
<rect x="303.50" y="314.30" width="41.40" height="39.60" fill="#ffffff" stroke="#bdbdbd" stroke-width="1"/>
<text x="323.7" y="364.3" font-size="9.4" fill="#f0f0f0" text-anchor="middle">White</text>
<rect x="352.25" y="263.80" width="41.40" height="39.60" fill="#e2e5e6" stroke="#bdbdbd" stroke-width="1"/>
<rect x="352.25" y="314.30" width="41.40" height="39.60" fill="#dfdfdf" stroke="#bdbdbd" stroke-width="1"/>
<text x="372.4" y="364.3" font-size="9.4" fill="#f0f0f0" text-anchor="middle">Gray 80</text>
<rect x="401.00" y="263.80" width="41.40" height="39.60" fill="#d3d4d4" stroke="#bdbdbd" stroke-width="1"/>
<rect x="401.00" y="314.30" width="41.40" height="39.60" fill="#cfcfcf" stroke="#bdbdbd" stroke-width="1"/>
<text x="421.2" y="364.3" font-size="9.4" fill="#f0f0f0" text-anchor="middle">Gray 65</text>
<rect x="449.75" y="263.80" width="41.40" height="39.60" fill="#bebfbf" stroke="#bdbdbd" stroke-width="1"/>
<rect x="449.75" y="314.30" width="41.40" height="39.60" fill="#bbbbbb" stroke="#bdbdbd" stroke-width="1"/>
<text x="469.9" y="364.3" font-size="9.4" fill="#f0f0f0" text-anchor="middle">Gray 50</text>
<rect x="498.50" y="263.80" width="41.40" height="39.60" fill="#a2a3a4" stroke="#bdbdbd" stroke-width="1"/>
<rect x="498.50" y="314.30" width="41.40" height="39.60" fill="#a0a0a0" stroke="#bdbdbd" stroke-width="1"/>
<text x="518.7" y="364.3" font-size="9.4" fill="#f0f0f0" text-anchor="middle">Gray 35</text>
<rect x="547.25" y="263.80" width="41.40" height="39.60" fill="#050508" stroke="#bdbdbd" stroke-width="1"/>
<rect x="547.25" y="314.30" width="41.40" height="39.60" fill="#050505" stroke="#bdbdbd" stroke-width="1"/>
<text x="567.5" y="364.3" font-size="9.4" fill="#f0f0f0" text-anchor="middle">Black</text>
<rect x="596.00" y="263.80" width="41.40" height="39.60" fill="#7c5443" stroke="#bdbdbd" stroke-width="1"/>
<rect x="596.00" y="314.30" width="41.40" height="39.60" fill="#775546" stroke="#bdbdbd" stroke-width="1"/>
<text x="616.2" y="364.3" font-size="9.4" fill="#f0f0f0" text-anchor="middle">Dark Skin</text>
<rect x="644.75" y="263.80" width="41.40" height="39.60" fill="#c79a83" stroke="#bdbdbd" stroke-width="1"/>
<rect x="644.75" y="314.30" width="41.40" height="39.60" fill="#c39b88" stroke="#bdbdbd" stroke-width="1"/>
<text x="665.0" y="364.3" font-size="9.4" fill="#f0f0f0" text-anchor="middle">Light Skin</text>
<rect x="693.50" y="263.80" width="41.40" height="39.60" fill="#6b88b8" stroke="#bdbdbd" stroke-width="1"/>
<rect x="693.50" y="314.30" width="41.40" height="39.60" fill="#6888b8" stroke="#bdbdbd" stroke-width="1"/>
<text x="713.7" y="364.3" font-size="9.4" fill="#f0f0f0" text-anchor="middle">Blue Sky</text>
</g>
<text transform="translate(299.8,283.8) rotate(-90)" font-size="9.6" fill="#f0f0f0" text-anchor="middle" textLength="23.5" lengthAdjust="spacingAndGlyphs">Actual</text>
<text transform="translate(299.8,333.7) rotate(-90)" font-size="9.6" fill="#f0f0f0" text-anchor="middle" textLength="22.5" lengthAdjust="spacingAndGlyphs">Target</text>
<rect x="289.70" y="378.50" width="411.30" height="11.00" fill="#5a5a5a"/>
<rect x="290.50" y="379.50" width="9.50" height="9.00" fill="#6e6e6e"/>
<path d="M297.5 381 L292.5 384 L297.5 387 Z" fill="#2a2a2a"/>
<rect x="302.2" y="380" width="132" height="8" rx="4" fill="#474747" stroke="#525252" stroke-width="0.8"/>
<rect x="690.50" y="379.50" width="9.50" height="9.00" fill="#7a7a7a"/>
<path d="M692.5 381 L697.5 384 L692.5 387 Z" fill="#2a2a2a"/>
<rect x="710.40" y="14.70" width="489.60" height="365.80" fill="#000"/>
<rect x="715.00" y="19.80" width="479.30" height="355.70" fill="#333333"/>
<text x="955.1" y="31.5" font-size="10.2" fill="#d8d8d8" textLength="54.2" lengthAdjust="spacingAndGlyphs" text-anchor="middle">CIE 1931 xy</text>
<rect x="736.50" y="34.50" width="456.00" height="322.00" fill="#252525"/>
<g shape-rendering="crispEdges"><g clip-path="url(#hs)"><rect x="770" y="38" width="20" height="2" fill="url(#a0)"/><rect x="763" y="40" width="36" height="2" fill="url(#a1)"/><rect x="759" y="42" width="47" height="2" fill="url(#a2)"/><rect x="756" y="44" width="56" height="2" fill="url(#a3)"/><rect x="754" y="46" width="63" height="2" fill="url(#a4)"/><rect x="752" y="48" width="70" height="2" fill="url(#a5)"/><rect x="750" y="50" width="77" height="2" fill="url(#a6)"/><rect x="749" y="52" width="82" height="2" fill="url(#a7)"/><rect x="748" y="54" width="88" height="2" fill="url(#a8)"/><rect x="746" y="56" width="94" height="2" fill="url(#a9)"/><rect x="745" y="58" width="99" height="2" fill="url(#a10)"/><rect x="744" y="60" width="104" height="2" fill="url(#a11)"/><rect x="743" y="62" width="109" height="2" fill="url(#a12)"/><rect x="743" y="64" width="113" height="2" fill="url(#a13)"/><rect x="742" y="66" width="118" height="2" fill="url(#a14)"/><rect x="741" y="68" width="122" height="2" fill="url(#a15)"/><rect x="740" y="70" width="127" height="2" fill="url(#a16)"/><rect x="740" y="72" width="130" height="2" fill="url(#a17)"/><rect x="739" y="74" width="135" height="2" fill="url(#a18)"/><rect x="739" y="76" width="138" height="2" fill="url(#a19)"/><rect x="738" y="78" width="142" height="2" fill="url(#a20)"/><rect x="738" y="80" width="146" height="2" fill="url(#a21)"/><rect x="738" y="82" width="149" height="2" fill="url(#a22)"/><rect x="737" y="84" width="153" height="2" fill="url(#a23)"/><rect x="737" y="86" width="156" height="2" fill="url(#a24)"/><rect x="737" y="88" width="159" height="2" fill="url(#a25)"/><rect x="736" y="90" width="164" height="2" fill="url(#a26)"/><rect x="736" y="92" width="167" height="2" fill="url(#a27)"/><rect x="736" y="94" width="170" height="2" fill="url(#a28)"/><rect x="736" y="96" width="173" height="2" fill="url(#a29)"/><rect x="736" y="98" width="176" height="2" fill="url(#a30)"/><rect x="736" y="100" width="179" height="2" fill="url(#a31)"/><rect x="735" y="102" width="183" height="2" fill="url(#a32)"/><rect x="735" y="104" width="186" height="2" fill="url(#a33)"/><rect x="735" y="106" width="189" height="2" fill="url(#a34)"/><rect x="735" y="108" width="192" height="2" fill="url(#a35)"/><rect x="735" y="110" width="195" height="2" fill="url(#a36)"/><rect x="735" y="112" width="198" height="2" fill="url(#a37)"/><rect x="735" y="114" width="201" height="2" fill="url(#a38)"/><rect x="735" y="116" width="204" height="2" fill="url(#a39)"/><rect x="735" y="118" width="207" height="2" fill="url(#a40)"/><rect x="735" y="120" width="210" height="2" fill="url(#a41)"/><rect x="735" y="122" width="212" height="2" fill="url(#a42)"/><rect x="735" y="124" width="215" height="2" fill="url(#a43)"/><rect x="735" y="126" width="218" height="2" fill="url(#a44)"/><rect x="736" y="128" width="220" height="2" fill="url(#a45)"/><rect x="736" y="130" width="223" height="2" fill="url(#a46)"/><rect x="736" y="132" width="226" height="2" fill="url(#a47)"/><rect x="736" y="134" width="229" height="2" fill="url(#a48)"/><rect x="736" y="136" width="232" height="2" fill="url(#a49)"/><rect x="736" y="138" width="235" height="2" fill="url(#a50)"/><rect x="736" y="140" width="237" height="2" fill="url(#a51)"/><rect x="737" y="142" width="239" height="2" fill="url(#a52)"/><rect x="737" y="144" width="242" height="2" fill="url(#a53)"/><rect x="737" y="146" width="245" height="2" fill="url(#a54)"/><rect x="737" y="148" width="248" height="2" fill="url(#a55)"/><rect x="737" y="150" width="251" height="2" fill="url(#a56)"/><rect x="738" y="152" width="253" height="2" fill="url(#a57)"/><rect x="738" y="154" width="256" height="2" fill="url(#a58)"/><rect x="738" y="156" width="258" height="2" fill="url(#a59)"/><rect x="738" y="158" width="261" height="2" fill="url(#a60)"/><rect x="739" y="160" width="263" height="2" fill="url(#a61)"/><rect x="739" y="162" width="266" height="2" fill="url(#a62)"/><rect x="739" y="164" width="269" height="2" fill="url(#a63)"/><rect x="740" y="166" width="271" height="2" fill="url(#a64)"/><rect x="740" y="168" width="274" height="2" fill="url(#a65)"/><rect x="740" y="170" width="276" height="2" fill="url(#a66)"/><rect x="741" y="172" width="278" height="2" fill="url(#a67)"/><rect x="741" y="174" width="281" height="2" fill="url(#a68)"/><rect x="741" y="176" width="284" height="2" fill="url(#a69)"/><rect x="742" y="178" width="286" height="2" fill="url(#a70)"/><rect x="742" y="180" width="289" height="2" fill="url(#a71)"/><rect x="742" y="182" width="291" height="2" fill="url(#a72)"/><rect x="743" y="184" width="293" height="2" fill="url(#a73)"/><rect x="743" y="186" width="296" height="2" fill="url(#a74)"/><rect x="743" y="188" width="299" height="2" fill="url(#a75)"/><rect x="744" y="190" width="301" height="2" fill="url(#a76)"/><rect x="744" y="192" width="304" height="2" fill="url(#a77)"/><rect x="745" y="194" width="306" height="2" fill="url(#a78)"/><rect x="745" y="196" width="309" height="2" fill="url(#a79)"/><rect x="746" y="198" width="310" height="2" fill="url(#a80)"/><rect x="746" y="200" width="313" height="2" fill="url(#a81)"/><rect x="746" y="202" width="316" height="2" fill="url(#a82)"/><rect x="747" y="204" width="318" height="2" fill="url(#a83)"/><rect x="747" y="206" width="321" height="2" fill="url(#a84)"/><rect x="748" y="208" width="323" height="2" fill="url(#a85)"/><rect x="748" y="210" width="325" height="2" fill="url(#a86)"/><rect x="749" y="212" width="327" height="2" fill="url(#a87)"/><rect x="749" y="214" width="330" height="2" fill="url(#a88)"/><rect x="750" y="216" width="332" height="2" fill="url(#a89)"/><rect x="750" y="218" width="335" height="2" fill="url(#a90)"/><rect x="751" y="220" width="337" height="2" fill="url(#a91)"/><rect x="751" y="222" width="340" height="2" fill="url(#a92)"/><rect x="752" y="224" width="342" height="2" fill="url(#a93)"/><rect x="752" y="226" width="344" height="2" fill="url(#a94)"/><rect x="753" y="228" width="346" height="2" fill="url(#a95)"/><rect x="754" y="230" width="348" height="2" fill="url(#a96)"/><rect x="754" y="232" width="351" height="2" fill="url(#a97)"/><rect x="755" y="234" width="353" height="2" fill="url(#a98)"/><rect x="755" y="236" width="356" height="2" fill="url(#a99)"/><rect x="756" y="238" width="357" height="2" fill="url(#a100)"/><rect x="756" y="240" width="360" height="2" fill="url(#a101)"/><rect x="757" y="242" width="362" height="2" fill="url(#a102)"/><rect x="758" y="244" width="364" height="2" fill="url(#a103)"/><rect x="758" y="246" width="367" height="2" fill="url(#a104)"/><rect x="759" y="248" width="369" height="2" fill="url(#a105)"/><rect x="760" y="250" width="371" height="2" fill="url(#a106)"/><rect x="760" y="252" width="374" height="2" fill="url(#a107)"/><rect x="761" y="254" width="375" height="2" fill="url(#a108)"/><rect x="762" y="256" width="373" height="2" fill="url(#a109)"/><rect x="762" y="258" width="367" height="2" fill="url(#a110)"/><rect x="763" y="260" width="359" height="2" fill="url(#a111)"/><rect x="764" y="262" width="352" height="2" fill="url(#a112)"/><rect x="764" y="264" width="346" height="2" fill="url(#a113)"/><rect x="765" y="266" width="339" height="2" fill="url(#a114)"/><rect x="766" y="268" width="332" height="2" fill="url(#a115)"/><rect x="766" y="270" width="326" height="2" fill="url(#a116)"/><rect x="767" y="272" width="319" height="2" fill="url(#a117)"/><rect x="768" y="274" width="312" height="2" fill="url(#a118)"/><rect x="769" y="276" width="304" height="2" fill="url(#a119)"/><rect x="770" y="278" width="297" height="2" fill="url(#a120)"/><rect x="770" y="280" width="291" height="2" fill="url(#a121)"/><rect x="771" y="282" width="284" height="2" fill="url(#a122)"/><rect x="772" y="284" width="277" height="2" fill="url(#a123)"/><rect x="773" y="286" width="270" height="2" fill="url(#a124)"/><rect x="774" y="288" width="263" height="2" fill="url(#a125)"/><rect x="775" y="290" width="256" height="2" fill="url(#a126)"/><rect x="776" y="292" width="248" height="2" fill="url(#a127)"/><rect x="777" y="294" width="241" height="2" fill="url(#a128)"/><rect x="778" y="296" width="234" height="2" fill="url(#a129)"/><rect x="779" y="298" width="227" height="2" fill="url(#a130)"/><rect x="780" y="300" width="220" height="2" fill="url(#a131)"/><rect x="781" y="302" width="213" height="2" fill="url(#a132)"/><rect x="782" y="304" width="206" height="2" fill="url(#a133)"/><rect x="783" y="306" width="198" height="2" fill="url(#a134)"/><rect x="784" y="308" width="191" height="2" fill="url(#a135)"/><rect x="785" y="310" width="184" height="2" fill="url(#a136)"/><rect x="786" y="312" width="177" height="2" fill="url(#a137)"/><rect x="787" y="314" width="170" height="2" fill="url(#a138)"/><rect x="788" y="316" width="163" height="2" fill="url(#a139)"/><rect x="789" y="318" width="156" height="2" fill="url(#a140)"/><rect x="790" y="320" width="149" height="2" fill="url(#a141)"/><rect x="792" y="322" width="140" height="2" fill="url(#a142)"/><rect x="793" y="324" width="133" height="2" fill="url(#a143)"/><rect x="794" y="326" width="126" height="2" fill="url(#a144)"/><rect x="795" y="328" width="119" height="2" fill="url(#a145)"/><rect x="797" y="330" width="111" height="2" fill="url(#a146)"/><rect x="798" y="332" width="104" height="2" fill="url(#a147)"/><rect x="800" y="334" width="96" height="2" fill="url(#a148)"/><rect x="802" y="336" width="88" height="2" fill="url(#a149)"/><rect x="803" y="338" width="80" height="2" fill="url(#a150)"/><rect x="805" y="340" width="72" height="2" fill="url(#a151)"/><rect x="807" y="342" width="64" height="2" fill="url(#a152)"/><rect x="810" y="344" width="55" height="2" fill="url(#a153)"/><rect x="812" y="346" width="47" height="2" fill="url(#a154)"/><rect x="815" y="348" width="38" height="2" fill="url(#a155)"/><rect x="818" y="350" width="29" height="2" fill="url(#a156)"/><rect x="822" y="352" width="19" height="2" fill="url(#a157)"/><rect x="825" y="354" width="9" height="2" fill="url(#a158)"/></g><g clip-path="url(#tri)"><rect x="895" y="128" width="8" height="2" fill="url(#b159)"/><rect x="894" y="130" width="13" height="2" fill="url(#b160)"/><rect x="894" y="132" width="17" height="2" fill="url(#b161)"/><rect x="893" y="134" width="21" height="2" fill="url(#b162)"/><rect x="892" y="136" width="26" height="2" fill="url(#b163)"/><rect x="891" y="138" width="30" height="2" fill="url(#b164)"/><rect x="890" y="140" width="35" height="2" fill="url(#b165)"/><rect x="890" y="142" width="39" height="2" fill="url(#b166)"/><rect x="889" y="144" width="43" height="2" fill="url(#b167)"/><rect x="888" y="146" width="48" height="2" fill="url(#b168)"/><rect x="887" y="148" width="52" height="2" fill="url(#b169)"/><rect x="886" y="150" width="57" height="2" fill="url(#b170)"/><rect x="886" y="152" width="60" height="2" fill="url(#b171)"/><rect x="885" y="154" width="65" height="2" fill="url(#b172)"/><rect x="884" y="156" width="70" height="2" fill="url(#b173)"/><rect x="883" y="158" width="74" height="2" fill="url(#b174)"/><rect x="882" y="160" width="79" height="2" fill="url(#b175)"/><rect x="882" y="162" width="82" height="2" fill="url(#b176)"/><rect x="881" y="164" width="87" height="2" fill="url(#b177)"/><rect x="880" y="166" width="92" height="2" fill="url(#b178)"/><rect x="879" y="168" width="96" height="2" fill="url(#b179)"/><rect x="878" y="170" width="101" height="2" fill="url(#b180)"/><rect x="878" y="172" width="104" height="2" fill="url(#b181)"/><rect x="877" y="174" width="109" height="2" fill="url(#b182)"/><rect x="876" y="176" width="113" height="2" fill="url(#b183)"/><rect x="875" y="178" width="118" height="2" fill="url(#b184)"/><rect x="875" y="180" width="122" height="2" fill="url(#b185)"/><rect x="874" y="182" width="126" height="2" fill="url(#b186)"/><rect x="873" y="184" width="131" height="2" fill="url(#b187)"/><rect x="872" y="186" width="135" height="2" fill="url(#b188)"/><rect x="871" y="188" width="140" height="2" fill="url(#b189)"/><rect x="871" y="190" width="144" height="2" fill="url(#b190)"/><rect x="870" y="192" width="148" height="2" fill="url(#b191)"/><rect x="869" y="194" width="153" height="2" fill="url(#b192)"/><rect x="868" y="196" width="157" height="2" fill="url(#b193)"/><rect x="867" y="198" width="162" height="2" fill="url(#b194)"/><rect x="867" y="200" width="165" height="2" fill="url(#b195)"/><rect x="866" y="202" width="170" height="2" fill="url(#b196)"/><rect x="865" y="204" width="175" height="2" fill="url(#b197)"/><rect x="864" y="206" width="179" height="2" fill="url(#b198)"/><rect x="863" y="208" width="184" height="2" fill="url(#b199)"/><rect x="863" y="210" width="187" height="2" fill="url(#b200)"/><rect x="862" y="212" width="192" height="2" fill="url(#b201)"/><rect x="861" y="214" width="197" height="2" fill="url(#b202)"/><rect x="860" y="216" width="201" height="2" fill="url(#b203)"/><rect x="860" y="218" width="205" height="2" fill="url(#b204)"/><rect x="859" y="220" width="209" height="2" fill="url(#b205)"/><rect x="858" y="222" width="214" height="2" fill="url(#b206)"/><rect x="857" y="224" width="218" height="2" fill="url(#b207)"/><rect x="856" y="226" width="223" height="2" fill="url(#b208)"/><rect x="856" y="228" width="227" height="2" fill="url(#b209)"/><rect x="855" y="230" width="230" height="2" fill="url(#b210)"/><rect x="854" y="232" width="228" height="2" fill="url(#b211)"/><rect x="853" y="234" width="224" height="2" fill="url(#b212)"/><rect x="852" y="236" width="220" height="2" fill="url(#b213)"/><rect x="852" y="238" width="214" height="2" fill="url(#b214)"/><rect x="851" y="240" width="210" height="2" fill="url(#b215)"/><rect x="850" y="242" width="206" height="2" fill="url(#b216)"/><rect x="849" y="244" width="202" height="2" fill="url(#b217)"/><rect x="848" y="246" width="198" height="2" fill="url(#b218)"/><rect x="848" y="248" width="193" height="2" fill="url(#b219)"/><rect x="847" y="250" width="188" height="2" fill="url(#b220)"/><rect x="846" y="252" width="184" height="2" fill="url(#b221)"/><rect x="845" y="254" width="180" height="2" fill="url(#b222)"/><rect x="845" y="256" width="175" height="2" fill="url(#b223)"/><rect x="844" y="258" width="171" height="2" fill="url(#b224)"/><rect x="843" y="260" width="167" height="2" fill="url(#b225)"/><rect x="842" y="262" width="162" height="2" fill="url(#b226)"/><rect x="841" y="264" width="158" height="2" fill="url(#b227)"/><rect x="841" y="266" width="153" height="2" fill="url(#b228)"/><rect x="840" y="268" width="149" height="2" fill="url(#b229)"/><rect x="839" y="270" width="145" height="2" fill="url(#b230)"/><rect x="838" y="272" width="141" height="2" fill="url(#b231)"/><rect x="837" y="274" width="137" height="2" fill="url(#b232)"/><rect x="837" y="276" width="131" height="2" fill="url(#b233)"/><rect x="836" y="278" width="127" height="2" fill="url(#b234)"/><rect x="835" y="280" width="123" height="2" fill="url(#b235)"/><rect x="834" y="282" width="119" height="2" fill="url(#b236)"/><rect x="833" y="284" width="115" height="2" fill="url(#b237)"/><rect x="833" y="286" width="110" height="2" fill="url(#b238)"/><rect x="832" y="288" width="105" height="2" fill="url(#b239)"/><rect x="831" y="290" width="101" height="2" fill="url(#b240)"/><rect x="830" y="292" width="97" height="2" fill="url(#b241)"/><rect x="829" y="294" width="93" height="2" fill="url(#b242)"/><rect x="829" y="296" width="88" height="2" fill="url(#b243)"/><rect x="828" y="298" width="84" height="2" fill="url(#b244)"/><rect x="827" y="300" width="79" height="2" fill="url(#b245)"/><rect x="826" y="302" width="75" height="2" fill="url(#b246)"/><rect x="826" y="304" width="70" height="2" fill="url(#b247)"/><rect x="825" y="306" width="66" height="2" fill="url(#b248)"/><rect x="824" y="308" width="62" height="2" fill="url(#b249)"/><rect x="823" y="310" width="58" height="2" fill="url(#b250)"/><rect x="822" y="312" width="53" height="2" fill="url(#b251)"/><rect x="822" y="314" width="48" height="2" fill="url(#b252)"/><rect x="821" y="316" width="44" height="2" fill="url(#b253)"/><rect x="820" y="318" width="40" height="2" fill="url(#b254)"/><rect x="819" y="320" width="36" height="2" fill="url(#b255)"/><rect x="818" y="322" width="32" height="2" fill="url(#b256)"/><rect x="818" y="324" width="26" height="2" fill="url(#b257)"/><rect x="817" y="326" width="22" height="2" fill="url(#b258)"/><rect x="816" y="328" width="18" height="2" fill="url(#b259)"/><rect x="815" y="330" width="14" height="2" fill="url(#b260)"/><rect x="814" y="332" width="10" height="2" fill="url(#b261)"/></g></g>
<line x1="732.50" y1="356.80" x2="736.50" y2="356.80" stroke="#a8a8a8" stroke-width="1"/>
<text x="731.8" y="360.1" font-size="9.3" fill="#d8d8d8" textLength="6.0" lengthAdjust="spacingAndGlyphs" text-anchor="end">0</text>
<line x1="735.60" y1="356.50" x2="735.60" y2="360.50" stroke="#a8a8a8" stroke-width="1"/>
<text x="735.6" y="370.8" font-size="9.3" fill="#d8d8d8" textLength="6.0" lengthAdjust="spacingAndGlyphs" text-anchor="middle">0</text>
<line x1="732.50" y1="318.70" x2="736.50" y2="318.70" stroke="#a8a8a8" stroke-width="1"/>
<text x="731.8" y="322.0" font-size="9.3" fill="#d8d8d8" textLength="15.0" lengthAdjust="spacingAndGlyphs" text-anchor="end">0.1</text>
<line x1="789.80" y1="356.50" x2="789.80" y2="360.50" stroke="#a8a8a8" stroke-width="1"/>
<text x="789.8" y="370.8" font-size="9.3" fill="#d8d8d8" textLength="15.0" lengthAdjust="spacingAndGlyphs" text-anchor="middle">0.1</text>
<line x1="732.50" y1="280.60" x2="736.50" y2="280.60" stroke="#a8a8a8" stroke-width="1"/>
<text x="731.8" y="283.9" font-size="9.3" fill="#d8d8d8" textLength="15.0" lengthAdjust="spacingAndGlyphs" text-anchor="end">0.2</text>
<line x1="844.00" y1="356.50" x2="844.00" y2="360.50" stroke="#a8a8a8" stroke-width="1"/>
<text x="844.0" y="370.8" font-size="9.3" fill="#d8d8d8" textLength="15.0" lengthAdjust="spacingAndGlyphs" text-anchor="middle">0.2</text>
<line x1="732.50" y1="242.50" x2="736.50" y2="242.50" stroke="#a8a8a8" stroke-width="1"/>
<text x="731.8" y="245.8" font-size="9.3" fill="#d8d8d8" textLength="15.0" lengthAdjust="spacingAndGlyphs" text-anchor="end">0.3</text>
<line x1="898.20" y1="356.50" x2="898.20" y2="360.50" stroke="#a8a8a8" stroke-width="1"/>
<text x="898.2" y="370.8" font-size="9.3" fill="#d8d8d8" textLength="15.0" lengthAdjust="spacingAndGlyphs" text-anchor="middle">0.3</text>
<line x1="732.50" y1="204.40" x2="736.50" y2="204.40" stroke="#a8a8a8" stroke-width="1"/>
<text x="731.8" y="207.7" font-size="9.3" fill="#d8d8d8" textLength="15.0" lengthAdjust="spacingAndGlyphs" text-anchor="end">0.4</text>
<line x1="952.40" y1="356.50" x2="952.40" y2="360.50" stroke="#a8a8a8" stroke-width="1"/>
<text x="952.4" y="370.8" font-size="9.3" fill="#d8d8d8" textLength="15.0" lengthAdjust="spacingAndGlyphs" text-anchor="middle">0.4</text>
<line x1="732.50" y1="166.30" x2="736.50" y2="166.30" stroke="#a8a8a8" stroke-width="1"/>
<text x="731.8" y="169.6" font-size="9.3" fill="#d8d8d8" textLength="15.0" lengthAdjust="spacingAndGlyphs" text-anchor="end">0.5</text>
<line x1="1006.60" y1="356.50" x2="1006.60" y2="360.50" stroke="#a8a8a8" stroke-width="1"/>
<text x="1006.6" y="370.8" font-size="9.3" fill="#d8d8d8" textLength="15.0" lengthAdjust="spacingAndGlyphs" text-anchor="middle">0.5</text>
<line x1="732.50" y1="128.20" x2="736.50" y2="128.20" stroke="#a8a8a8" stroke-width="1"/>
<text x="731.8" y="131.5" font-size="9.3" fill="#d8d8d8" textLength="15.0" lengthAdjust="spacingAndGlyphs" text-anchor="end">0.6</text>
<line x1="1060.80" y1="356.50" x2="1060.80" y2="360.50" stroke="#a8a8a8" stroke-width="1"/>
<text x="1060.8" y="370.8" font-size="9.3" fill="#d8d8d8" textLength="15.0" lengthAdjust="spacingAndGlyphs" text-anchor="middle">0.6</text>
<line x1="732.50" y1="90.10" x2="736.50" y2="90.10" stroke="#a8a8a8" stroke-width="1"/>
<text x="731.8" y="93.4" font-size="9.3" fill="#d8d8d8" textLength="15.0" lengthAdjust="spacingAndGlyphs" text-anchor="end">0.7</text>
<line x1="1115.00" y1="356.50" x2="1115.00" y2="360.50" stroke="#a8a8a8" stroke-width="1"/>
<text x="1115.0" y="370.8" font-size="9.3" fill="#d8d8d8" textLength="15.0" lengthAdjust="spacingAndGlyphs" text-anchor="middle">0.7</text>
<line x1="732.50" y1="52.00" x2="736.50" y2="52.00" stroke="#a8a8a8" stroke-width="1"/>
<text x="731.8" y="55.3" font-size="9.3" fill="#d8d8d8" textLength="15.0" lengthAdjust="spacingAndGlyphs" text-anchor="end">0.8</text>
<line x1="1169.20" y1="356.50" x2="1169.20" y2="360.50" stroke="#a8a8a8" stroke-width="1"/>
<text x="1169.2" y="370.8" font-size="9.3" fill="#d8d8d8" textLength="15.0" lengthAdjust="spacingAndGlyphs" text-anchor="middle">0.8</text>
<rect x="736.5" y="34.5" width="456.0" height="322.0" fill="none" stroke="#a8a8a8" stroke-width="1"/>
<rect x="947.7" y="213.8" width="10" height="10" fill="none" stroke="#f0f0f0" stroke-width="1.6"/>
<rect x="935.6" y="216.2" width="10" height="10" fill="none" stroke="#f0f0f0" stroke-width="1.6"/>
<rect x="866.1" y="250.4" width="10" height="10" fill="none" stroke="#f0f0f0" stroke-width="1.6"/>
<rect x="914.9" y="189.5" width="10" height="10" fill="none" stroke="#f0f0f0" stroke-width="1.6"/>
<rect x="876.2" y="255.4" width="10" height="10" fill="none" stroke="#f0f0f0" stroke-width="1.6"/>
<rect x="872.6" y="214.8" width="10" height="10" fill="none" stroke="#f0f0f0" stroke-width="1.6"/>
<rect x="1008.1" y="196.9" width="10" height="10" fill="none" stroke="#f0f0f0" stroke-width="1.6"/>
<rect x="848.7" y="277.4" width="10" height="10" fill="none" stroke="#f0f0f0" stroke-width="1.6"/>
<rect x="981.6" y="231.0" width="10" height="10" fill="none" stroke="#f0f0f0" stroke-width="1.6"/>
<rect x="887.1" y="266.4" width="10" height="10" fill="none" stroke="#f0f0f0" stroke-width="1.6"/>
<rect x="934.1" y="162.8" width="10" height="10" fill="none" stroke="#f0f0f0" stroke-width="1.6"/>
<rect x="987.1" y="182.3" width="10" height="10" fill="none" stroke="#f0f0f0" stroke-width="1.6"/>
<rect x="834.7" y="296.3" width="10" height="10" fill="none" stroke="#f0f0f0" stroke-width="1.6"/>
<rect x="896.9" y="163.4" width="10" height="10" fill="none" stroke="#f0f0f0" stroke-width="1.6"/>
<rect x="1023.1" y="228.6" width="10" height="10" fill="none" stroke="#f0f0f0" stroke-width="1.6"/>
<rect x="973.7" y="169.5" width="10" height="10" fill="none" stroke="#f0f0f0" stroke-width="1.6"/>
<rect x="933.5" y="256.6" width="10" height="10" fill="none" stroke="#f0f0f0" stroke-width="1.6"/>
<rect x="843.9" y="247.5" width="10" height="10" fill="none" stroke="#f0f0f0" stroke-width="1.6"/>
<circle cx="903.1" cy="231.3" r="3.3" fill="#a8a8a8" stroke="#1a1a1a" stroke-width="1"/>
<circle cx="959.4" cy="217.0" r="3.3" fill="#6a5548" stroke="#1a1a1a" stroke-width="1"/>
<circle cx="945.2" cy="218.2" r="3.3" fill="#a88878" stroke="#1a1a1a" stroke-width="1"/>
<circle cx="868.4" cy="260.8" r="3.3" fill="#7a8298" stroke="#1a1a1a" stroke-width="1"/>
<circle cx="921.4" cy="185.2" r="3.3" fill="#566048" stroke="#1a1a1a" stroke-width="1"/>
<circle cx="881.0" cy="264.8" r="3.3" fill="#8a88a8" stroke="#1a1a1a" stroke-width="1"/>
<circle cx="874.5" cy="211.3" r="3.3" fill="#88a898" stroke="#1a1a1a" stroke-width="1"/>
<circle cx="1016.5" cy="197.4" r="3.3" fill="#b88858" stroke="#1a1a1a" stroke-width="1"/>
<circle cx="880.5" cy="256.2" r="3.3" fill="#000000" stroke="#1a1a1a" stroke-width="1"/>
<circle cx="853.1" cy="287.8" r="3.3" fill="#5a6098" stroke="#1a1a1a" stroke-width="1"/>
<circle cx="1001.3" cy="236.0" r="3.3" fill="#a86868" stroke="#1a1a1a" stroke-width="1"/>
<circle cx="894.6" cy="275.7" r="3.3" fill="#684878" stroke="#1a1a1a" stroke-width="1"/>
<circle cx="936.0" cy="155.6" r="3.3" fill="#a8a878" stroke="#1a1a1a" stroke-width="1"/>
<circle cx="994.0" cy="180.0" r="3.3" fill="#c89858" stroke="#1a1a1a" stroke-width="1"/>
<circle cx="840.3" cy="304.9" r="3.3" fill="#484878" stroke="#1a1a1a" stroke-width="1"/>
<circle cx="899.5" cy="153.1" r="3.3" fill="#708060" stroke="#1a1a1a" stroke-width="1"/>
<circle cx="1044.5" cy="231.2" r="3.3" fill="#885858" stroke="#1a1a1a" stroke-width="1"/>
<circle cx="980.0" cy="167.2" r="3.3" fill="#d0b868" stroke="#1a1a1a" stroke-width="1"/>
<circle cx="936.6" cy="266.5" r="3.3" fill="#986888" stroke="#1a1a1a" stroke-width="1"/>
<circle cx="848.9" cy="256.8" r="3.3" fill="#587888" stroke="#1a1a1a" stroke-width="1"/>
<rect x="899.6" y="226.0" width="11" height="11" fill="none" stroke="#000" stroke-width="2"/>
<rect x="898.3" y="224.7" width="13.6" height="13.6" fill="none" stroke="#e0e0e0" stroke-width="0.6"/>
<circle cx="904.1" cy="232.0" r="3.8" fill="#a8a8a8" stroke="#222" stroke-width="1"/>
<rect x="1053.10" y="37.90" width="136.00" height="99.00" fill="#2a2a2a"/>
<g shape-rendering="crispEdges"><rect x="1055.1" y="39.9" width="132.0" height="1.02" fill="url(#i0)"/><rect x="1055.1" y="40.9" width="132.0" height="1.02" fill="url(#i1)"/><rect x="1055.1" y="41.9" width="132.0" height="1.02" fill="url(#i2)"/><rect x="1055.1" y="42.9" width="132.0" height="1.02" fill="url(#i3)"/><rect x="1055.1" y="43.9" width="132.0" height="1.02" fill="url(#i4)"/><rect x="1055.1" y="44.9" width="132.0" height="1.02" fill="url(#i5)"/><rect x="1055.1" y="45.9" width="132.0" height="1.02" fill="url(#i6)"/><rect x="1055.1" y="46.9" width="132.0" height="1.02" fill="url(#i7)"/><rect x="1055.1" y="47.9" width="132.0" height="1.02" fill="url(#i8)"/><rect x="1055.1" y="48.9" width="132.0" height="1.02" fill="url(#i9)"/><rect x="1055.1" y="49.9" width="132.0" height="1.02" fill="url(#i10)"/><rect x="1055.1" y="50.9" width="132.0" height="1.02" fill="url(#i11)"/><rect x="1055.1" y="51.9" width="132.0" height="1.02" fill="url(#i12)"/><rect x="1055.1" y="52.9" width="132.0" height="1.02" fill="url(#i13)"/><rect x="1055.1" y="53.9" width="132.0" height="1.02" fill="url(#i14)"/><rect x="1055.1" y="54.9" width="132.0" height="1.02" fill="url(#i15)"/><rect x="1055.1" y="55.9" width="132.0" height="1.02" fill="url(#i16)"/><rect x="1055.1" y="56.9" width="132.0" height="1.02" fill="url(#i17)"/><rect x="1055.1" y="57.9" width="132.0" height="1.02" fill="url(#i18)"/><rect x="1055.1" y="58.9" width="132.0" height="1.02" fill="url(#i19)"/><rect x="1055.1" y="59.9" width="132.0" height="1.02" fill="url(#i20)"/><rect x="1055.1" y="60.9" width="132.0" height="1.02" fill="url(#i21)"/><rect x="1055.1" y="61.9" width="132.0" height="1.02" fill="url(#i22)"/><rect x="1055.1" y="62.9" width="132.0" height="1.02" fill="url(#i23)"/><rect x="1055.1" y="63.9" width="132.0" height="1.02" fill="url(#i24)"/><rect x="1055.1" y="64.9" width="132.0" height="1.02" fill="url(#i25)"/><rect x="1055.1" y="65.9" width="132.0" height="1.02" fill="url(#i26)"/><rect x="1055.1" y="66.9" width="132.0" height="1.02" fill="url(#i27)"/><rect x="1055.1" y="67.9" width="132.0" height="1.02" fill="url(#i28)"/><rect x="1055.1" y="68.9" width="132.0" height="1.02" fill="url(#i29)"/><rect x="1055.1" y="69.9" width="132.0" height="1.02" fill="url(#i30)"/><rect x="1055.1" y="70.9" width="132.0" height="1.02" fill="url(#i31)"/><rect x="1055.1" y="71.9" width="132.0" height="1.02" fill="url(#i32)"/><rect x="1055.1" y="72.9" width="132.0" height="1.02" fill="url(#i33)"/><rect x="1055.1" y="73.9" width="132.0" height="1.02" fill="url(#i34)"/><rect x="1055.1" y="74.9" width="132.0" height="1.02" fill="url(#i35)"/><rect x="1055.1" y="75.9" width="132.0" height="1.02" fill="url(#i36)"/><rect x="1055.1" y="76.9" width="132.0" height="1.02" fill="url(#i37)"/><rect x="1055.1" y="77.9" width="132.0" height="1.02" fill="url(#i38)"/><rect x="1055.1" y="78.9" width="132.0" height="1.02" fill="url(#i39)"/><rect x="1055.1" y="79.9" width="132.0" height="1.02" fill="url(#i40)"/><rect x="1055.1" y="80.9" width="132.0" height="1.02" fill="url(#i41)"/><rect x="1055.1" y="81.9" width="132.0" height="1.02" fill="url(#i42)"/><rect x="1055.1" y="82.9" width="132.0" height="1.02" fill="url(#i43)"/><rect x="1055.1" y="83.9" width="132.0" height="1.02" fill="url(#i44)"/><rect x="1055.1" y="84.9" width="132.0" height="1.02" fill="url(#i45)"/><rect x="1055.1" y="85.9" width="132.0" height="1.02" fill="url(#i46)"/><rect x="1055.1" y="86.9" width="132.0" height="1.02" fill="url(#i47)"/><rect x="1055.1" y="87.9" width="132.0" height="1.02" fill="url(#i48)"/><rect x="1055.1" y="88.9" width="132.0" height="1.02" fill="url(#i49)"/><rect x="1055.1" y="89.9" width="132.0" height="1.02" fill="url(#i50)"/><rect x="1055.1" y="90.9" width="132.0" height="1.02" fill="url(#i51)"/><rect x="1055.1" y="91.9" width="132.0" height="1.02" fill="url(#i52)"/><rect x="1055.1" y="92.9" width="132.0" height="1.02" fill="url(#i53)"/><rect x="1055.1" y="93.9" width="132.0" height="1.02" fill="url(#i54)"/><rect x="1055.1" y="94.9" width="132.0" height="1.02" fill="url(#i55)"/><rect x="1055.1" y="95.9" width="132.0" height="1.02" fill="url(#i56)"/><rect x="1055.1" y="96.9" width="132.0" height="1.02" fill="url(#i57)"/><rect x="1055.1" y="97.9" width="132.0" height="1.02" fill="url(#i58)"/><rect x="1055.1" y="98.9" width="132.0" height="1.02" fill="url(#i59)"/><rect x="1055.1" y="99.9" width="132.0" height="1.02" fill="url(#i60)"/><rect x="1055.1" y="100.9" width="132.0" height="1.02" fill="url(#i61)"/><rect x="1055.1" y="101.9" width="132.0" height="1.02" fill="url(#i62)"/><rect x="1055.1" y="102.9" width="132.0" height="1.02" fill="url(#i63)"/><rect x="1055.1" y="103.9" width="132.0" height="1.02" fill="url(#i64)"/><rect x="1055.1" y="104.9" width="132.0" height="1.02" fill="url(#i65)"/><rect x="1055.1" y="105.9" width="132.0" height="1.02" fill="url(#i66)"/><rect x="1055.1" y="106.9" width="132.0" height="1.02" fill="url(#i67)"/><rect x="1055.1" y="107.9" width="132.0" height="1.02" fill="url(#i68)"/><rect x="1055.1" y="108.9" width="132.0" height="1.02" fill="url(#i69)"/><rect x="1055.1" y="109.9" width="132.0" height="1.02" fill="url(#i70)"/><rect x="1055.1" y="110.9" width="132.0" height="1.02" fill="url(#i71)"/><rect x="1055.1" y="111.9" width="132.0" height="1.02" fill="url(#i72)"/><rect x="1055.1" y="112.9" width="132.0" height="1.02" fill="url(#i73)"/><rect x="1055.1" y="113.9" width="132.0" height="1.02" fill="url(#i74)"/><rect x="1055.1" y="114.9" width="132.0" height="1.02" fill="url(#i75)"/><rect x="1055.1" y="115.9" width="132.0" height="1.02" fill="url(#i76)"/><rect x="1055.1" y="116.9" width="132.0" height="1.02" fill="url(#i77)"/><rect x="1055.1" y="117.9" width="132.0" height="1.02" fill="url(#i78)"/><rect x="1055.1" y="118.9" width="132.0" height="1.02" fill="url(#i79)"/><rect x="1055.1" y="119.9" width="132.0" height="1.02" fill="url(#i80)"/><rect x="1055.1" y="120.9" width="132.0" height="1.02" fill="url(#i81)"/><rect x="1055.1" y="121.9" width="132.0" height="1.02" fill="url(#i82)"/><rect x="1055.1" y="122.9" width="132.0" height="1.02" fill="url(#i83)"/><rect x="1055.1" y="123.9" width="132.0" height="1.02" fill="url(#i84)"/><rect x="1055.1" y="124.9" width="132.0" height="1.02" fill="url(#i85)"/><rect x="1055.1" y="125.9" width="132.0" height="1.02" fill="url(#i86)"/><rect x="1055.1" y="126.9" width="132.0" height="1.02" fill="url(#i87)"/><rect x="1055.1" y="127.9" width="132.0" height="1.02" fill="url(#i88)"/><rect x="1055.1" y="128.9" width="132.0" height="1.02" fill="url(#i89)"/><rect x="1055.1" y="129.9" width="132.0" height="1.02" fill="url(#i90)"/><rect x="1055.1" y="130.9" width="132.0" height="1.02" fill="url(#i91)"/><rect x="1055.1" y="131.9" width="132.0" height="1.02" fill="url(#i92)"/><rect x="1055.1" y="132.9" width="132.0" height="1.02" fill="url(#i93)"/><rect x="1055.1" y="133.9" width="132.0" height="1.02" fill="url(#i94)"/></g>
<rect x="1114.8" y="82.4" width="10.6" height="8.4" fill="#fff" stroke="#111" stroke-width="1.5"/><circle cx="1109.3" cy="86.4" r="3.8" fill="#f4f4f4" fill-opacity="0.6" stroke="#333" stroke-width="1"/><circle cx="1112.2" cy="86.4" r="3.8" fill="#f4f4f4" fill-opacity="0.6" stroke="#333" stroke-width="1"/><circle cx="1116.4" cy="86.6" r="3.8" fill="#999" stroke="#333" stroke-width="1"/>
<rect x="993.80" y="330.60" width="196.70" height="18.40" fill="#3c3c3c" fill-opacity="0.92"/>
<text x="1007.9" y="345.1" font-size="13.8" fill="#eeeeee" textLength="167.9" lengthAdjust="spacingAndGlyphs">RGB Triplet: 235, 235, 235</text>
<rect x="232.30" y="390.20" width="970.00" height="9.50" fill="#2b2b2b"/>
<rect x="232.30" y="399.70" width="970.00" height="9.10" fill="#1a1a1a"/>
<rect x="232.30" y="390.20" width="11.80" height="18.60" fill="#050505"/>
<rect x="232.30" y="408.80" width="970.00" height="16.40" fill="#3b3b3b"/>
<rect x="232.30" y="408.80" width="11.80" height="16.40" fill="#262626"/>
<rect x="232.30" y="425.15" width="970.00" height="16.40" fill="#6e6e6e"/>
<rect x="232.30" y="425.15" width="11.80" height="16.40" fill="#232323"/>
<rect x="232.30" y="441.50" width="970.00" height="16.40" fill="#3b3b3b"/>
<rect x="232.30" y="441.50" width="11.80" height="16.40" fill="#262626"/>
<rect x="232.30" y="457.85" width="970.00" height="16.40" fill="#6e6e6e"/>
<rect x="232.30" y="457.85" width="11.80" height="16.40" fill="#232323"/>
<rect x="232.30" y="474.20" width="970.00" height="16.40" fill="#3b3b3b"/>
<rect x="232.30" y="474.20" width="11.80" height="16.40" fill="#262626"/>
<rect x="232.30" y="490.55" width="970.00" height="16.40" fill="#6e6e6e"/>
<rect x="232.30" y="490.55" width="11.80" height="16.40" fill="#232323"/>
<rect x="232.30" y="506.90" width="970.00" height="16.40" fill="#3b3b3b"/>
<rect x="232.30" y="506.90" width="11.80" height="16.40" fill="#262626"/>
<text x="352.5" y="403.8" font-size="11.8" fill="#e8e8e8" textLength="31.2" lengthAdjust="spacingAndGlyphs">White</text>
<text x="421.9" y="403.8" font-size="11.8" fill="#e8e8e8" textLength="43.4" lengthAdjust="spacingAndGlyphs">Gray 80</text>
<text x="483.2" y="403.8" font-size="11.8" fill="#e8e8e8" textLength="43.4" lengthAdjust="spacingAndGlyphs">Gray 65</text>
<text x="544.4" y="403.8" font-size="11.8" fill="#e8e8e8" textLength="43.4" lengthAdjust="spacingAndGlyphs">Gray 50</text>
<text x="605.7" y="403.8" font-size="11.8" fill="#e8e8e8" textLength="43.4" lengthAdjust="spacingAndGlyphs">Gray 35</text>
<text x="666.1" y="403.8" font-size="11.8" fill="#e8e8e8" textLength="29.9" lengthAdjust="spacingAndGlyphs">Black</text>
<text x="719.6" y="403.8" font-size="11.8" fill="#e8e8e8" textLength="52.9" lengthAdjust="spacingAndGlyphs">Dark Skin</text>
<text x="780.4" y="403.8" font-size="11.8" fill="#e8e8e8" textLength="53.6" lengthAdjust="spacingAndGlyphs">Light Skin</text>
<text x="841.7" y="403.8" font-size="11.8" fill="#e8e8e8" textLength="48.2" lengthAdjust="spacingAndGlyphs">Blue Sky</text>
<text x="903.3" y="403.8" font-size="11.8" fill="#e8e8e8" textLength="40.1" lengthAdjust="spacingAndGlyphs">Foliage</text>
<text x="964.6" y="403.8" font-size="11.8" fill="#e8e8e8" textLength="64.5" lengthAdjust="spacingAndGlyphs">Blue Flower</text>
<text x="1038.8" y="403.8" font-size="11.8" fill="#e8e8e8" textLength="70.6" lengthAdjust="spacingAndGlyphs">Bluish Green</text>
<text x="1118.8" y="403.8" font-size="11.8" fill="#e8e8e8" textLength="40.7" lengthAdjust="spacingAndGlyphs">Orange</text>
<text x="1179.2" y="403.8" font-size="11.8" fill="#e8e8e8" textLength="72.0" lengthAdjust="spacingAndGlyphs">Purplish Blue</text>
<text x="247.6" y="420.7" font-size="11.8" fill="#eeeeee" textLength="51.0" lengthAdjust="spacingAndGlyphs">x: CIE31</text>
<text x="352.5" y="420.7" font-size="11.8" fill="#eeeeee" textLength="44.4" lengthAdjust="spacingAndGlyphs">0.3090</text>
<text x="421.9" y="420.7" font-size="11.8" fill="#eeeeee" textLength="44.4" lengthAdjust="spacingAndGlyphs">0.3101</text>
<text x="483.2" y="420.7" font-size="11.8" fill="#eeeeee" textLength="44.4" lengthAdjust="spacingAndGlyphs">0.3109</text>
<text x="544.4" y="420.7" font-size="11.8" fill="#eeeeee" textLength="42.2" lengthAdjust="spacingAndGlyphs">0.3111</text>
<text x="605.7" y="420.7" font-size="11.8" fill="#eeeeee" textLength="43.3" lengthAdjust="spacingAndGlyphs">0.3112</text>
<text x="666.1" y="420.7" font-size="11.8" fill="#eeeeee" textLength="44.4" lengthAdjust="spacingAndGlyphs">0.2674</text>
<text x="719.6" y="420.7" font-size="11.8" fill="#eeeeee" textLength="44.4" lengthAdjust="spacingAndGlyphs">0.4129</text>
<text x="780.4" y="420.7" font-size="11.8" fill="#eeeeee" textLength="44.4" lengthAdjust="spacingAndGlyphs">0.3868</text>
<text x="841.7" y="420.7" font-size="11.8" fill="#eeeeee" textLength="44.4" lengthAdjust="spacingAndGlyphs">0.2451</text>
<text x="903.3" y="420.7" font-size="11.8" fill="#eeeeee" textLength="44.4" lengthAdjust="spacingAndGlyphs">0.3428</text>
<text x="964.6" y="420.7" font-size="11.8" fill="#eeeeee" textLength="44.4" lengthAdjust="spacingAndGlyphs">0.2682</text>
<text x="1038.8" y="420.7" font-size="11.8" fill="#eeeeee" textLength="44.4" lengthAdjust="spacingAndGlyphs">0.2562</text>
<text x="1118.8" y="420.7" font-size="11.8" fill="#eeeeee" textLength="44.4" lengthAdjust="spacingAndGlyphs">0.5183</text>
<text x="1179.2" y="420.7" font-size="11.8" fill="#eeeeee" textLength="44.4" lengthAdjust="spacingAndGlyphs">0.2185</text>
<text x="247.6" y="437.1" font-size="11.8" fill="#eeeeee" textLength="51.0" lengthAdjust="spacingAndGlyphs">y: CIE31</text>
<text x="352.5" y="437.1" font-size="11.8" fill="#eeeeee" textLength="44.4" lengthAdjust="spacingAndGlyphs">0.3295</text>
<text x="421.9" y="437.1" font-size="11.8" fill="#eeeeee" textLength="44.4" lengthAdjust="spacingAndGlyphs">0.3292</text>
<text x="483.2" y="437.1" font-size="11.8" fill="#eeeeee" textLength="44.4" lengthAdjust="spacingAndGlyphs">0.3299</text>
<text x="544.4" y="437.1" font-size="11.8" fill="#eeeeee" textLength="44.4" lengthAdjust="spacingAndGlyphs">0.3294</text>
<text x="605.7" y="437.1" font-size="11.8" fill="#eeeeee" textLength="44.4" lengthAdjust="spacingAndGlyphs">0.3281</text>
<text x="666.1" y="437.1" font-size="11.8" fill="#eeeeee" textLength="44.4" lengthAdjust="spacingAndGlyphs">0.2640</text>
<text x="719.6" y="437.1" font-size="11.8" fill="#eeeeee" textLength="44.4" lengthAdjust="spacingAndGlyphs">0.3669</text>
<text x="780.4" y="437.1" font-size="11.8" fill="#eeeeee" textLength="44.4" lengthAdjust="spacingAndGlyphs">0.3637</text>
<text x="841.7" y="437.1" font-size="11.8" fill="#eeeeee" textLength="44.4" lengthAdjust="spacingAndGlyphs">0.2519</text>
<text x="903.3" y="437.1" font-size="11.8" fill="#eeeeee" textLength="44.4" lengthAdjust="spacingAndGlyphs">0.4505</text>
<text x="964.6" y="437.1" font-size="11.8" fill="#eeeeee" textLength="44.4" lengthAdjust="spacingAndGlyphs">0.2415</text>
<text x="1038.8" y="437.1" font-size="11.8" fill="#eeeeee" textLength="44.4" lengthAdjust="spacingAndGlyphs">0.3818</text>
<text x="1118.8" y="437.1" font-size="11.8" fill="#eeeeee" textLength="44.4" lengthAdjust="spacingAndGlyphs">0.4183</text>
<text x="1179.2" y="437.1" font-size="11.8" fill="#eeeeee" textLength="44.4" lengthAdjust="spacingAndGlyphs">0.1944</text>
<text x="247.6" y="453.4" font-size="11.8" fill="#eeeeee" textLength="8.7" lengthAdjust="spacingAndGlyphs">Y</text>
<text x="352.5" y="453.4" font-size="11.8" fill="#eeeeee" textLength="59.5" lengthAdjust="spacingAndGlyphs">113.9359</text>
<text x="421.9" y="453.4" font-size="11.8" fill="#eeeeee" textLength="52.5" lengthAdjust="spacingAndGlyphs">93.3618</text>
<text x="483.2" y="453.4" font-size="11.8" fill="#eeeeee" textLength="52.5" lengthAdjust="spacingAndGlyphs">76.2661</text>
<text x="544.4" y="453.4" font-size="11.8" fill="#eeeeee" textLength="52.5" lengthAdjust="spacingAndGlyphs">59.6233</text>
<text x="605.7" y="453.4" font-size="11.8" fill="#eeeeee" textLength="52.5" lengthAdjust="spacingAndGlyphs">41.8786</text>
<text x="666.1" y="453.4" font-size="11.8" fill="#eeeeee" textLength="44.4" lengthAdjust="spacingAndGlyphs">0.0785</text>
<text x="719.6" y="453.4" font-size="11.8" fill="#eeeeee" textLength="51.4" lengthAdjust="spacingAndGlyphs">11.7694</text>
<text x="780.4" y="453.4" font-size="11.8" fill="#eeeeee" textLength="52.5" lengthAdjust="spacingAndGlyphs">41.3971</text>
<text x="841.7" y="453.4" font-size="11.8" fill="#eeeeee" textLength="52.5" lengthAdjust="spacingAndGlyphs">22.7844</text>
<text x="903.3" y="453.4" font-size="11.8" fill="#eeeeee" textLength="52.5" lengthAdjust="spacingAndGlyphs">15.7671</text>
<text x="964.6" y="453.4" font-size="11.8" fill="#eeeeee" textLength="52.5" lengthAdjust="spacingAndGlyphs">27.9928</text>
<text x="1038.8" y="453.4" font-size="11.8" fill="#eeeeee" textLength="52.5" lengthAdjust="spacingAndGlyphs">51.0572</text>
<text x="1118.8" y="453.4" font-size="11.8" fill="#eeeeee" textLength="52.5" lengthAdjust="spacingAndGlyphs">32.1303</text>
<text x="1179.2" y="453.4" font-size="11.8" fill="#eeeeee" textLength="52.5" lengthAdjust="spacingAndGlyphs">13.2210</text>
<text x="247.6" y="469.8" font-size="11.8" fill="#eeeeee" textLength="93.3" lengthAdjust="spacingAndGlyphs">Target x:CIE31</text>
<text x="352.5" y="469.8" font-size="11.8" fill="#eeeeee" textLength="44.4" lengthAdjust="spacingAndGlyphs">0.3127</text>
<text x="421.9" y="469.8" font-size="11.8" fill="#eeeeee" textLength="44.4" lengthAdjust="spacingAndGlyphs">0.3127</text>
<text x="483.2" y="469.8" font-size="11.8" fill="#eeeeee" textLength="44.4" lengthAdjust="spacingAndGlyphs">0.3127</text>
<text x="544.4" y="469.8" font-size="11.8" fill="#eeeeee" textLength="44.4" lengthAdjust="spacingAndGlyphs">0.3127</text>
<text x="605.7" y="469.8" font-size="11.8" fill="#eeeeee" textLength="44.4" lengthAdjust="spacingAndGlyphs">0.3127</text>
<text x="666.1" y="469.8" font-size="11.8" fill="#eeeeee" textLength="44.4" lengthAdjust="spacingAndGlyphs">0.3127</text>
<text x="719.6" y="469.8" font-size="11.8" fill="#eeeeee" textLength="44.4" lengthAdjust="spacingAndGlyphs">0.4005</text>
<text x="780.4" y="469.8" font-size="11.8" fill="#eeeeee" textLength="44.4" lengthAdjust="spacingAndGlyphs">0.3782</text>
<text x="841.7" y="469.8" font-size="11.8" fill="#eeeeee" textLength="44.4" lengthAdjust="spacingAndGlyphs">0.2500</text>
<text x="903.3" y="469.8" font-size="11.8" fill="#eeeeee" textLength="44.4" lengthAdjust="spacingAndGlyphs">0.3400</text>
<text x="964.6" y="469.8" font-size="11.8" fill="#eeeeee" textLength="44.4" lengthAdjust="spacingAndGlyphs">0.2687</text>
<text x="1038.8" y="469.8" font-size="11.8" fill="#eeeeee" textLength="44.4" lengthAdjust="spacingAndGlyphs">0.2620</text>
<text x="1118.8" y="469.8" font-size="11.8" fill="#eeeeee" textLength="44.4" lengthAdjust="spacingAndGlyphs">0.5120</text>
<text x="1179.2" y="469.8" font-size="11.8" fill="#eeeeee" textLength="44.4" lengthAdjust="spacingAndGlyphs">0.2155</text>
<text x="247.6" y="486.1" font-size="11.8" fill="#eeeeee" textLength="93.3" lengthAdjust="spacingAndGlyphs">Target y:CIE31</text>
<text x="352.5" y="486.1" font-size="11.8" fill="#eeeeee" textLength="44.4" lengthAdjust="spacingAndGlyphs">0.3290</text>
<text x="421.9" y="486.1" font-size="11.8" fill="#eeeeee" textLength="44.4" lengthAdjust="spacingAndGlyphs">0.3290</text>
<text x="483.2" y="486.1" font-size="11.8" fill="#eeeeee" textLength="44.4" lengthAdjust="spacingAndGlyphs">0.3290</text>
<text x="544.4" y="486.1" font-size="11.8" fill="#eeeeee" textLength="44.4" lengthAdjust="spacingAndGlyphs">0.3290</text>
<text x="605.7" y="486.1" font-size="11.8" fill="#eeeeee" textLength="44.4" lengthAdjust="spacingAndGlyphs">0.3290</text>
<text x="666.1" y="486.1" font-size="11.8" fill="#eeeeee" textLength="44.4" lengthAdjust="spacingAndGlyphs">0.3290</text>
<text x="719.6" y="486.1" font-size="11.8" fill="#eeeeee" textLength="44.4" lengthAdjust="spacingAndGlyphs">0.3623</text>
<text x="780.4" y="486.1" font-size="11.8" fill="#eeeeee" textLength="44.4" lengthAdjust="spacingAndGlyphs">0.3560</text>
<text x="841.7" y="486.1" font-size="11.8" fill="#eeeeee" textLength="44.4" lengthAdjust="spacingAndGlyphs">0.2661</text>
<text x="903.3" y="486.1" font-size="11.8" fill="#eeeeee" textLength="44.4" lengthAdjust="spacingAndGlyphs">0.4261</text>
<text x="964.6" y="486.1" font-size="11.8" fill="#eeeeee" textLength="44.4" lengthAdjust="spacingAndGlyphs">0.2530</text>
<text x="1038.8" y="486.1" font-size="11.8" fill="#eeeeee" textLength="44.4" lengthAdjust="spacingAndGlyphs">0.3597</text>
<text x="1118.8" y="486.1" font-size="11.8" fill="#eeeeee" textLength="44.4" lengthAdjust="spacingAndGlyphs">0.4066</text>
<text x="1179.2" y="486.1" font-size="11.8" fill="#eeeeee" textLength="44.4" lengthAdjust="spacingAndGlyphs">0.1990</text>
<text x="247.6" y="502.4" font-size="11.8" fill="#eeeeee" textLength="54.2" lengthAdjust="spacingAndGlyphs">Target Y</text>
<text x="352.5" y="502.4" font-size="11.8" fill="#eeeeee" textLength="59.5" lengthAdjust="spacingAndGlyphs">113.9359</text>
<text x="421.9" y="502.4" font-size="11.8" fill="#eeeeee" textLength="52.5" lengthAdjust="spacingAndGlyphs">89.6284</text>
<text x="483.2" y="502.4" font-size="11.8" fill="#eeeeee" textLength="52.5" lengthAdjust="spacingAndGlyphs">73.1347</text>
<text x="544.4" y="502.4" font-size="11.8" fill="#eeeeee" textLength="52.5" lengthAdjust="spacingAndGlyphs">56.1872</text>
<text x="605.7" y="502.4" font-size="11.8" fill="#eeeeee" textLength="52.5" lengthAdjust="spacingAndGlyphs">39.2017</text>
<text x="666.1" y="502.4" font-size="11.8" fill="#eeeeee" textLength="44.4" lengthAdjust="spacingAndGlyphs">0.0785</text>
<text x="719.6" y="502.4" font-size="11.8" fill="#eeeeee" textLength="51.4" lengthAdjust="spacingAndGlyphs">11.4895</text>
<text x="780.4" y="502.4" font-size="11.8" fill="#eeeeee" textLength="52.5" lengthAdjust="spacingAndGlyphs">39.7895</text>
<text x="841.7" y="502.4" font-size="11.8" fill="#eeeeee" textLength="52.5" lengthAdjust="spacingAndGlyphs">21.4609</text>
<text x="903.3" y="502.4" font-size="11.8" fill="#eeeeee" textLength="52.5" lengthAdjust="spacingAndGlyphs">14.9884</text>
<text x="964.6" y="502.4" font-size="11.8" fill="#eeeeee" textLength="52.5" lengthAdjust="spacingAndGlyphs">26.6818</text>
<text x="1038.8" y="502.4" font-size="11.8" fill="#eeeeee" textLength="52.5" lengthAdjust="spacingAndGlyphs">47.6069</text>
<text x="1118.8" y="502.4" font-size="11.8" fill="#eeeeee" textLength="52.5" lengthAdjust="spacingAndGlyphs">32.2599</text>
<text x="1179.2" y="502.4" font-size="11.8" fill="#eeeeee" textLength="52.5" lengthAdjust="spacingAndGlyphs">13.0010</text>
<text x="247.6" y="518.8" font-size="11.8" fill="#eeeeee" textLength="54.2" lengthAdjust="spacingAndGlyphs">ΔE 2000</text>
<text x="352.5" y="518.8" font-size="11.8" fill="#eeeeee" textLength="44.4" lengthAdjust="spacingAndGlyphs">3.1575</text>
<text x="421.9" y="518.8" font-size="11.8" fill="#eeeeee" textLength="44.4" lengthAdjust="spacingAndGlyphs">2.2604</text>
<text x="483.2" y="518.8" font-size="11.8" fill="#eeeeee" textLength="44.4" lengthAdjust="spacingAndGlyphs">2.0084</text>
<text x="544.4" y="518.8" font-size="11.8" fill="#eeeeee" textLength="44.4" lengthAdjust="spacingAndGlyphs">1.8214</text>
<text x="605.7" y="518.8" font-size="11.8" fill="#eeeeee" textLength="44.4" lengthAdjust="spacingAndGlyphs">1.5718</text>
<text x="666.1" y="518.8" font-size="11.8" fill="#eeeeee" textLength="44.4" lengthAdjust="spacingAndGlyphs">0.7139</text>
<text x="719.6" y="518.8" font-size="11.8" fill="#eeeeee" textLength="44.4" lengthAdjust="spacingAndGlyphs">1.5949</text>
<text x="780.4" y="518.8" font-size="11.8" fill="#eeeeee" textLength="44.4" lengthAdjust="spacingAndGlyphs">2.4378</text>
<text x="841.7" y="518.8" font-size="11.8" fill="#eeeeee" textLength="44.4" lengthAdjust="spacingAndGlyphs">4.1553</text>
<text x="903.3" y="518.8" font-size="11.8" fill="#eeeeee" textLength="44.4" lengthAdjust="spacingAndGlyphs">3.0603</text>
<text x="964.6" y="518.8" font-size="11.8" fill="#eeeeee" textLength="44.4" lengthAdjust="spacingAndGlyphs">3.5762</text>
<text x="1038.8" y="518.8" font-size="11.8" fill="#eeeeee" textLength="44.4" lengthAdjust="spacingAndGlyphs">4.9976</text>
<text x="1118.8" y="518.8" font-size="11.8" fill="#eeeeee" textLength="44.4" lengthAdjust="spacingAndGlyphs">3.1915</text>
<text x="1179.2" y="518.8" font-size="11.8" fill="#eeeeee" textLength="44.4" lengthAdjust="spacingAndGlyphs">4.1210</text>
<rect x="232.30" y="523.80" width="970.00" height="18.00" fill="#303030"/>
<rect x="243.80" y="524.20" width="956.20" height="10.30" fill="#585858"/>
<rect x="244.80" y="525.00" width="11.50" height="8.80" fill="#777777"/>
<path d="M253.5 526.5 L247.5 529.4 L253.5 532.3 Z" fill="#2e2e2e"/>
<rect x="257.5" y="525.2" width="527" height="8.4" rx="4.2" fill="#4a4a4a" stroke="#535353" stroke-width="0.8"/>
<rect x="1185.00" y="525.00" width="12.50" height="8.80" fill="#6e6e6e"/>
<path d="M1189 526.3 L1195 529.4 L1189 532.5 Z" fill="#2e2e2e"/>
<rect x="1197.50" y="390.00" width="2.50" height="151.00" fill="#2c2c2c"/>
<rect x="1011.3" y="497.3" width="24.2" height="24" rx="3.5" fill="#f7830f"/>
<path d="M1017.5 497.3 L1034.2 497.3 L1033.6 500.6 L1023.6 500.6 L1030.8 510.2 L1025.6 521.3 L1021.2 521.3 L1027.2 510.2 L1018.8 500.2 Z" fill="#4e4e4e"/>
<text x="1039.9" y="517.6" font-size="25.5" fill="#1e1e1e" fill-opacity="0.75" textLength="138.2" lengthAdjust="spacingAndGlyphs">Soomal.com</text>
</svg></body></html>
